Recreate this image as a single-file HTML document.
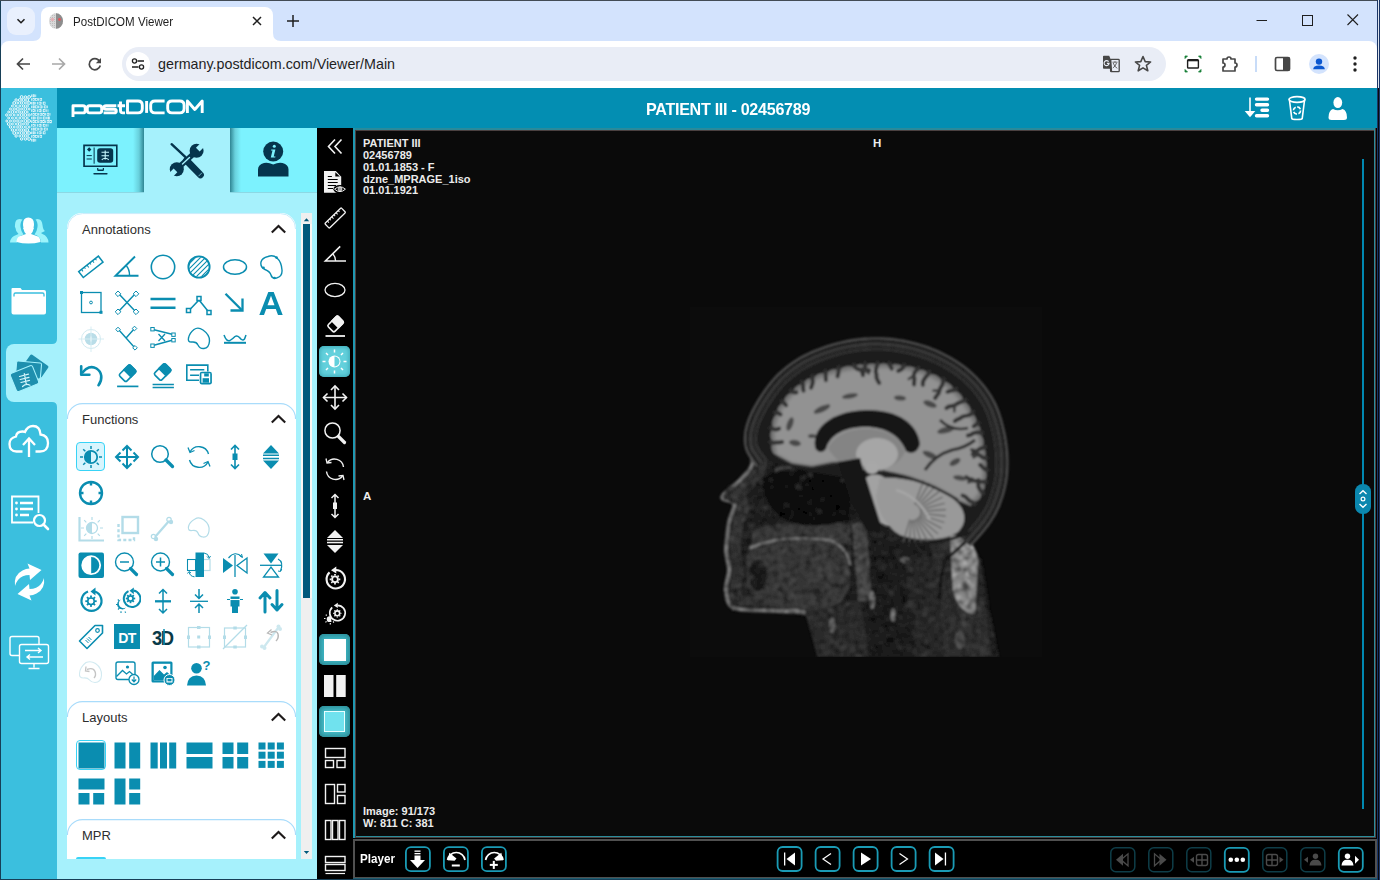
<!DOCTYPE html>
<html><head><meta charset="utf-8">
<style>
*{margin:0;padding:0;box-sizing:border-box}
html,body{width:1380px;height:880px;overflow:hidden;font-family:"Liberation Sans",sans-serif}
body{position:relative;background:#173f57}
.a{position:absolute}
svg{display:block}
</style></head><body>
<div class="a" style="left:0;top:0;width:1380px;height:1px;background:#424b55"></div>
<div class="a" style="left:1377px;top:0;width:1px;height:880px;background:#1a3566"></div>
<div class="a" style="left:1378px;top:0;width:1px;height:88px;background:#dfe6f0"></div><div class="a" style="left:1378px;top:88px;width:1px;height:792px;background:#0a0a0a"></div>
<div class="a" style="left:1379px;top:0;width:1px;height:880px;background:#1a3566"></div>

<!-- browser chrome -->
<div class="a" style="left:1px;top:1px;width:1376px;height:86px;background:#d3e3fd"></div>
<div class="a" style="left:7px;top:7px;width:28px;height:28px;border-radius:9px;background:#e9f0fd"></div>
<svg class="a" style="left:15px;top:15px" width="12" height="12" viewBox="0 0 12 12"><path d="M2.5 4.2 L6 7.7 L9.5 4.2" fill="none" stroke="#1f1f1f" stroke-width="1.6"/></svg>
<!-- tab -->
<div class="a" style="left:41px;top:7px;width:232px;height:40px;border-radius:8px 8px 0 0;background:#fff"></div>
<svg class="a" style="left:33px;top:33px" width="8" height="8"><path d="M0 8 Q8 8 8 0 L8 8 Z" fill="#fff"/></svg>
<svg class="a" style="left:273px;top:33px" width="8" height="8"><path d="M0 0 Q0 8 8 8 L0 8 Z" fill="#fff"/></svg>
<!-- favicon -->
<svg class="a" style="left:48px;top:13px" width="16" height="16" viewBox="0 0 16 16">
<defs><pattern id="fp" width="2" height="2" patternUnits="userSpaceOnUse"><rect width="2" height="2" fill="#d9d9d9"/><rect width="1" height="1" fill="#bdbdbd"/></pattern></defs>
<ellipse cx="8" cy="8" rx="7" ry="7.7" fill="url(#fp)"/>
<path d="M8 0.3 A7 7.7 0 0 1 8 15.7 Z" fill="#8d8d8d"/>
<circle cx="11.5" cy="6.5" r="1.4" fill="#e2555a"/>
<circle cx="4.5" cy="6.5" r="1.8" fill="#e7aab0" opacity=".8"/>
</svg>
<div class="a" style="left:73px;top:15px;font-size:12.5px;color:#1f1f1f;white-space:nowrap;transform:scaleX(.925);transform-origin:0 0">PostDICOM Viewer</div>
<svg class="a" style="left:251px;top:15px" width="12" height="12" viewBox="0 0 12 12"><path d="M2 2 L10 10 M10 2 L2 10" stroke="#1f1f1f" stroke-width="1.5"/></svg>
<svg class="a" style="left:286px;top:14px" width="14" height="14" viewBox="0 0 14 14"><path d="M7 1 V13 M1 7 H13" stroke="#1f1f1f" stroke-width="1.5"/></svg>
<!-- window controls -->
<svg class="a" style="left:1255px;top:14px" width="14" height="14"><path d="M1.5 6.5 H12" stroke="#1f1f1f" stroke-width="1"/></svg>
<svg class="a" style="left:1301px;top:14px" width="14" height="14"><rect x="1.5" y="1.5" width="10" height="10" fill="none" stroke="#1f1f1f" stroke-width="1"/></svg>
<svg class="a" style="left:1346px;top:13px" width="14" height="14"><path d="M1.5 1.5 L12 12 M12 1.5 L1.5 12" stroke="#1f1f1f" stroke-width="1.1"/></svg>
<!-- toolbar -->
<div class="a" style="left:1px;top:41px;width:1376px;height:47px;background:#fff;border-radius:8px 8px 0 0"></div>
<svg class="a" style="left:14px;top:55px" width="18" height="18" viewBox="0 0 18 18"><path d="M16 9 H3.5 M9 3.5 L3.5 9 L9 14.5" fill="none" stroke="#474747" stroke-width="1.7"/></svg>
<svg class="a" style="left:50px;top:55px" width="18" height="18" viewBox="0 0 18 18"><path d="M2 9 H14.5 M9 3.5 L14.5 9 L9 14.5" fill="none" stroke="#a8a8a8" stroke-width="1.7"/></svg>
<svg class="a" style="left:86px;top:55px" width="18" height="18" viewBox="0 0 18 18"><path d="M14.2 7.5 A5.6 5.6 0 1 0 14.3 10.5" fill="none" stroke="#474747" stroke-width="1.7"/><path d="M15 3 V8.2 H9.8 Z" fill="#474747"/></svg>
<div class="a" style="left:122px;top:47px;width:1044px;height:34px;border-radius:17px;background:#e9edf6"></div>
<div class="a" style="left:126px;top:52px;width:24px;height:24px;border-radius:12px;background:#fff"></div>
<svg class="a" style="left:131px;top:57px" width="14" height="14" viewBox="0 0 14 14"><path d="M6.5 4 H13 M1 10 H7.5" stroke="#1f1f1f" stroke-width="1.5"/><circle cx="3.5" cy="4" r="2.1" fill="none" stroke="#1f1f1f" stroke-width="1.3"/><circle cx="10.5" cy="10" r="2.1" fill="none" stroke="#1f1f1f" stroke-width="1.3"/></svg>
<div class="a" style="left:158px;top:56px;font-size:14.3px;color:#1f1f1f;white-space:nowrap">germany.postdicom.com/Viewer/Main</div>
<!-- translate icon -->
<svg class="a" style="left:1101px;top:55px" width="20" height="18" viewBox="0 0 20 18"><path d="M2.8 0.8 H8.2 L9.5 3.8 V13.8 L10.5 16.8 L8.8 13.8 H2.8 Q2 13.8 2 13 V1.6 Q2 0.8 2.8 0.8 Z" fill="#474747"/><rect x="9.6" y="4.4" width="8.6" height="12.3" rx="0.8" fill="#e9edf6" stroke="#474747" stroke-width="1.3"/><path d="M9.5 4 L10.6 16.8" stroke="#474747" stroke-width="1.2"/><path d="M7.6 6.6 A2.5 2.5 0 1 0 8.1 8.4 H5.9" fill="none" stroke="#e9edf6" stroke-width="1.1"/><path d="M11.5 7.2 H16.5 M14 6.2 V7.2 M12.2 8 Q13.5 12 16.3 13.3 M15.5 8 Q14.5 11.5 11.8 13" fill="none" stroke="#5a5a5a" stroke-width="0.9"/></svg>
<svg class="a" style="left:1133px;top:54px" width="20" height="20" viewBox="0 0 20 20"><path d="M10 2.5 L12.2 7.6 L17.6 8 L13.4 11.4 L14.8 16.8 L10 13.9 L5.2 16.8 L6.6 11.4 L2.4 8 L7.8 7.6 Z" fill="none" stroke="#474747" stroke-width="1.6" stroke-linejoin="round"/></svg>
<!-- capture icon -->
<svg class="a" style="left:1183px;top:55px" width="20" height="18" viewBox="0 0 20 18"><path d="M2 1 H4.5 L2 3.5 Z M18 1 H15.5 L18 3.5 Z M2 17 H4.5 L2 14.5 Z M18 17 H15.5 L18 14.5 Z" fill="#188038" stroke="#188038" stroke-width=".8"/><rect x="4.6" y="4.6" width="10.8" height="8.4" rx=".8" fill="none" stroke="#1f1f1f" stroke-width="1.4"/><path d="M4.6 5.6 H15.4" stroke="#1f1f1f" stroke-width="1.4"/></svg>
<svg class="a" style="left:1220px;top:54px" width="20" height="20" viewBox="0 0 20 20"><path d="M3 5 H7 A2 2 0 0 1 11 5 H15 V9 A2 2 0 0 1 15 13 V17 H3 V13 A2 2 0 0 0 3 9 Z" fill="none" stroke="#474747" stroke-width="1.7" stroke-linejoin="round"/></svg>
<div class="a" style="left:1255px;top:56px;width:2px;height:16px;background:#c8dcf8"></div>
<svg class="a" style="left:1273px;top:55px" width="20" height="18" viewBox="0 0 20 18"><rect x="2.5" y="2.5" width="14" height="13" rx="1.5" fill="none" stroke="#474747" stroke-width="1.7"/><rect x="10" y="2.5" width="6.5" height="13" fill="#474747"/></svg>
<div class="a" style="left:1309px;top:54px;width:20px;height:20px;border-radius:10px;background:#d3e3fd"></div>
<svg class="a" style="left:1309px;top:54px" width="20" height="20" viewBox="0 0 20 20"><circle cx="10" cy="7.6" r="3.2" fill="#0b57d0"/><path d="M4.2 15.2 Q4.2 11.4 10 11.4 Q15.8 11.4 15.8 15.2 Z" fill="#0b57d0"/></svg>
<svg class="a" style="left:1350px;top:54px" width="10" height="20" viewBox="0 0 10 20"><circle cx="5" cy="4" r="1.7" fill="#1f1f1f"/><circle cx="5" cy="10" r="1.7" fill="#1f1f1f"/><circle cx="5" cy="16" r="1.7" fill="#1f1f1f"/></svg>

<!-- app header -->
<div class="a" style="left:1px;top:88px;width:56px;height:791px;background:#3bbfde"></div>
<div class="a" style="left:57px;top:88px;width:1320px;height:40px;background:#038eb2"></div>
<!-- logo brain -->
<svg class="a" style="left:0px;top:88px" width="57" height="60" viewBox="0 88 57 60"><circle cx="21.6" cy="97.0" r="1.4" fill="none" stroke="#fff" stroke-width="0.9"/><circle cx="25.4" cy="97.0" r="1.2" fill="none" stroke="#fff" stroke-width="0.9"/><circle cx="29.1" cy="97.0" r="1.4" fill="none" stroke="#fff" stroke-width="0.9"/><circle cx="16.1" cy="100.0" r="1.2" fill="none" stroke="#fff" stroke-width="0.9"/><circle cx="19.8" cy="100.0" r="1.4" fill="none" stroke="#fff" stroke-width="0.9"/><circle cx="23.5" cy="100.0" r="1.4" fill="none" stroke="#fff" stroke-width="0.9"/><circle cx="27.2" cy="100.0" r="1.4" fill="none" stroke="#fff" stroke-width="0.9"/><circle cx="14.2" cy="103.0" r="1.4" fill="none" stroke="#fff" stroke-width="0.9"/><circle cx="17.9" cy="103.0" r="1.0" fill="none" stroke="#fff" stroke-width="0.9"/><circle cx="21.6" cy="103.0" r="1.2" fill="none" stroke="#fff" stroke-width="0.9"/><circle cx="25.4" cy="103.0" r="1.0" fill="none" stroke="#fff" stroke-width="0.9"/><circle cx="29.1" cy="103.0" r="1.4" fill="none" stroke="#fff" stroke-width="0.9"/><circle cx="12.4" cy="106.0" r="1.0" fill="none" stroke="#fff" stroke-width="0.9"/><circle cx="16.1" cy="106.0" r="1.0" fill="none" stroke="#fff" stroke-width="0.9"/><circle cx="19.8" cy="106.0" r="1.0" fill="none" stroke="#fff" stroke-width="0.9"/><circle cx="23.5" cy="106.0" r="1.2" fill="none" stroke="#fff" stroke-width="0.9"/><circle cx="27.2" cy="106.0" r="1.2" fill="none" stroke="#fff" stroke-width="0.9"/><circle cx="10.5" cy="109.0" r="1.0" fill="none" stroke="#fff" stroke-width="0.9"/><circle cx="14.2" cy="109.0" r="1.2" fill="none" stroke="#fff" stroke-width="0.9"/><circle cx="17.9" cy="109.0" r="1.4" fill="none" stroke="#fff" stroke-width="0.9"/><circle cx="21.6" cy="109.0" r="1.0" fill="none" stroke="#fff" stroke-width="0.9"/><circle cx="25.4" cy="109.0" r="1.4" fill="none" stroke="#fff" stroke-width="0.9"/><circle cx="29.1" cy="109.0" r="1.0" fill="none" stroke="#fff" stroke-width="0.9"/><circle cx="8.7" cy="112.0" r="1.0" fill="none" stroke="#fff" stroke-width="0.9"/><circle cx="12.4" cy="112.0" r="1.4" fill="none" stroke="#fff" stroke-width="0.9"/><circle cx="16.1" cy="112.0" r="1.0" fill="none" stroke="#fff" stroke-width="0.9"/><circle cx="19.8" cy="112.0" r="1.2" fill="none" stroke="#fff" stroke-width="0.9"/><circle cx="23.5" cy="112.0" r="1.2" fill="none" stroke="#fff" stroke-width="0.9"/><circle cx="27.2" cy="112.0" r="1.0" fill="none" stroke="#fff" stroke-width="0.9"/><circle cx="6.8" cy="115.0" r="1.2" fill="none" stroke="#fff" stroke-width="0.9"/><circle cx="10.5" cy="115.0" r="1.0" fill="none" stroke="#fff" stroke-width="0.9"/><circle cx="14.2" cy="115.0" r="1.0" fill="none" stroke="#fff" stroke-width="0.9"/><circle cx="17.9" cy="115.0" r="1.0" fill="none" stroke="#fff" stroke-width="0.9"/><circle cx="21.6" cy="115.0" r="1.4" fill="none" stroke="#fff" stroke-width="0.9"/><circle cx="25.4" cy="115.0" r="1.4" fill="none" stroke="#fff" stroke-width="0.9"/><circle cx="29.1" cy="115.0" r="1.2" fill="none" stroke="#fff" stroke-width="0.9"/><circle cx="8.7" cy="118.0" r="1.0" fill="none" stroke="#fff" stroke-width="0.9"/><circle cx="12.4" cy="118.0" r="1.0" fill="none" stroke="#fff" stroke-width="0.9"/><circle cx="16.1" cy="118.0" r="1.0" fill="none" stroke="#fff" stroke-width="0.9"/><circle cx="19.8" cy="118.0" r="1.0" fill="none" stroke="#fff" stroke-width="0.9"/><circle cx="23.5" cy="118.0" r="1.0" fill="none" stroke="#fff" stroke-width="0.9"/><circle cx="27.2" cy="118.0" r="1.0" fill="none" stroke="#fff" stroke-width="0.9"/><circle cx="6.8" cy="121.0" r="1.0" fill="none" stroke="#fff" stroke-width="0.9"/><circle cx="10.5" cy="121.0" r="1.0" fill="none" stroke="#fff" stroke-width="0.9"/><circle cx="14.2" cy="121.0" r="1.2" fill="none" stroke="#fff" stroke-width="0.9"/><circle cx="17.9" cy="121.0" r="1.2" fill="none" stroke="#fff" stroke-width="0.9"/><circle cx="21.6" cy="121.0" r="1.0" fill="none" stroke="#fff" stroke-width="0.9"/><circle cx="25.4" cy="121.0" r="1.4" fill="none" stroke="#fff" stroke-width="0.9"/><circle cx="29.1" cy="121.0" r="1.4" fill="none" stroke="#fff" stroke-width="0.9"/><circle cx="8.7" cy="124.0" r="1.4" fill="none" stroke="#fff" stroke-width="0.9"/><circle cx="12.4" cy="124.0" r="1.0" fill="none" stroke="#fff" stroke-width="0.9"/><circle cx="16.1" cy="124.0" r="1.0" fill="none" stroke="#fff" stroke-width="0.9"/><circle cx="19.8" cy="124.0" r="1.4" fill="none" stroke="#fff" stroke-width="0.9"/><circle cx="23.5" cy="124.0" r="1.0" fill="none" stroke="#fff" stroke-width="0.9"/><circle cx="27.2" cy="124.0" r="1.2" fill="none" stroke="#fff" stroke-width="0.9"/><circle cx="10.5" cy="127.0" r="1.2" fill="none" stroke="#fff" stroke-width="0.9"/><circle cx="14.2" cy="127.0" r="1.0" fill="none" stroke="#fff" stroke-width="0.9"/><circle cx="17.9" cy="127.0" r="1.2" fill="none" stroke="#fff" stroke-width="0.9"/><circle cx="21.6" cy="127.0" r="1.2" fill="none" stroke="#fff" stroke-width="0.9"/><circle cx="25.4" cy="127.0" r="1.0" fill="none" stroke="#fff" stroke-width="0.9"/><circle cx="29.1" cy="127.0" r="1.0" fill="none" stroke="#fff" stroke-width="0.9"/><circle cx="12.4" cy="130.0" r="1.2" fill="none" stroke="#fff" stroke-width="0.9"/><circle cx="16.1" cy="130.0" r="1.0" fill="none" stroke="#fff" stroke-width="0.9"/><circle cx="19.8" cy="130.0" r="1.2" fill="none" stroke="#fff" stroke-width="0.9"/><circle cx="23.5" cy="130.0" r="1.2" fill="none" stroke="#fff" stroke-width="0.9"/><circle cx="27.2" cy="130.0" r="1.4" fill="none" stroke="#fff" stroke-width="0.9"/><circle cx="14.2" cy="133.0" r="1.4" fill="none" stroke="#fff" stroke-width="0.9"/><circle cx="17.9" cy="133.0" r="1.0" fill="none" stroke="#fff" stroke-width="0.9"/><circle cx="21.6" cy="133.0" r="1.4" fill="none" stroke="#fff" stroke-width="0.9"/><circle cx="25.4" cy="133.0" r="1.4" fill="none" stroke="#fff" stroke-width="0.9"/><circle cx="29.1" cy="133.0" r="1.4" fill="none" stroke="#fff" stroke-width="0.9"/><circle cx="16.1" cy="136.0" r="1.2" fill="none" stroke="#fff" stroke-width="0.9"/><circle cx="19.8" cy="136.0" r="1.0" fill="none" stroke="#fff" stroke-width="0.9"/><circle cx="23.5" cy="136.0" r="1.2" fill="none" stroke="#fff" stroke-width="0.9"/><circle cx="27.2" cy="136.0" r="1.2" fill="none" stroke="#fff" stroke-width="0.9"/><circle cx="21.6" cy="139.0" r="1.2" fill="none" stroke="#fff" stroke-width="0.9"/><circle cx="25.4" cy="139.0" r="1.2" fill="none" stroke="#fff" stroke-width="0.9"/><circle cx="29.1" cy="139.0" r="1.4" fill="none" stroke="#fff" stroke-width="0.9"/><rect x="31.0" y="94.5" width="0.75" height="2.6" fill="#fff" opacity=".9"/><rect x="32.9" y="94.7" width="1.7" height="2.2" fill="none" stroke="#fff" stroke-width="0.7" opacity=".9"/><rect x="35.4" y="94.5" width="0.75" height="2.6" fill="#fff" opacity=".9"/><rect x="31.0" y="98.2" width="0.75" height="2.6" fill="#fff" opacity=".9"/><rect x="32.9" y="98.4" width="1.7" height="2.2" fill="none" stroke="#fff" stroke-width="0.7" opacity=".9"/><rect x="35.6" y="98.4" width="1.7" height="2.2" fill="none" stroke="#fff" stroke-width="0.7" opacity=".9"/><rect x="38.1" y="98.2" width="0.75" height="2.6" fill="#fff" opacity=".9"/><rect x="40.0" y="98.4" width="1.7" height="2.2" fill="none" stroke="#fff" stroke-width="0.7" opacity=".9"/><rect x="31.0" y="101.9" width="0.75" height="2.6" fill="#fff" opacity=".9"/><rect x="32.9" y="102.1" width="1.7" height="2.2" fill="none" stroke="#fff" stroke-width="0.7" opacity=".9"/><rect x="35.4" y="101.9" width="0.75" height="2.6" fill="#fff" opacity=".9"/><rect x="37.1" y="101.9" width="0.75" height="2.6" fill="#fff" opacity=".9"/><rect x="39.0" y="102.1" width="1.7" height="2.2" fill="none" stroke="#fff" stroke-width="0.7" opacity=".9"/><rect x="41.5" y="101.9" width="0.75" height="2.6" fill="#fff" opacity=".9"/><rect x="43.4" y="102.1" width="1.7" height="2.2" fill="none" stroke="#fff" stroke-width="0.7" opacity=".9"/><rect x="31.0" y="105.6" width="0.75" height="2.6" fill="#fff" opacity=".9"/><rect x="32.9" y="105.8" width="1.7" height="2.2" fill="none" stroke="#fff" stroke-width="0.7" opacity=".9"/><rect x="35.6" y="105.8" width="1.7" height="2.2" fill="none" stroke="#fff" stroke-width="0.7" opacity=".9"/><rect x="38.1" y="105.6" width="0.75" height="2.6" fill="#fff" opacity=".9"/><rect x="40.0" y="105.8" width="1.7" height="2.2" fill="none" stroke="#fff" stroke-width="0.7" opacity=".9"/><rect x="42.5" y="105.6" width="0.75" height="2.6" fill="#fff" opacity=".9"/><rect x="44.4" y="105.8" width="1.7" height="2.2" fill="none" stroke="#fff" stroke-width="0.7" opacity=".9"/><rect x="46.9" y="105.6" width="0.75" height="2.6" fill="#fff" opacity=".9"/><rect x="31.0" y="109.3" width="0.75" height="2.6" fill="#fff" opacity=".9"/><rect x="32.9" y="109.5" width="1.7" height="2.2" fill="none" stroke="#fff" stroke-width="0.7" opacity=".9"/><rect x="35.4" y="109.3" width="0.75" height="2.6" fill="#fff" opacity=".9"/><rect x="37.1" y="109.3" width="0.75" height="2.6" fill="#fff" opacity=".9"/><rect x="39.0" y="109.5" width="1.7" height="2.2" fill="none" stroke="#fff" stroke-width="0.7" opacity=".9"/><rect x="41.5" y="109.3" width="0.75" height="2.6" fill="#fff" opacity=".9"/><rect x="43.4" y="109.5" width="1.7" height="2.2" fill="none" stroke="#fff" stroke-width="0.7" opacity=".9"/><rect x="45.9" y="109.3" width="0.75" height="2.6" fill="#fff" opacity=".9"/><rect x="47.6" y="109.3" width="0.75" height="2.6" fill="#fff" opacity=".9"/><rect x="31.0" y="113.0" width="0.75" height="2.6" fill="#fff" opacity=".9"/><rect x="32.9" y="113.2" width="1.7" height="2.2" fill="none" stroke="#fff" stroke-width="0.7" opacity=".9"/><rect x="35.6" y="113.2" width="1.7" height="2.2" fill="none" stroke="#fff" stroke-width="0.7" opacity=".9"/><rect x="38.1" y="113.0" width="0.75" height="2.6" fill="#fff" opacity=".9"/><rect x="40.0" y="113.2" width="1.7" height="2.2" fill="none" stroke="#fff" stroke-width="0.7" opacity=".9"/><rect x="42.7" y="113.2" width="1.7" height="2.2" fill="none" stroke="#fff" stroke-width="0.7" opacity=".9"/><rect x="45.2" y="113.0" width="0.75" height="2.6" fill="#fff" opacity=".9"/><rect x="47.1" y="113.2" width="1.7" height="2.2" fill="none" stroke="#fff" stroke-width="0.7" opacity=".9"/><rect x="49.6" y="113.0" width="0.75" height="2.6" fill="#fff" opacity=".9"/><rect x="31.0" y="116.7" width="0.75" height="2.6" fill="#fff" opacity=".9"/><rect x="32.9" y="116.9" width="1.7" height="2.2" fill="none" stroke="#fff" stroke-width="0.7" opacity=".9"/><rect x="35.4" y="116.7" width="0.75" height="2.6" fill="#fff" opacity=".9"/><rect x="37.3" y="116.9" width="1.7" height="2.2" fill="none" stroke="#fff" stroke-width="0.7" opacity=".9"/><rect x="39.8" y="116.7" width="0.75" height="2.6" fill="#fff" opacity=".9"/><rect x="41.5" y="116.7" width="0.75" height="2.6" fill="#fff" opacity=".9"/><rect x="43.4" y="116.9" width="1.7" height="2.2" fill="none" stroke="#fff" stroke-width="0.7" opacity=".9"/><rect x="45.9" y="116.7" width="0.75" height="2.6" fill="#fff" opacity=".9"/><rect x="47.8" y="116.9" width="1.7" height="2.2" fill="none" stroke="#fff" stroke-width="0.7" opacity=".9"/><rect x="31.0" y="120.4" width="0.75" height="2.6" fill="#fff" opacity=".9"/><rect x="32.9" y="120.6" width="1.7" height="2.2" fill="none" stroke="#fff" stroke-width="0.7" opacity=".9"/><rect x="35.6" y="120.6" width="1.7" height="2.2" fill="none" stroke="#fff" stroke-width="0.7" opacity=".9"/><rect x="38.1" y="120.4" width="0.75" height="2.6" fill="#fff" opacity=".9"/><rect x="40.0" y="120.6" width="1.7" height="2.2" fill="none" stroke="#fff" stroke-width="0.7" opacity=".9"/><rect x="42.7" y="120.6" width="1.7" height="2.2" fill="none" stroke="#fff" stroke-width="0.7" opacity=".9"/><rect x="45.2" y="120.4" width="0.75" height="2.6" fill="#fff" opacity=".9"/><rect x="47.1" y="120.6" width="1.7" height="2.2" fill="none" stroke="#fff" stroke-width="0.7" opacity=".9"/><rect x="49.8" y="120.6" width="1.7" height="2.2" fill="none" stroke="#fff" stroke-width="0.7" opacity=".9"/><rect x="31.0" y="124.1" width="0.75" height="2.6" fill="#fff" opacity=".9"/><rect x="32.9" y="124.3" width="1.7" height="2.2" fill="none" stroke="#fff" stroke-width="0.7" opacity=".9"/><rect x="35.4" y="124.1" width="0.75" height="2.6" fill="#fff" opacity=".9"/><rect x="37.1" y="124.1" width="0.75" height="2.6" fill="#fff" opacity=".9"/><rect x="39.0" y="124.3" width="1.7" height="2.2" fill="none" stroke="#fff" stroke-width="0.7" opacity=".9"/><rect x="41.5" y="124.1" width="0.75" height="2.6" fill="#fff" opacity=".9"/><rect x="43.4" y="124.3" width="1.7" height="2.2" fill="none" stroke="#fff" stroke-width="0.7" opacity=".9"/><rect x="45.9" y="124.1" width="0.75" height="2.6" fill="#fff" opacity=".9"/><rect x="47.6" y="124.1" width="0.75" height="2.6" fill="#fff" opacity=".9"/><rect x="31.0" y="127.8" width="0.75" height="2.6" fill="#fff" opacity=".9"/><rect x="32.9" y="128.0" width="1.7" height="2.2" fill="none" stroke="#fff" stroke-width="0.7" opacity=".9"/><rect x="35.6" y="128.0" width="1.7" height="2.2" fill="none" stroke="#fff" stroke-width="0.7" opacity=".9"/><rect x="38.1" y="127.8" width="0.75" height="2.6" fill="#fff" opacity=".9"/><rect x="40.0" y="128.0" width="1.7" height="2.2" fill="none" stroke="#fff" stroke-width="0.7" opacity=".9"/><rect x="42.5" y="127.8" width="0.75" height="2.6" fill="#fff" opacity=".9"/><rect x="44.4" y="128.0" width="1.7" height="2.2" fill="none" stroke="#fff" stroke-width="0.7" opacity=".9"/><rect x="46.9" y="127.8" width="0.75" height="2.6" fill="#fff" opacity=".9"/><rect x="31.0" y="131.5" width="0.75" height="2.6" fill="#fff" opacity=".9"/><rect x="32.9" y="131.7" width="1.7" height="2.2" fill="none" stroke="#fff" stroke-width="0.7" opacity=".9"/><rect x="35.4" y="131.5" width="0.75" height="2.6" fill="#fff" opacity=".9"/><rect x="37.1" y="131.5" width="0.75" height="2.6" fill="#fff" opacity=".9"/><rect x="39.0" y="131.7" width="1.7" height="2.2" fill="none" stroke="#fff" stroke-width="0.7" opacity=".9"/><rect x="41.5" y="131.5" width="0.75" height="2.6" fill="#fff" opacity=".9"/><rect x="43.4" y="131.7" width="1.7" height="2.2" fill="none" stroke="#fff" stroke-width="0.7" opacity=".9"/><rect x="31.0" y="135.2" width="0.75" height="2.6" fill="#fff" opacity=".9"/><rect x="32.9" y="135.4" width="1.7" height="2.2" fill="none" stroke="#fff" stroke-width="0.7" opacity=".9"/><rect x="35.6" y="135.4" width="1.7" height="2.2" fill="none" stroke="#fff" stroke-width="0.7" opacity=".9"/><rect x="38.1" y="135.2" width="0.75" height="2.6" fill="#fff" opacity=".9"/><rect x="40.0" y="135.4" width="1.7" height="2.2" fill="none" stroke="#fff" stroke-width="0.7" opacity=".9"/><rect x="31.0" y="138.9" width="0.75" height="2.6" fill="#fff" opacity=".9"/><rect x="32.9" y="139.1" width="1.7" height="2.2" fill="none" stroke="#fff" stroke-width="0.7" opacity=".9"/><rect x="35.4" y="138.9" width="0.75" height="2.6" fill="#fff" opacity=".9"/></svg>
<!-- postDICOM wordmark -->
<svg class="a" style="left:70px;top:97px" width="136" height="22" viewBox="0 0 136 22">
<g fill="none" stroke="#fff" stroke-width="2.9" stroke-linejoin="round">
<path d="M3 20 V8.7 H13 Q15.2 8.7 15.2 11 V13.7 Q15.2 15.9 13 15.9 H3"/>
<path d="M19.5 8.7 H29.5 Q31.7 8.7 31.7 11 V13.6 Q31.7 15.9 29.5 15.9 H19.5 Q17.3 15.9 17.3 13.6 V11 Q17.3 8.7 19.5 8.7 Z"/>
<path d="M46.3 8.7 H36 Q34 8.7 34 10.4 Q34 12.2 36 12.2 H44 Q46.3 12.2 46.3 14 Q46.3 15.9 44 15.9 H33.6"/>
<path d="M50.5 4.5 V13.6 Q50.5 15.9 52.8 15.9 H55 M47.5 8.7 H55"/>
<path d="M57.5 4 H68 Q72.3 4 72.3 8.3 V11.6 Q72.3 15.9 68 15.9 H57.5 Z"/>
<path d="M76.6 4 V15.9"/>
<path d="M94.6 4 H85 Q80.7 4 80.7 8.3 V11.6 Q80.7 15.9 85 15.9 H94.6"/>
<path d="M102 4 H109.8 Q114.1 4 114.1 8.3 V11.6 Q114.1 15.9 109.8 15.9 H102 Q97.7 15.9 97.7 11.6 V8.3 Q97.7 4 102 4 Z"/>
<path d="M117.4 16 V4 L124.8 12.5 L132.2 4 V16"/>
</g></svg>
<div class="a" style="left:646px;top:100px;font-size:17px;font-weight:bold;color:#fff;white-space:nowrap;letter-spacing:-0.3px;transform:scaleX(.947);transform-origin:0 0">PATIENT III - 02456789</div>
<!-- header right icons -->
<svg class="a" style="left:1243px;top:96px" width="28" height="24" viewBox="0 0 28 24">
<path d="M7 1.5 V16" stroke="#fff" stroke-width="1.6"/><path d="M1.7 15 H12.3 L7 21.3 Z" fill="#fff"/>
<g stroke="#fff" stroke-width="3.4" stroke-linecap="round"><path d="M13.5 3.1 H24.5 M13.5 8.8 H24.5 M19 14.2 H24.5 M13.5 19.7 H24.5"/></g>
</svg>
<svg class="a" style="left:1286px;top:94px" width="22" height="28" viewBox="0 0 22 28">
<path d="M3.5 6.5 L5.8 24.5 Q6 25.5 11 25.5 Q16 25.5 16.2 24.5 L18.5 6.5" fill="none" stroke="#fff" stroke-width="1.6"/>
<ellipse cx="11" cy="5.5" rx="8" ry="2.8" fill="none" stroke="#fff" stroke-width="1.8"/>
<circle cx="11" cy="16.5" r="3.6" fill="none" stroke="#fff" stroke-width="1.6" stroke-dasharray="4 1.6"/>
</svg>
<svg class="a" style="left:1327px;top:95px" width="22" height="26" viewBox="0 0 22 26">
<ellipse cx="10.8" cy="7.6" rx="4.4" ry="5.5" fill="#fff"/>
<path d="M1.5 22.5 Q1.5 15.5 6 14 Q10.8 16.5 15.6 14 Q20 15.5 20 22.5 Q20 25 17 25 H4.5 Q1.5 25 1.5 22.5 Z" fill="#fff"/>
</svg>

<!-- nav icons -->
<div class="a" style="left:6px;top:344px;width:51px;height:58px;background:#a6f1fc;border-radius:8px 0 0 8px"></div>
<svg class="a" style="left:52px;top:338px" width="5" height="70" viewBox="0 0 5 70">
<path d="M5 0 V6 H0 Q5 6 5 1 Z" fill="#a6f1fc"/>
<path d="M5 70 V64 H0 Q5 64 5 69 Z" fill="#a6f1fc"/>
</svg>
<svg class="a" style="left:1px;top:88px" width="56" height="791" viewBox="1 88 56 791">
<!-- users -->
<g fill="#9cf4fb">
<path d="M19.5 219 Q15 219 15 225 Q14.5 227 15.5 228 Q15.5 231 18.5 234 L14 236 Q10 238.5 10 242.5 H17 Q17 238 21 235.5 L23.5 234.5 Q21 231.5 20.5 227 Q20 222 22.5 219.5 Z"/>
<path d="M37.5 219 Q42 219 42.5 225 Q43 230 45 231 L41 233 L42.5 234 Q48 236 48.5 242.5 H41 Q41 238 37 235.5 L34.5 234.5 Q37 231.5 37.5 227 Q38 222 35.5 219.5 Z"/>
</g>
<g fill="#fff">
<path d="M28.3 217.5 Q23 217.5 23 224 Q23 226.5 23.5 227.5 Q22.5 228 23.5 229 Q24 232 26 234 L19 236.5 Q16.5 238 16.5 242 Q22 243.5 28.5 243.5 Q35 243.5 40.5 242 Q40.5 238 38 236.5 L31 234 Q33 232 33.5 229 Q34.5 228 33.5 227.5 Q34 226.5 34 224 Q34 217.5 28.3 217.5 Z"/>
<!-- folder -->
<path d="M12.5 288 H20.5 L22 290 H44 Q46 290 46 292 V312.5 Q46 314.5 44 314.5 H13.5 Q11.5 314.5 11.5 312.5 V289 Q11.5 288 12.5 288 Z"/>
</g>
<path d="M14 296.5 V294.5 Q14 293 15.5 293 H42.5 Q44 293 44 294.5 V296.5" fill="none" stroke="#3bbfde" stroke-width="1.3"/>
<!-- film cards -->
<g transform="rotate(35 36 366)"><rect x="25" y="359" width="22" height="14" rx="1.5" fill="#1e8fae"/></g>
<g transform="rotate(5 28.5 370)"><rect x="16" y="362" width="25" height="16" rx="1.5" fill="#1e8fae" stroke="#a6f1fc" stroke-width="1.1"/></g>
<g transform="rotate(-22 24.5 378.6)"><rect x="12.5" y="368.8" width="24" height="19.6" rx="2" fill="#1e8fae" stroke="#a6f1fc" stroke-width="1.1"/></g>
<g stroke="#d6f6fb" stroke-width="1.2" fill="none" stroke-linecap="round"><path d="M24.3 373.5 L26.3 384.5 M19.5 376.5 L28.5 374.2 M20.2 379.5 L29 377.3 M21 382.5 L29.5 380.3 M22.5 386.5 Q26 383 30 385.2"/></g>
<!-- cloud -->
<g fill="none" stroke="#fff" stroke-width="2.3">
<path d="M22.5 451.5 H16.5 Q9.5 451.5 9.5 444 Q9.5 438 16 436.5 Q16.5 431.5 22.5 431.5 Q24 431.5 25 432 Q27.5 426 33 426 Q40 426 40.5 434.5 Q48 435.5 48 443 Q48 451.5 40 451.5 H35.5"/>
<path d="M29 457 V438.5 M23 445 L29 438.5 L35 445"/>
</g>
<!-- list search -->
<g fill="none" stroke="#fff">
<path d="M33 522.5 H12 V496.5 H38.5 V513" stroke-width="1.8"/>
<path d="M20 503 H33 M20 509 H33 M20 515 H29" stroke-width="2.3"/>
<circle cx="39.5" cy="520.5" r="5.5" stroke-width="2.2"/><path d="M43.5 524.5 L48 529" stroke-width="2.6" stroke-linecap="round"/>
</g>
<g fill="#fff"><circle cx="16.5" cy="503" r="1.4"/><circle cx="16.5" cy="509" r="1.4"/><circle cx="16.5" cy="515" r="1.4"/></g>
<!-- sync -->
<g fill="#fff">
<path d="M15 586 Q13.5 575 22.5 570.5 Q26 568.5 29.5 568.5 L27.5 563.5 L41.5 570 L30 580 L29.5 575 Q22 575 18 580 Q16 582.5 15 586 Z"/>
<path d="M44 578 Q45.5 589 36.5 593.5 Q33 595.5 29.5 595.5 L31.5 600.5 L17.5 594 L29 584 L29.5 589 Q37 589 41 584 Q43 581.5 44 578 Z"/>
</g>
<!-- monitors -->
<g fill="none" stroke="#fff" stroke-width="1.4">
<rect x="10" y="636.5" width="29" height="19" rx="2"/>
<rect x="19.5" y="644.5" width="29" height="19" rx="2" fill="#3bbfde"/>
<path d="M34 663.5 V667.5 M28.5 668.5 H39.5"/>
<path d="M25 650.5 H41 M38 648 L41 650.5 L38 653 M27 657 H43 M30 654.5 L27 657 L30 659.5"/>
</g>
</svg>

<!-- side panel -->
<div class="a" style="left:57px;top:128px;width:260px;height:751px;background:#a6f1fc"></div>
<div class="a" style="left:57px;top:128px;width:87px;height:65px;background:linear-gradient(to right,#7cf2fe 0,#7cf2fe 76px,#68d0dc 82px,#2f8593 87px)"></div>
<div class="a" style="left:230px;top:128px;width:87px;height:65px;background:linear-gradient(to left,#7cf2fe 0,#7cf2fe 76px,#68d0dc 82px,#2f8593 87px)"></div>
<div class="a" style="left:57px;top:192px;width:87px;height:1px;background:#8cd8e4"></div>
<div class="a" style="left:230px;top:192px;width:87px;height:1px;background:#8cd8e4"></div>
<!-- tab1 icon monitor -->
<svg class="a" style="left:81px;top:142px" width="40" height="34" viewBox="0 0 40 34">
<g fill="#06354d">
<path d="M2.2 2.6 H36.6 V25 H2.2 Z M3.9 4.2 V23.4 H35 V4.2 Z" fill-rule="evenodd"/>
<rect x="12.5" y="5.5" width="1.3" height="16.2" fill="#1e5d72"/>
<path d="M8.2 5.2 L10.4 7.5 L8.2 9.8 L6 7.5 Z"/>
<rect x="5.6" y="13.1" width="5.2" height="1"/><rect x="5.6" y="16.5" width="5.2" height="1"/>
<rect x="16.2" y="6.3" width="16" height="14.5" rx="2.8"/>
<path d="M16.1 26 V27.8 Q16.1 29 17.3 29 H21.8 Q23 29 23 27.8 V26 H21.8 V27.6 H17.3 V26 Z"/>
<rect x="12.3" y="31" width="14.3" height="1.4" rx=".7"/>
</g>
<g stroke="#c8f8fe" stroke-width="1.1" fill="none"><path d="M24.2 8.5 V17.5 M20.5 10.2 H28 M20.5 13.7 H28 M20.8 17.8 Q22.5 15.8 24.2 16.8 Q26 15.8 27.7 17.8"/></g>
</svg>
<!-- tab2 icon tools -->
<svg class="a" style="left:168px;top:141px" width="38" height="39" viewBox="0 0 38 39">
<defs><mask id="wm"><rect width="38" height="39" fill="#fff"/>
<path d="M29.8 8.6 L36 2.4" stroke="#000" stroke-width="5.2" stroke-linecap="butt"/>
<path d="M7.5 29.4 L1.3 35.6" stroke="#000" stroke-width="5.2" stroke-linecap="butt"/>
</mask></defs>
<g fill="#06354d">
<path d="M3.6 3.2 L17.5 16.2" stroke="#06354d" stroke-width="2.4" stroke-linecap="round"/>
<g mask="url(#wm)">
<circle cx="28.6" cy="9.8" r="7"/><circle cx="8.8" cy="28.2" r="7"/>
<path d="M10 27 L27.5 11" stroke="#06354d" stroke-width="5.5"/>
</g>
<path d="M18.5 19.5 L32.5 33.8" stroke="#06354d" stroke-width="6.8" stroke-linecap="round"/>
</g>
<path d="M14.5 23 L21.5 16.5" stroke="#a6f1fc" stroke-width="1.4" stroke-linecap="round"/>
<path d="M30.5 35.2 L34 31.7" stroke="#a6f1fc" stroke-width=".7"/>
</svg>
<!-- tab3 icon person info -->
<svg class="a" style="left:256px;top:140px" width="36" height="38" viewBox="0 0 36 38">
<circle cx="17.2" cy="11.5" r="10" fill="#06354d"/>
<path d="M2 36.6 V29.5 Q2 24.5 8 23 Q12 22 17.2 24.5 Q22.5 22 26.5 23 Q32.5 24.5 32.5 29.5 V36.6 Z" fill="#06354d"/>
<circle cx="18.3" cy="6.3" r="1.5" fill="#7cf2fe"/>
<path d="M15.3 9.5 H19.4 L17.7 16.6 H19.5 L19.2 17.6 H14.8 L16.5 10.5 H15 Z" fill="#7cf2fe"/>
</svg>

<!-- cards -->
<div class="a" style="left:67px;top:213px;width:229px;height:646px;background:#fff;border-radius:15px 15px 0 0"></div>
<svg class="a" style="left:67px;top:213px" width="229" height="20" viewBox="0 0 229 20"><path d="M0.5 16 A15 15 0 0 1 15.5 0.6 H213.5 A15 15 0 0 1 228.5 16" fill="none" stroke="#c8ecfb" stroke-width="1"/></svg>
<div class="a" style="left:82px;top:222px;font-size:13px;color:#2e2e2e;white-space:nowrap">Annotations</div>
<svg class="a" style="left:270px;top:223px" width="17" height="12" viewBox="0 0 17 12"><path d="M1.8 9.6 L8.5 2.9 L15.2 9.6" fill="none" stroke="#1e1a1a" stroke-width="2.1"/></svg>
<svg class="a" style="left:67px;top:403px" width="229" height="20" viewBox="0 0 229 20"><path d="M0.5 16 A15 15 0 0 1 15.5 0.6 H213.5 A15 15 0 0 1 228.5 16" fill="none" stroke="#a9dcfb" stroke-width="1.1"/></svg>
<div class="a" style="left:82px;top:412px;font-size:13px;color:#2e2e2e;white-space:nowrap">Functions</div>
<svg class="a" style="left:270px;top:413px" width="17" height="12" viewBox="0 0 17 12"><path d="M1.8 9.6 L8.5 2.9 L15.2 9.6" fill="none" stroke="#1e1a1a" stroke-width="2.1"/></svg>
<svg class="a" style="left:67px;top:701px" width="229" height="20" viewBox="0 0 229 20"><path d="M0.5 16 A15 15 0 0 1 15.5 0.6 H213.5 A15 15 0 0 1 228.5 16" fill="none" stroke="#a9dcfb" stroke-width="1.1"/></svg>
<div class="a" style="left:82px;top:710px;font-size:13px;color:#2e2e2e;white-space:nowrap">Layouts</div>
<svg class="a" style="left:270px;top:711px" width="17" height="12" viewBox="0 0 17 12"><path d="M1.8 9.6 L8.5 2.9 L15.2 9.6" fill="none" stroke="#1e1a1a" stroke-width="2.1"/></svg>
<svg class="a" style="left:67px;top:819px" width="229" height="20" viewBox="0 0 229 20"><path d="M0.5 16 A15 15 0 0 1 15.5 0.6 H213.5 A15 15 0 0 1 228.5 16" fill="none" stroke="#a9dcfb" stroke-width="1.1"/></svg>
<div class="a" style="left:82px;top:828px;font-size:13px;color:#2e2e2e;white-space:nowrap">MPR</div>
<svg class="a" style="left:270px;top:829px" width="17" height="12" viewBox="0 0 17 12"><path d="M1.8 9.6 L8.5 2.9 L15.2 9.6" fill="none" stroke="#1e1a1a" stroke-width="2.1"/></svg>
<div class="a" style="left:301px;top:213px;width:11px;height:646px;background:#efefef"></div>
<div class="a" style="left:301px;top:224px;width:11px;height:374px;background:#fbf5f2"></div>
<div class="a" style="left:303px;top:224px;width:7px;height:374px;background:#00597b"></div>
<svg class="a" style="left:301px;top:213px" width="11" height="12"><path d="M2.8 8.3 L5.5 5.2 L8.2 8.3 Z" fill="#00597b"/></svg>
<svg class="a" style="left:301px;top:847px" width="11" height="12"><path d="M2.8 4 L5.5 7.1 L8.2 4 Z" fill="#00597b"/></svg>
<div class="a" style="left:76px;top:442px;width:29px;height:29px;border-radius:4px;background:#d8f5fd;border:1.3px solid #38d3f6"></div>
<div class="a" style="left:76px;top:740px;width:30px;height:30px;border-radius:4px;border:1.3px solid #38d3f6;background:#fff"></div>
<div class="a" style="left:76px;top:857px;width:30px;height:2px;background:#38d3f6;border-radius:2px 2px 0 0"></div>
<svg class="a" style="left:76.5px;top:252.5px" width="28" height="28" viewBox="0 0 28 28"><g transform="rotate(-38 14 14)"><rect x="1.5" y="10" width="25" height="7.5" fill="none" stroke="#0a8db0" stroke-width="1.5"/><path d="M5 10 V12.5 M8.5 10 V12 M12 10 V13 M15.5 10 V12 M19 10 V12.5 M22.5 10 V12" fill="none" stroke="#0a8db0" stroke-width="1"/></g></svg>
<svg class="a" style="left:112.5px;top:252.5px" width="28" height="28" viewBox="0 0 28 28"><path d="M22 3.5 L2.5 22.8 H25.5" fill="none" stroke="#0a8db0" stroke-width="1.9"/><path d="M13.5 13 Q16.5 16.5 16.5 22" fill="none" stroke="#0a8db0" stroke-width="1.4"/></svg>
<svg class="a" style="left:148.5px;top:252.5px" width="28" height="28" viewBox="0 0 28 28"><circle cx="14" cy="14" r="11.7" fill="none" stroke="#0a8db0" stroke-width="1.6"/></svg>
<svg class="a" style="left:184.5px;top:252.5px" width="28" height="28" viewBox="0 0 28 28"><defs><clipPath id="hc"><circle cx="14" cy="14" r="10"/></clipPath></defs><circle cx="14" cy="14" r="10.6" fill="none" stroke="#0a8db0" stroke-width="1.9"/><g clip-path="url(#hc)" fill="none" stroke="#0a8db0" stroke-width="1.1"><path d="M0 10 L10 0 M0 15 L15 0 M0 20 L20 0 M0 25 L25 0 M2 28 L28 2 M7 28 L28 7 M12 28 L28 12 M17 28 L28 17 M22 28 L28 22"/></g></svg>
<svg class="a" style="left:220.5px;top:252.5px" width="28" height="28" viewBox="0 0 28 28"><ellipse cx="14" cy="14" rx="11.5" ry="7.3" fill="none" stroke="#0a8db0" stroke-width="1.5"/></svg>
<svg class="a" style="left:256.5px;top:252.5px" width="28" height="28" viewBox="0 0 28 28"><path d="M11 3.5 Q16 1.5 20 5 Q24.5 9 25 17 Q25.5 23.5 19.5 25 Q15 26 14 22 Q13 18.5 8 16.5 Q3 14 4 9 Q5 5 11 3.5 Z" fill="none" stroke="#0a8db0" stroke-width="1.4"/><circle cx="19.5" cy="4.6" r="1.3" fill="#0a8db0"/><circle cx="6.5" cy="14.8" r="1.3" fill="#0a8db0"/><circle cx="17.5" cy="25" r="1.3" fill="#0a8db0"/></svg>
<svg class="a" style="left:76.5px;top:288.5px" width="28" height="28" viewBox="0 0 28 28"><rect x="4.5" y="3.5" width="19.5" height="20" fill="none" stroke="#0a8db0" stroke-width="1.3"/><rect x="3" y="2" width="3" height="3" fill="#0a8db0"/><rect x="22.5" y="21.8" width="3" height="3" fill="#0a8db0"/><circle cx="14" cy="13.5" r="1.4" fill="none" stroke="#0a8db0" stroke-width="1"/></svg>
<svg class="a" style="left:112.5px;top:288.5px" width="28" height="28" viewBox="0 0 28 28"><path d="M6 5 L22 22 M22 5 L6 22" fill="none" stroke="#0a8db0" stroke-width="1.5"/><g fill="none" stroke="#0a8db0" stroke-width="1" fill="#fff"><path d="M5 2 L7.8 4.8 L5 7.6 L2.2 4.8 Z M23 2 L25.8 4.8 L23 7.6 L20.2 4.8 Z M5 20 L7.8 22.8 L5 25.6 L2.2 22.8 Z M23 20 L25.8 22.8 L23 25.6 L20.2 22.8 Z" fill="#fff"/></g></svg>
<svg class="a" style="left:148.5px;top:288.5px" width="28" height="28" viewBox="0 0 28 28"><path d="M1.5 10 H26.5 M1.5 18.8 H26.5" fill="none" stroke="#0a8db0" stroke-width="2.5"/></svg>
<svg class="a" style="left:184.5px;top:288.5px" width="28" height="28" viewBox="0 0 28 28"><path d="M3.5 22 L14 11 L24.5 24" fill="none" stroke="#0a8db0" stroke-width="1.5"/><g fill="#fff" fill="none" stroke="#0a8db0" stroke-width="1.5"><rect x="1.5" y="19.5" width="4" height="4"/><rect x="12" y="7.5" width="4" height="4"/><rect x="22" y="21.5" width="4" height="4"/></g></svg>
<svg class="a" style="left:220.5px;top:288.5px" width="28" height="28" viewBox="0 0 28 28"><path d="M4.5 4.8 L20.5 20.8" fill="none" stroke="#0a8db0" stroke-width="2.3"/><path d="M9.5 21.5 H21.5 V9.5" fill="none" stroke="#0a8db0" stroke-width="2.3"/></svg>
<svg class="a" style="left:256.5px;top:288.5px" width="28" height="28" viewBox="0 0 28 28"><path d="M2.3 26 L11.3 3 H16.7 L25.7 26 H21 L18.8 20 H9.2 L7 26 Z M10.5 16.3 H17.5 L14 6.8 Z" fill="#0a8db0" fill-rule="evenodd"/></svg>
<svg class="a" style="left:76.5px;top:324.5px" width="28" height="28" viewBox="0 0 28 28"><circle cx="14" cy="14" r="9.5" fill="none" stroke="#d2eaf1" stroke-width="1"/><circle cx="14" cy="14" r="6.2" fill="#b9dde8"/><path d="M14 1.5 V27 M1.5 14 H27" stroke="#d6edf3" stroke-width="1"/><path d="M14 11.5 V16.5" stroke="#e8f6f9" stroke-width="1"/></svg>
<svg class="a" style="left:112.5px;top:324.5px" width="28" height="28" viewBox="0 0 28 28"><path d="M5.5 4.5 L21.5 22.5 M21.5 3.5 L13.5 12.5" fill="none" stroke="#0a8db0" stroke-width="1.4"/><g stroke="#0a8db0" stroke-width="1" fill="#fff"><path d="M5 2.2 L7.3 4.5 L5 6.8 L2.7 4.5 Z M21.5 1.2 L23.8 3.5 L21.5 5.8 L19.2 3.5 Z M22 20.5 L24.3 22.8 L22 25.1 L19.7 22.8 Z"/></g></svg>
<svg class="a" style="left:148.5px;top:324.5px" width="28" height="28" viewBox="0 0 28 28"><path d="M4 4.5 L24 9.5 M4 20.5 L24 15 M9.5 9 L16 16 M16 9 L9.5 16" fill="none" stroke="#0a8db0" stroke-width="1.3"/><g stroke="#0a8db0" stroke-width="1" fill="#fff"><rect x="1.8" y="2.5" width="3.4" height="3.4"/><rect x="1.8" y="19" width="3.4" height="3.4"/><rect x="22.8" y="8" width="3.4" height="3.4"/><rect x="22.8" y="13.5" width="3.4" height="3.4"/></g></svg>
<svg class="a" style="left:184.5px;top:324.5px" width="28" height="28" viewBox="0 0 28 28"><path d="M9 4.5 Q13 1.5 18 5 Q25 10 24.5 16 Q24 23 19 23.5 Q15 24 13 20 Q11.5 16.5 7 17 Q2.5 17.5 3.5 13 Q4.5 8 9 4.5 Z" fill="none" stroke="#0a8db0" stroke-width="1.4"/></svg>
<svg class="a" style="left:220.5px;top:324.5px" width="28" height="28" viewBox="0 0 28 28"><path d="M3 10 Q5.5 17 9 15.5 Q12 13.5 14 11.5 Q16 10 18.5 12.5 Q21.5 16.5 23.5 14 L25 10" fill="none" stroke="#0a8db0" stroke-width="1.5"/><path d="M3 17.8 H25" fill="none" stroke="#0a8db0" stroke-width="2"/></svg>
<svg class="a" style="left:76.5px;top:360.5px" width="28" height="28" viewBox="0 0 28 28"><path d="M21.5 24.2 C26 18 25 11 19.5 7.5 C14.5 4.5 9 6.5 5.5 11.5" fill="none" stroke="#0a8db0" stroke-width="2.6" stroke-linecap="round"/><path d="M4.2 5.3 V13.8 H12.4" fill="none" stroke="#0a8db0" stroke-width="2.6" stroke-linecap="round" stroke-linejoin="round"/></svg>
<svg class="a" style="left:112.5px;top:360.5px" width="28" height="28" viewBox="0 0 28 28"><g transform="translate(14.6 12.2) rotate(-45)"><rect x="-7.6" y="-5" width="15.2" height="10" rx="1.8" fill="none" stroke="#0a8db0" stroke-width="1.6"/><path d="M-1 -5.8 H5.6 Q8.4 -5.8 8.4 -3 V3 Q8.4 5.8 5.6 5.8 H-1 Z" fill="#0a8db0"/></g><path d="M4.1 25.4 H25.4" fill="none" stroke="#0a8db0" stroke-width="1.7"/></svg>
<svg class="a" style="left:148.5px;top:360.5px" width="28" height="28" viewBox="0 0 28 28"><g transform="translate(13.6 11) rotate(-45)"><rect x="-7.6" y="-5" width="15.2" height="10" rx="1.8" fill="none" stroke="#0a8db0" stroke-width="1.6"/><path d="M-1 -5.8 H5.6 Q8.4 -5.8 8.4 -3 V3 Q8.4 5.8 5.6 5.8 H-1 Z" fill="#0a8db0"/></g><path d="M3.6 23.4 H24.9 M3.6 26.5 H24.9" fill="none" stroke="#0a8db0" stroke-width="1.5"/></svg>
<svg class="a" style="left:184.5px;top:360.5px" width="28" height="28" viewBox="0 0 28 28"><path d="M14 19.3 H1.8 V4.1 H22.8 V10.5" fill="none" stroke="#0a8db0" stroke-width="1.6"/><path d="M5.1 8.7 H19.3 M5.1 14.3 H14" fill="none" stroke="#0a8db0" stroke-width="1.4"/><rect x="14.7" y="10.7" width="12.2" height="12.7" rx="2.2" fill="#0a8db0"/><rect x="16.4" y="12.3" width="8.8" height="9.4" fill="#fff"/><rect x="19.2" y="12.3" width="4.6" height="3.2" fill="#0a8db0"/><rect x="17.6" y="17.2" width="6.4" height="4.5" fill="#0a8db0"/></svg>
<svg class="a" style="left:76.5px;top:442.5px" width="28" height="28" viewBox="0 0 28 28"><circle cx="14" cy="14" r="6.2" fill="none" stroke="#0a8db0" stroke-width="1.8"/><path d="M14 7.8 A6.2 6.2 0 0 0 14 20.2 Z" fill="#0a8db0"/><path d="M14 3 V6 M14 22 V25 M3 14 H6 M22 14 H25 M6.2 6.2 L8.3 8.3 M19.7 19.7 L21.8 21.8 M6.2 21.8 L8.3 19.7 M19.7 8.3 L21.8 6.2" stroke="#0a8db0" stroke-width="1.5"/></svg>
<svg class="a" style="left:112.5px;top:442.5px" width="28" height="28" viewBox="0 0 28 28"><path d="M14 3 V25 M3 14 H25" fill="none" stroke="#0a8db0" stroke-width="2"/><path d="M9.5 7.5 L14 3 L18.5 7.5 M9.5 20.5 L14 25 L18.5 20.5 M7.5 9.5 L3 14 L7.5 18.5 M20.5 9.5 L25 14 L20.5 18.5" fill="none" stroke="#0a8db0" stroke-width="2"/></svg>
<svg class="a" style="left:148.5px;top:442.5px" width="28" height="28" viewBox="0 0 28 28"><circle cx="11" cy="11" r="8.3" fill="none" stroke="#0a8db0" stroke-width="1.5"/><path d="M17 17 L23.5 23.5" stroke="#0a8db0" stroke-width="3.3" stroke-linecap="round"/></svg>
<svg class="a" style="left:184.5px;top:442.5px" width="28" height="28" viewBox="0 0 28 28"><path d="M23.5 11 A10 10 0 0 0 5 9" fill="none" stroke="#0a8db0" stroke-width="1.4"/><path d="M4.5 17 A10 10 0 0 0 23 19" fill="none" stroke="#0a8db0" stroke-width="1.4"/><path d="M3 4.5 L5 9.5 L9.5 7.5 M25 23.5 L23 18.5 L18.5 20.5" fill="none" stroke="#0a8db0" stroke-width="1.3"/></svg>
<svg class="a" style="left:220.5px;top:442.5px" width="28" height="28" viewBox="0 0 28 28"><path d="M14 2.5 V25.5 M10 6.5 L14 2.5 L18 6.5 M10 21.5 L14 25.5 L18 21.5" fill="none" stroke="#0a8db0" stroke-width="1.6"/><rect x="11.5" y="10.5" width="5" height="6.5" fill="#0a8db0"/></svg>
<svg class="a" style="left:256.5px;top:442.5px" width="28" height="28" viewBox="0 0 28 28"><path d="M14 2 L22 10.5 H6 Z M14 26 L22 17.5 H6 Z" fill="#0a8db0"/><path d="M6 12.3 H22 M6 15.5 H22" stroke="#0a8db0" stroke-width="1.6"/></svg>
<svg class="a" style="left:76.5px;top:478.5px" width="28" height="28" viewBox="0 0 28 28"><circle cx="14" cy="14" r="11" fill="none" stroke="#0a8db0" stroke-width="2.4"/><path d="M14 2 V6.5 M14 21.5 V26 M2 14 H6.5 M21.5 14 H26" fill="none" stroke="#0a8db0" stroke-width="2.4"/></svg>
<svg class="a" style="left:76.5px;top:514.5px" width="28" height="28" viewBox="0 0 28 28"><path d="M2.5 2 V25.5 H27" fill="none" stroke="#b3dce8" stroke-width="2.2"/><circle cx="15" cy="13" r="5.5" fill="none" stroke="#b3dce8" stroke-width="1.3"/><path d="M15 7.5 A5.5 5.5 0 0 0 15 18.5 Z" fill="#b3dce8"/><g transform="translate(1 -1)"><path d="M14 3 V6 M14 22 V25 M3 14 H6 M22 14 H25 M6.2 6.2 L8.3 8.3 M19.7 19.7 L21.8 21.8 M6.2 21.8 L8.3 19.7 M19.7 8.3 L21.8 6.2" stroke="#b3dce8" stroke-width="1.2"/></g></svg>
<svg class="a" style="left:112.5px;top:514.5px" width="28" height="28" viewBox="0 0 28 28"><rect x="9.5" y="2" width="15.5" height="16" fill="none" stroke="#b3dce8" stroke-width="2.4"/><path d="M5.5 9 V25 H21 V21.5" fill="none" stroke="#b3dce8" stroke-width="2.4" stroke-dasharray="3 2.2"/></svg>
<svg class="a" style="left:148.5px;top:514.5px" width="28" height="28" viewBox="0 0 28 28"><path d="M6 22 L20 6" stroke="#b3dce8" stroke-width="2.2"/><circle cx="20" cy="4.5" r="2.2" fill="none" stroke="#b3dce8" stroke-width="1.2"/><circle cx="22" cy="7" r="2.2" fill="#b3dce8"/><circle cx="4.5" cy="21.5" r="2.2" fill="none" stroke="#b3dce8" stroke-width="1.2"/><circle cx="7" cy="24" r="2.2" fill="#b3dce8"/></svg>
<svg class="a" style="left:184.5px;top:514.5px" width="28" height="28" viewBox="0 0 28 28"><path d="M10 4 Q14 1.5 19 5 Q25 9.5 24 16 Q23 22.5 18 22 Q14 21.5 13 18 Q11.5 14.5 7 15.5 Q2.5 16 3.5 11.5 Q4.5 7 10 4 Z" fill="none" stroke="#b3dce8" stroke-width="1.2"/></svg>
<svg class="a" style="left:76.5px;top:550.5px" width="28" height="28" viewBox="0 0 28 28"><rect x="1.5" y="1.5" width="25.5" height="25.5" rx="2" fill="#0a8db0"/><circle cx="14.2" cy="14.2" r="9" fill="none" stroke="#fff" stroke-width="1.8"/><path d="M14.2 5.2 A9 9 0 0 0 14.2 23.2 Z" fill="#fff"/></svg>
<svg class="a" style="left:112.5px;top:550.5px" width="28" height="28" viewBox="0 0 28 28"><circle cx="11.5" cy="11" r="9" fill="none" stroke="#0a8db0" stroke-width="1.4"/><path d="M17.5 17.5 L23.5 23.5" stroke="#0a8db0" stroke-width="3.2" stroke-linecap="round"/><path d="M7 11 H16" fill="none" stroke="#0a8db0" stroke-width="1.5"/></svg>
<svg class="a" style="left:148.5px;top:550.5px" width="28" height="28" viewBox="0 0 28 28"><circle cx="11.5" cy="11" r="9" fill="none" stroke="#0a8db0" stroke-width="1.4"/><path d="M17.5 17.5 L23.5 23.5" stroke="#0a8db0" stroke-width="3.2" stroke-linecap="round"/><path d="M7 11 H16 M11.5 6.5 V15.5" fill="none" stroke="#0a8db0" stroke-width="1.5"/></svg>
<svg class="a" style="left:184.5px;top:550.5px" width="28" height="28" viewBox="0 0 28 28"><rect x="2.5" y="8.5" width="22.5" height="11" fill="none" stroke="#b3dce8" stroke-width="1.2"/><rect x="10.5" y="1.5" width="8.5" height="24.5" fill="#0a8db0"/><rect x="2.5" y="8.5" width="8" height="11" fill="none" stroke="#0a8db0" stroke-width="1"/><path d="M19 2 Q23.5 2.5 24 6.5 M9.5 25.8 Q5 25.5 4 21" fill="none" stroke="#0a8db0" stroke-width="1"/><path d="M22 5.5 L24 7.5 L25.5 5 M2.5 22.5 L4 20.5 L6 22" fill="none" stroke="#0a8db0" stroke-width="1"/></svg>
<svg class="a" style="left:220.5px;top:550.5px" width="28" height="28" viewBox="0 0 28 28"><path d="M2 7 V22 L12 14.5 Z" fill="#0a8db0"/><path d="M26 7 V22 L16 14.5 Z" fill="none" stroke="#0a8db0" stroke-width="1.3"/><path d="M14 4 V26" fill="none" stroke="#0a8db0" stroke-width="1.3"/><path d="M7.5 7 Q14 -1 21 6" fill="none" stroke="#0a8db0" stroke-width="1.2"/><path d="M18.5 4.5 L21.5 6.5 L20.5 3" fill="none" stroke="#0a8db0" stroke-width="1"/></svg>
<svg class="a" style="left:256.5px;top:550.5px" width="28" height="28" viewBox="0 0 28 28"><path d="M6.5 2.5 H21.5 L14 12.5 Z" fill="#0a8db0"/><path d="M6.5 26 H21.5 L14 16 Z" fill="none" stroke="#0a8db0" stroke-width="1.3"/><path d="M3 14.3 H25" fill="none" stroke="#0a8db0" stroke-width="1.3"/><path d="M21 8 Q27 11 23.5 20" fill="none" stroke="#0a8db0" stroke-width="1.2"/><path d="M21 20 L23.5 20.5 L24.8 18" fill="none" stroke="#0a8db0" stroke-width="1"/></svg>
<svg class="a" style="left:76.5px;top:586.5px" width="28" height="28" viewBox="0 0 28 28"><path d="M11 4.5 A10 10 0 1 0 18 4.5" fill="none" stroke="#0a8db0" stroke-width="2.3"/><path d="M18.5 0.5 L13.5 4.5 L18.5 8.5 Z" fill="#0a8db0"/><circle cx="14" cy="14.2" r="3.24" fill="none" stroke="#0a8db0" stroke-width="1.6"/><rect x="13.10" y="8.50" width="1.8" height="2.2" fill="#0a8db0" transform="rotate(0 14 14.2)"/><rect x="13.10" y="8.50" width="1.8" height="2.2" fill="#0a8db0" transform="rotate(45 14 14.2)"/><rect x="13.10" y="8.50" width="1.8" height="2.2" fill="#0a8db0" transform="rotate(90 14 14.2)"/><rect x="13.10" y="8.50" width="1.8" height="2.2" fill="#0a8db0" transform="rotate(135 14 14.2)"/><rect x="13.10" y="8.50" width="1.8" height="2.2" fill="#0a8db0" transform="rotate(180 14 14.2)"/><rect x="13.10" y="8.50" width="1.8" height="2.2" fill="#0a8db0" transform="rotate(225 14 14.2)"/><rect x="13.10" y="8.50" width="1.8" height="2.2" fill="#0a8db0" transform="rotate(270 14 14.2)"/><rect x="13.10" y="8.50" width="1.8" height="2.2" fill="#0a8db0" transform="rotate(315 14 14.2)"/></svg>
<svg class="a" style="left:112.5px;top:586.5px" width="28" height="28" viewBox="0 0 28 28"><path d="M15.5 4.2 A8.3 8.3 0 1 0 20.5 3.5" fill="none" stroke="#0a8db0" stroke-width="2"/><path d="M20.8 0.5 L16.5 3.8 L20.8 7.2 Z" fill="#0a8db0"/><circle cx="17.5" cy="11.5" r="2.52" fill="none" stroke="#0a8db0" stroke-width="1.6"/><rect x="16.60" y="6.80" width="1.8" height="2.2" fill="#0a8db0" transform="rotate(0 17.5 11.5)"/><rect x="16.60" y="6.80" width="1.8" height="2.2" fill="#0a8db0" transform="rotate(45 17.5 11.5)"/><rect x="16.60" y="6.80" width="1.8" height="2.2" fill="#0a8db0" transform="rotate(90 17.5 11.5)"/><rect x="16.60" y="6.80" width="1.8" height="2.2" fill="#0a8db0" transform="rotate(135 17.5 11.5)"/><rect x="16.60" y="6.80" width="1.8" height="2.2" fill="#0a8db0" transform="rotate(180 17.5 11.5)"/><rect x="16.60" y="6.80" width="1.8" height="2.2" fill="#0a8db0" transform="rotate(225 17.5 11.5)"/><rect x="16.60" y="6.80" width="1.8" height="2.2" fill="#0a8db0" transform="rotate(270 17.5 11.5)"/><rect x="16.60" y="6.80" width="1.8" height="2.2" fill="#0a8db0" transform="rotate(315 17.5 11.5)"/><path d="M8 12.5 A5 5 0 1 0 13 20.5 A3.7 3.7 0 0 1 8 12.5 Z" fill="#0a8db0"/><path d="M3 17.5 H5 M5 22.5 L6.3 21.2 M8 26 V24.2 M11.8 24.6 L12.8 25.6 M4.8 12.5 L6 13.7" stroke="#0a8db0" stroke-width="1.1"/></svg>
<svg class="a" style="left:148.5px;top:586.5px" width="28" height="28" viewBox="0 0 28 28"><path d="M14 2.5 V26 M10 6.5 L14 2.5 L18 6.5 M10 22 L14 26 L18 22" fill="none" stroke="#0a8db0" stroke-width="1.5"/><path d="M6 14.3 H22" fill="none" stroke="#0a8db0" stroke-width="2.3"/></svg>
<svg class="a" style="left:184.5px;top:586.5px" width="28" height="28" viewBox="0 0 28 28"><path d="M14 2 V11.5 M10 7.5 L14 11.5 L18 7.5 M14 26 V17 M10 21 L14 17 L18 21" fill="none" stroke="#0a8db0" stroke-width="1.5"/><path d="M5 14.3 H23" fill="none" stroke="#0a8db0" stroke-width="1.3"/></svg>
<svg class="a" style="left:220.5px;top:586.5px" width="28" height="28" viewBox="0 0 28 28"><circle cx="14" cy="4.8" r="2.8" fill="#0a8db0"/><path d="M9.5 9.5 H18.5 V19.5 H17 V26 H11 V19.5 H9.5 Z" fill="#0a8db0"/><path d="M6 12.5 H22" stroke="#fff" stroke-width="1.1"/><path d="M6 12.5 H9 M19 12.5 H22" stroke="#0a8db0" stroke-width="1"/></svg>
<svg class="a" style="left:256.5px;top:586.5px" width="28" height="28" viewBox="0 0 28 28"><path d="M8 25 V6 M3 11 L8 5.5 L13 11 M20 3.5 V23 M15 17.5 L20 23 L25 17.5" fill="none" stroke="#0a8db0" stroke-width="3" stroke-linecap="round" stroke-linejoin="round"/></svg>
<svg class="a" style="left:76.5px;top:622.5px" width="28" height="28" viewBox="0 0 28 28"><path d="M25.5 2.5 V10 L10 25.5 L2.5 18 L18 2.5 Z" fill="none" stroke="#0a8db0" stroke-width="1.6" stroke-linejoin="round"/><circle cx="20.5" cy="7.5" r="1.8" fill="none" stroke="#0a8db0" stroke-width="1.2"/><path d="M8.5 17 L11.5 20 M10 15.5 L13 18.5 M11.5 14 L14.5 17" fill="none" stroke="#0a8db0" stroke-width="1"/></svg>
<svg class="a" style="left:112.5px;top:622.5px" width="28" height="28" viewBox="0 0 28 28"><rect x="1" y="1" width="26" height="25" fill="#0a8db0"/><text x="14" y="19.6" text-anchor="middle" font-family="Liberation Sans" font-weight="bold" font-size="14" fill="#fff" letter-spacing="-.5">DT</text></svg>
<svg class="a" style="left:148.5px;top:622.5px" width="28" height="28" viewBox="0 0 28 28"><text x="14.5" y="22.5" text-anchor="middle" font-family="Liberation Sans" font-weight="bold" font-size="20" fill="#0a3a48" letter-spacing="-1.5" transform="scale(.92 1)">3D</text><path d="M15 6 V22" stroke="#0a8db0" stroke-width="1.5"/></svg>
<svg class="a" style="left:184.5px;top:622.5px" width="28" height="28" viewBox="0 0 28 28"><rect x="3.5" y="4.5" width="21" height="19.5" fill="none" stroke="#b3dce8" stroke-width="1.2"/><g fill="#b3dce8"><rect x="12" y="3" width="3.5" height="3"/><rect x="12" y="22.5" width="3.5" height="3"/><rect x="2" y="12.5" width="3" height="3.5"/><rect x="23" y="12.5" width="3" height="3.5"/><rect x="12.2" y="12.5" width="3" height="3"/></g></svg>
<svg class="a" style="left:220.5px;top:622.5px" width="28" height="28" viewBox="0 0 28 28"><rect x="3.5" y="5" width="21" height="19" fill="none" stroke="#b3dce8" stroke-width="1.2"/><path d="M2 26 L26 2" stroke="#b3dce8" stroke-width="1.2"/><g fill="#b3dce8"><rect x="12.3" y="3.5" width="3.5" height="3"/><rect x="12.3" y="22.5" width="3.5" height="3"/><rect x="2" y="12.5" width="3" height="3.5"/><rect x="23" y="12.5" width="3" height="3.5"/></g></svg>
<svg class="a" style="left:256.5px;top:622.5px" width="28" height="28" viewBox="0 0 28 28"><path d="M7 24 L21 5" stroke="#cde8ef" stroke-width="2.2"/><circle cx="21.5" cy="3.5" r="2" fill="#cde8ef"/><circle cx="23" cy="6" r="2" fill="#cde8ef"/><circle cx="5" cy="23.5" r="2" fill="#cde8ef"/><circle cx="7.5" cy="25" r="2" fill="#cde8ef"/><path d="M21 11 Q20 7 13.5 9.5" fill="none" stroke="#b9b9b9" stroke-width="1.5"/><path d="M14.5 6.5 L10.5 10 L15 12" fill="none" stroke="#b9b9b9" stroke-width="1.3"/><path d="M21 11 Q22 15 19 18" fill="none" stroke="#b9b9b9" stroke-width="1.5"/></svg>
<svg class="a" style="left:76.5px;top:658.5px" width="28" height="28" viewBox="0 0 28 28"><path d="M9 3.5 Q14 1.5 18.5 4.5 Q25 9 24.5 16.5 Q24 23.5 18 23.5 Q14.5 23.5 12.5 21 Q10.5 18.5 6.5 19 Q2 19 2.5 14.5 Q3 8 9 3.5 Z" fill="none" stroke="#d2eaf1" stroke-width="1.1"/><path d="M10 10.5 Q16 8 18 12.5 Q19.5 16.5 17 19" fill="none" stroke="#c4c4c4" stroke-width="1.4"/><path d="M9 7.5 L8.5 12 L12.5 12.5" fill="none" stroke="#c4c4c4" stroke-width="1.3"/></svg>
<svg class="a" style="left:112.5px;top:658.5px" width="28" height="28" viewBox="0 0 28 28"><rect x="3" y="3" width="19" height="17.5" rx="2" fill="none" stroke="#0a8db0" stroke-width="1.4"/><path d="M3.5 17.5 L9.5 11.5 L13.5 15 L16.5 12.5 L21.5 17" fill="none" stroke="#0a8db0" stroke-width="1.3"/><circle cx="14.5" cy="8" r="1.6" fill="#0a8db0"/><circle cx="21" cy="20.5" r="5" fill="#fff" stroke="#0a8db0" stroke-width="1.3"/><path d="M21 17.5 V22.5 M18.8 20.5 L21 22.8 L23.2 20.5" fill="none" stroke="#0a8db0" stroke-width="1.2"/></svg>
<svg class="a" style="left:148.5px;top:658.5px" width="28" height="28" viewBox="0 0 28 28"><rect x="2.5" y="2.5" width="21" height="21" rx="1.5" fill="#0a8db0"/><rect x="4.8" y="4.8" width="16.5" height="16.5" fill="#fff"/><path d="M4.8 21.3 V17 L10.5 11 L15 15.5 L18 13 L21.3 16 V21.3 Z" fill="#0a8db0"/><circle cx="16" cy="8.5" r="1.8" fill="#0a8db0"/><circle cx="20.5" cy="21" r="5.5" fill="#0a8db0" stroke="#fff" stroke-width="1"/><rect x="17.5" y="19" width="6" height="4.5" fill="#fff"/><rect x="18.5" y="19.8" width="4" height="2.5" fill="#0a8db0"/></svg>
<svg class="a" style="left:184.5px;top:658.5px" width="28" height="28" viewBox="0 0 28 28"><circle cx="11.5" cy="9.3" r="5.3" fill="#0a8db0"/><path d="M2 26.5 Q2.5 17 11.5 16.5 Q20.5 17 21 26.5 Z" fill="#0a8db0"/><text x="17.5" y="11" font-family="Liberation Sans" font-weight="bold" font-size="13" fill="#0a8db0">?</text></svg>
<svg class="a" style="left:76.5px;top:741.0px" width="28" height="28" viewBox="0 0 28 28"><rect x="1.5" y="1.5" width="26" height="26" fill="#0a8db0"/></svg>
<svg class="a" style="left:112.5px;top:741.0px" width="28" height="28" viewBox="0 0 28 28"><rect x="1.5" y="1.5" width="11" height="26" fill="#0a8db0"/><rect x="16.2" y="1.5" width="11" height="26" fill="#0a8db0"/></svg>
<svg class="a" style="left:148.5px;top:741.0px" width="28" height="28" viewBox="0 0 28 28"><rect x="1.5" y="1.5" width="7.2" height="26" fill="#0a8db0"/><rect x="11" y="1.5" width="7" height="26" fill="#0a8db0"/><rect x="20.2" y="1.5" width="7" height="26" fill="#0a8db0"/></svg>
<svg class="a" style="left:184.5px;top:741.0px" width="28" height="28" viewBox="0 0 28 28"><rect x="1.5" y="1.5" width="26" height="11.5" fill="#0a8db0"/><rect x="1.5" y="16" width="26" height="11.5" fill="#0a8db0"/></svg>
<svg class="a" style="left:220.5px;top:741.0px" width="28" height="28" viewBox="0 0 28 28"><rect x="1.5" y="1.5" width="11" height="11.5" fill="#0a8db0"/><rect x="16.2" y="1.5" width="11" height="11.5" fill="#0a8db0"/><rect x="1.5" y="16" width="11" height="11.5" fill="#0a8db0"/><rect x="16.2" y="16" width="11" height="11.5" fill="#0a8db0"/></svg>
<svg class="a" style="left:256.5px;top:741.0px" width="28" height="28" viewBox="0 0 28 28"><rect x="1.5" y="1.5" width="7" height="7" fill="#0a8db0"/><rect x="1.5" y="10.7" width="7" height="7" fill="#0a8db0"/><rect x="1.5" y="19.9" width="7" height="7" fill="#0a8db0"/><rect x="10.7" y="1.5" width="7" height="7" fill="#0a8db0"/><rect x="10.7" y="10.7" width="7" height="7" fill="#0a8db0"/><rect x="10.7" y="19.9" width="7" height="7" fill="#0a8db0"/><rect x="19.9" y="1.5" width="7" height="7" fill="#0a8db0"/><rect x="19.9" y="10.7" width="7" height="7" fill="#0a8db0"/><rect x="19.9" y="19.9" width="7" height="7" fill="#0a8db0"/></svg>
<svg class="a" style="left:76.5px;top:777.0px" width="28" height="28" viewBox="0 0 28 28"><rect x="1.5" y="1.5" width="26" height="11" fill="#0a8db0"/><rect x="1.5" y="16" width="11" height="11.5" fill="#0a8db0"/><rect x="16.2" y="16" width="11" height="11.5" fill="#0a8db0"/></svg>
<svg class="a" style="left:112.5px;top:777.0px" width="28" height="28" viewBox="0 0 28 28"><rect x="1.5" y="1.5" width="11" height="26" fill="#0a8db0"/><rect x="16.2" y="1.5" width="11" height="11" fill="#0a8db0"/><rect x="16.2" y="16" width="11" height="11.5" fill="#0a8db0"/></svg>
<div class="a" style="left:57px;top:859px;width:260px;height:20px;background:#a6f1fc"></div>
<!-- vertical toolbar -->
<div class="a" style="left:317px;top:128px;width:36px;height:751px;background:#000"></div>
<!-- viewer frame -->
<div class="a" style="left:353px;top:128px;width:1024px;height:751px;background:#000"></div>
<div class="a" style="left:353px;top:128px;width:1023px;height:710px;background:#0a0a0a"></div>
<div class="a" style="left:353px;top:128px;width:1023px;height:2px;background:#2a8a9a"></div>
<div class="a" style="left:353px;top:128px;width:2px;height:710px;background:#1f98b2"></div>
<div class="a" style="left:355px;top:130px;width:1020px;height:1px;background:#4a4040"></div>
<div class="a" style="left:355px;top:130px;width:1px;height:707px;background:#4a4040"></div>
<div class="a" style="left:1374px;top:130px;width:1px;height:707px;background:#2a8c9a"></div>
<div class="a" style="left:1375px;top:128px;width:1px;height:710px;background:#4a4040"></div>
<div class="a" style="left:356px;top:836px;width:1018px;height:1px;background:#2a8c9a"></div>
<div class="a" style="left:355px;top:837px;width:1020px;height:1px;background:#4a4040"></div>
<!-- player bar -->
<div class="a" style="left:353px;top:839px;width:1024px;height:40px;border:2px solid #505050;background:#000"></div>
<div class="a" style="left:353px;top:878px;width:1024px;height:1px;background:#1f5d70"></div>
<!-- overlay texts -->
<div class="a" style="left:363px;top:138px;font-size:11px;line-height:11.85px;font-weight:bold;color:#ececec;white-space:pre">PATIENT III
02456789
01.01.1853 - F
dzne_MPRAGE_1iso
01.01.1921</div>
<div class="a" style="left:873px;top:137px;font-size:11.5px;font-weight:bold;color:#ececec">H</div>
<div class="a" style="left:363px;top:490px;font-size:11.5px;font-weight:bold;color:#ececec">A</div>
<div class="a" style="left:363px;top:806px;font-size:11px;line-height:11.6px;font-weight:bold;color:#ececec;white-space:pre">Image: 91/173
W: 811 C: 381</div>
<!-- right slider -->
<div class="a" style="left:1362px;top:159px;width:2px;height:650px;background:#0088b0"></div>
<svg class="a" style="left:1355px;top:484px" width="16" height="30" viewBox="0 0 16 30">
<rect x="0" y="0" width="16" height="30" rx="7.5" fill="#0b87ae"/>
<path d="M4.5 10 L8 6.8 L11.5 10 M4.5 20 L8 23.2 L11.5 20" fill="none" stroke="#fff" stroke-width="1.4"/>
<circle cx="8" cy="15" r="1.9" fill="none" stroke="#fff" stroke-width="1.2"/>
</svg>
<div class="a" style="left:360px;top:852px;font-size:12px;font-weight:bold;color:#fff;transform:scaleX(.97);transform-origin:0 0">Player</div>

<!-- MRI -->
<svg class="a" style="left:680px;top:300px" width="380" height="370" viewBox="680 300 380 370">
<defs><filter id="bl" x="-5%" y="-5%" width="110%" height="110%"><feGaussianBlur stdDeviation="0.8"/></filter><filter id="bl3" x="-5%" y="-5%" width="110%" height="110%"><feGaussianBlur stdDeviation="1.6"/></filter><filter id="mot" x="691" y="307" width="351" height="350" filterUnits="userSpaceOnUse"><feTurbulence type="fractalNoise" baseFrequency="0.18" numOctaves="3" seed="4" result="n"/><feColorMatrix in="n" type="matrix" values="0.33 0.33 0.33 0 0 0.33 0.33 0.33 0 0 0.33 0.33 0.33 0 0 0 0 0 0 1" result="g"/><feComposite in="SourceGraphic" in2="g" operator="arithmetic" k1="3.0" k2="-0.5" k3="0" k4="0" result="c"/><feComposite in="c" in2="SourceGraphic" operator="in"/></filter><filter id="grain" x="691" y="307" width="351" height="350" filterUnits="userSpaceOnUse"><feTurbulence type="fractalNoise" baseFrequency="0.7" numOctaves="1" seed="9" result="n"/><feColorMatrix in="n" type="matrix" values="0.33 0.33 0.33 0 0 0.33 0.33 0.33 0 0 0.33 0.33 0.33 0 0 0 0 0 0 1" result="g"/><feComposite in="SourceGraphic" in2="g" operator="arithmetic" k1="0.9" k2="0.55" k3="0" k4="0" result="c"/><feComposite in="c" in2="SourceGraphic" operator="in"/></filter><clipPath id="imgclip"><rect x="690" y="307" width="352" height="350"/></clipPath></defs>
<rect x="690" y="307" width="352" height="350" fill="#0c0c0c"/>
<g clip-path="url(#imgclip)"><g filter="url(#bl)">
<g filter="url(#mot)">
<clipPath id="fclip"><path d="M746.0 440.0 L757.0 465.0 L740.0 482.0 L720.0 498.0 L735.0 505.0 L727.0 522.0 L724.0 550.0 L727.0 570.0 L723.0 590.0 L732.0 611.0 L775.0 613.0 L805.0 616.0 L815.0 630.0 L824.0 660.0 L1000.0 660.0 L990.0 610.0 L982.0 560.0 L972.0 546.0 L955.0 540.0 L925.0 540.0 L880.0 525.0 L860.0 480.0 L840.0 462.0 L800.0 462.0 L770.0 458.0 Z"/></clipPath>
<path d="M746.0 440.0 L757.0 465.0 L740.0 482.0 L720.0 498.0 L735.0 505.0 L727.0 522.0 L724.0 550.0 L727.0 570.0 L723.0 590.0 L732.0 611.0 L775.0 613.0 L805.0 616.0 L815.0 630.0 L824.0 660.0 L1000.0 660.0 L990.0 610.0 L982.0 560.0 L972.0 546.0 L955.0 540.0 L925.0 540.0 L880.0 525.0 L860.0 480.0 L840.0 462.0 L800.0 462.0 L770.0 458.0 Z" fill="#1f1f1f"/>
<path d="M748.0 446.0 L748.6 448.0 L749.6 450.7 L750.8 454.0 L751.7 457.5 L752.2 460.9 L752.0 464.0 L751.0 466.8 L749.4 469.4 L747.4 472.1 L745.0 474.7 L742.5 477.3 L740.0 480.0 L737.0 482.9 L733.3 486.0 L729.5 489.1 L726.0 492.0 L723.3 494.7 L722.0 497.0 L722.5 498.6 L724.4 499.7 L727.2 500.4 L730.1 501.2 L732.6 502.3 L734.0 504.0 L734.1 506.2 L733.5 508.8 L732.4 511.7 L731.1 514.9 L729.9 518.3 L729.0 522.0 L728.3 526.2 L727.6 530.9 L727.0 535.9 L726.5 540.9 L726.1 545.7 L726.0 550.0 L726.2 553.8 L726.8 557.3 L727.5 560.5 L728.2 563.6 L728.8 566.8 L729.0 570.0 L728.7 573.4 L728.0 576.7 L727.2 580.1 L726.4 583.5 L725.9 586.8 L726.0 590.0 L726.3 593.3 L726.6 596.7 L727.2 600.1 L728.5 603.2 L730.6 605.9 L734.0 608.0 L739.0 609.4 L745.6 610.1 L753.1 610.5 L760.9 610.6 L768.4 610.7 L775.0 611.0 L781.0 611.2 L786.9 611.2 L792.4 611.1 L797.6 611.3 L802.2 611.8 L806.0 613.0 L808.9 614.8 L810.9 617.1 L812.3 619.8 L813.4 622.8 L814.6 626.2 L816.0 630.0 L817.8 634.6 L819.7 640.1 L821.6 646.1 L823.4 651.7 L824.9 656.6 L826.0 660.0" fill="none" stroke="#6c6c6c" stroke-width="4"/>
<path d="M756.6 443.3 L757.1 445.1 L758.1 447.7 L759.4 451.4 L760.5 455.6 L761.2 460.5 L760.8 465.8 L759.1 470.6 L756.8 474.5 L754.3 477.8 L751.6 480.8 L749.1 483.5 L746.4 486.3 L743.0 489.6 L739.1 492.9 L735.2 496.0 L732.1 498.7 L730.3 500.4 L730.8 499.0 L729.1 492.6 L727.6 491.3 L729.5 491.8 L733.1 492.7 L737.9 495.0 L742.4 500.8 L743.1 507.1 L742.1 511.5 L740.8 515.0 L739.6 518.1 L738.5 520.9 L737.8 523.8 L737.2 527.6 L736.5 532.1 L735.9 536.9 L735.4 541.7 L735.1 546.2 L735.0 549.9 L735.2 552.8 L735.6 555.6 L736.3 558.5 L737.0 561.8 L737.7 565.7 L738.0 570.1 L737.6 574.6 L736.8 578.7 L735.9 582.2 L735.3 585.1 L734.9 587.3 L735.0 589.5 L735.3 592.4 L735.5 595.5 L735.9 597.6 L736.3 598.7 L736.5 599.1 L737.4 599.7 L740.7 600.5 L746.3 601.2 L753.3 601.5 L761.0 601.6 L768.6 601.7 L775.3 602.0 L781.1 602.2 L786.8 602.2 L792.5 602.1 L798.2 602.3 L804.0 603.0 L809.7 604.8 L814.6 607.9 L818.3 611.9 L820.5 616.1 L821.9 619.9 L823.1 623.2 L824.4 626.8 L826.2 631.5 L828.2 637.3 L830.2 643.3 L832.0 649.1 L833.5 653.9 L834.6 657.3" fill="none" stroke="#333333" stroke-width="12"/>
<path d="M751.3 445.0 L751.9 446.8 L752.9 449.6 L754.1 453.0 L755.1 456.8 L755.7 460.7 L755.4 464.7 L754.2 468.3 L752.3 471.4 L750.1 474.3 L747.6 477.0 L745.1 479.7 L742.5 482.5 L739.3 485.5 L735.6 488.7 L731.7 491.8 L728.4 494.6 L726.1 496.9 L725.4 497.8 L725.1 496.3 L725.7 496.4 L728.1 497.1 L731.3 497.9 L734.7 499.5 L737.3 502.8 L737.6 506.6 L736.9 509.9 L735.7 513.0 L734.4 516.1 L733.3 519.3 L732.4 522.7 L731.8 526.7 L731.1 531.4 L730.5 536.3 L730.0 541.2 L729.6 545.9 L729.5 550.0 L729.7 553.4 L730.2 556.6 L730.9 559.7 L731.7 562.9 L732.3 566.3 L732.5 570.0 L732.2 573.9 L731.5 577.5 L730.6 580.9 L729.8 584.1 L729.4 587.0 L729.5 589.8 L729.8 593.0 L730.1 596.2 L730.6 599.1 L731.5 601.4 L732.9 603.3 L735.3 604.8 L739.7 605.9 L745.9 606.7 L753.2 607.0 L760.9 607.1 L768.5 607.2 L775.1 607.5 L781.0 607.7 L786.8 607.7 L792.5 607.6 L797.8 607.8 L802.9 608.4 L807.4 609.8 L811.1 612.1 L813.8 615.1 L815.5 618.3 L816.7 621.7 L817.9 625.1 L819.3 628.7 L821.1 633.4 L823.0 639.0 L825.0 645.0 L826.7 650.7 L828.3 655.5 L829.3 658.9" fill="none" stroke="#2a2a2a" stroke-width="2.5"/>
<path d="M752 530 Q800 515 850 525 L852 545 Q800 535 752 548 Z" fill="#383838"/>
<path d="M762 478 Q790 466 842 470 Q856 490 848 520 Q815 530 790 522 Q765 512 762 478 Z" fill="#0b0b0b"/>
<path d="M748 548 Q770 532 812 534 Q845 540 850 572 Q852 600 830 608 Q790 612 755 602 Q742 578 748 548 Z" fill="#373737"/>
<path d="M750 548 Q780 534 830 540 Q848 548 850 565" fill="none" stroke="#6a6a6a" stroke-width="2.5"/>
<ellipse cx="758" cy="575" rx="9" ry="16" fill="#1a1a1a"/>
<path d="M805 612 L860 600 L870 660 L818 660 Z" fill="#2c2c2c"/>
<path d="M858 540 L915 545 L935 660 L868 660 Z" fill="#1c1c1c"/>
<path d="M930 536 Q972 528 980 560 L992 660 L940 660 L935 600 Z" fill="#2e2e2e"/>
<path d="M950 535 Q972 530 978 560 L975 615 Q958 612 953 590 Z" fill="#8a8a8a"/>
<path d="M1000 505 Q970 540 945 560 Q935 600 940 660" fill="none" stroke="#161616" stroke-width="3"/>
<path d="M852 525 Q860 520 866 524 L872 598 Q864 604 858 600 Z" fill="#474747"/>
<ellipse cx="872" cy="600" rx="3" ry="9" fill="#7a7a7a"/>
<ellipse cx="893" cy="615" rx="2.5" ry="7" fill="#6a6a6a"/>
<ellipse cx="918" cy="585" rx="6" ry="4" fill="#5a5a5a"/>
<ellipse cx="905" cy="560" rx="5" ry="3" fill="#606060"/>
<ellipse cx="832" cy="625" rx="3" ry="8" fill="#5c5c5c"/>
<ellipse cx="960" cy="640" rx="5" ry="9" fill="#4c4c4c"/>
<ellipse cx="890" cy="640" rx="4" ry="3" fill="#101010"/>
<ellipse cx="880" cy="575" rx="4" ry="4" fill="#0e0e0e"/>
<ellipse cx="905" cy="600" rx="3" ry="5" fill="#121212"/>
<ellipse cx="930" cy="620" rx="4" ry="6" fill="#151515"/>
<path d="M905 560 L935 556 L945 660 L915 660 Z" fill="#282828"/>
<g clip-path="url(#fclip)" filter="url(#bl3)">
<ellipse cx="810.4" cy="497.0" rx="1.1" ry="1.0" fill="#0c0c0c" opacity="0.45"/>
<ellipse cx="737.8" cy="565.4" rx="1.2" ry="0.9" fill="#0c0c0c" opacity="0.40"/>
<ellipse cx="876.4" cy="649.9" rx="2.2" ry="1.7" fill="#0c0c0c" opacity="0.69"/>
<ellipse cx="801.1" cy="495.7" rx="2.1" ry="1.9" fill="#121212" opacity="0.57"/>
<ellipse cx="750.1" cy="577.7" rx="1.7" ry="1.5" fill="#1e1e1e" opacity="0.33"/>
<ellipse cx="738.3" cy="507.5" rx="2.6" ry="2.1" fill="#505050" opacity="0.67"/>
<ellipse cx="820.7" cy="515.7" rx="2.4" ry="1.6" fill="#181818" opacity="0.53"/>
<ellipse cx="865.4" cy="636.0" rx="1.6" ry="1.9" fill="#5f5f5f" opacity="0.35"/>
<ellipse cx="836.1" cy="613.4" rx="2.9" ry="2.3" fill="#181818" opacity="0.68"/>
<ellipse cx="743.2" cy="575.2" rx="1.7" ry="1.3" fill="#464646" opacity="0.50"/>
<ellipse cx="747.6" cy="519.8" rx="1.1" ry="1.1" fill="#121212" opacity="0.56"/>
<ellipse cx="993.1" cy="625.8" rx="2.4" ry="2.7" fill="#3c3c3c" opacity="0.44"/>
<ellipse cx="978.8" cy="536.2" rx="2.0" ry="1.3" fill="#121212" opacity="0.41"/>
<ellipse cx="923.6" cy="544.4" rx="1.2" ry="0.9" fill="#5f5f5f" opacity="0.52"/>
<ellipse cx="963.2" cy="625.3" rx="2.4" ry="2.9" fill="#3c3c3c" opacity="0.57"/>
<ellipse cx="825.9" cy="512.3" rx="1.4" ry="0.9" fill="#121212" opacity="0.39"/>
<ellipse cx="854.4" cy="581.1" rx="1.6" ry="0.9" fill="#3c3c3c" opacity="0.51"/>
<ellipse cx="981.4" cy="593.8" rx="1.9" ry="2.1" fill="#0c0c0c" opacity="0.68"/>
<ellipse cx="907.8" cy="575.4" rx="1.8" ry="1.0" fill="#505050" opacity="0.55"/>
<ellipse cx="739.0" cy="480.9" rx="1.9" ry="1.1" fill="#1e1e1e" opacity="0.54"/>
<ellipse cx="749.9" cy="576.8" rx="2.9" ry="2.7" fill="#121212" opacity="0.33"/>
<ellipse cx="778.8" cy="540.2" rx="2.9" ry="2.7" fill="#3c3c3c" opacity="0.49"/>
<ellipse cx="753.5" cy="561.7" rx="2.0" ry="1.4" fill="#5f5f5f" opacity="0.36"/>
<ellipse cx="926.7" cy="610.1" rx="2.7" ry="1.6" fill="#5f5f5f" opacity="0.31"/>
<ellipse cx="981.6" cy="569.4" rx="2.4" ry="2.7" fill="#181818" opacity="0.60"/>
<ellipse cx="803.4" cy="591.4" rx="2.4" ry="1.6" fill="#121212" opacity="0.45"/>
<ellipse cx="867.4" cy="617.6" rx="2.3" ry="2.1" fill="#464646" opacity="0.62"/>
<ellipse cx="787.4" cy="544.9" rx="1.4" ry="1.2" fill="#1e1e1e" opacity="0.59"/>
<ellipse cx="992.2" cy="619.7" rx="1.5" ry="1.5" fill="#5f5f5f" opacity="0.68"/>
<ellipse cx="844.1" cy="647.9" rx="2.9" ry="2.2" fill="#464646" opacity="0.39"/>
<ellipse cx="783.9" cy="505.8" rx="2.0" ry="2.3" fill="#1e1e1e" opacity="0.54"/>
<ellipse cx="815.9" cy="591.5" rx="2.8" ry="3.0" fill="#121212" opacity="0.60"/>
<ellipse cx="852.5" cy="502.3" rx="1.2" ry="1.4" fill="#464646" opacity="0.59"/>
<ellipse cx="848.4" cy="610.7" rx="2.4" ry="1.5" fill="#121212" opacity="0.35"/>
<ellipse cx="947.6" cy="656.2" rx="1.3" ry="1.2" fill="#464646" opacity="0.31"/>
<ellipse cx="940.2" cy="607.5" rx="2.1" ry="2.4" fill="#121212" opacity="0.47"/>
<ellipse cx="960.0" cy="626.6" rx="1.1" ry="0.7" fill="#1e1e1e" opacity="0.50"/>
<ellipse cx="930.5" cy="530.6" rx="2.7" ry="1.4" fill="#505050" opacity="0.60"/>
<ellipse cx="967.1" cy="595.2" rx="2.7" ry="3.0" fill="#505050" opacity="0.35"/>
<ellipse cx="763.5" cy="566.0" rx="2.6" ry="2.4" fill="#5f5f5f" opacity="0.61"/>
<ellipse cx="762.9" cy="495.2" rx="2.1" ry="1.5" fill="#121212" opacity="0.51"/>
<ellipse cx="873.6" cy="618.6" rx="2.8" ry="1.5" fill="#121212" opacity="0.38"/>
<ellipse cx="733.5" cy="486.8" rx="2.1" ry="2.2" fill="#5f5f5f" opacity="0.66"/>
<ellipse cx="843.0" cy="585.6" rx="2.4" ry="1.9" fill="#1e1e1e" opacity="0.51"/>
<ellipse cx="852.5" cy="648.8" rx="2.8" ry="3.2" fill="#3c3c3c" opacity="0.38"/>
<ellipse cx="844.2" cy="548.0" rx="1.9" ry="1.0" fill="#505050" opacity="0.40"/>
<ellipse cx="742.0" cy="596.5" rx="2.8" ry="1.7" fill="#121212" opacity="0.59"/>
<ellipse cx="963.0" cy="653.8" rx="2.5" ry="1.4" fill="#1e1e1e" opacity="0.65"/>
<ellipse cx="766.4" cy="596.2" rx="1.3" ry="1.1" fill="#1e1e1e" opacity="0.51"/>
<ellipse cx="814.6" cy="505.6" rx="1.2" ry="0.9" fill="#464646" opacity="0.44"/>
<ellipse cx="847.2" cy="603.0" rx="1.7" ry="1.6" fill="#505050" opacity="0.50"/>
<ellipse cx="937.2" cy="654.6" rx="1.2" ry="0.8" fill="#121212" opacity="0.66"/>
<ellipse cx="945.8" cy="631.1" rx="1.8" ry="1.6" fill="#3c3c3c" opacity="0.51"/>
<ellipse cx="857.0" cy="530.8" rx="1.1" ry="1.1" fill="#3c3c3c" opacity="0.47"/>
<ellipse cx="895.2" cy="621.9" rx="2.2" ry="1.5" fill="#121212" opacity="0.41"/>
<ellipse cx="755.2" cy="470.2" rx="2.9" ry="2.0" fill="#505050" opacity="0.35"/>
<ellipse cx="865.8" cy="513.8" rx="2.9" ry="2.0" fill="#121212" opacity="0.37"/>
<ellipse cx="976.5" cy="588.7" rx="1.6" ry="1.3" fill="#1e1e1e" opacity="0.37"/>
<ellipse cx="816.7" cy="471.5" rx="1.1" ry="0.6" fill="#3c3c3c" opacity="0.50"/>
<ellipse cx="989.0" cy="566.7" rx="2.9" ry="1.6" fill="#1e1e1e" opacity="0.63"/>
<ellipse cx="840.0" cy="563.0" rx="2.9" ry="2.1" fill="#505050" opacity="0.39"/>
<ellipse cx="784.7" cy="506.1" rx="1.8" ry="1.3" fill="#181818" opacity="0.32"/>
<ellipse cx="757.4" cy="481.6" rx="1.9" ry="1.0" fill="#3c3c3c" opacity="0.57"/>
<ellipse cx="826.0" cy="565.1" rx="2.2" ry="2.2" fill="#3c3c3c" opacity="0.32"/>
<ellipse cx="772.6" cy="519.7" rx="1.5" ry="1.8" fill="#0c0c0c" opacity="0.69"/>
<ellipse cx="819.3" cy="468.2" rx="1.2" ry="0.8" fill="#505050" opacity="0.56"/>
<ellipse cx="761.3" cy="580.7" rx="1.0" ry="0.7" fill="#505050" opacity="0.39"/>
<ellipse cx="881.9" cy="569.6" rx="2.3" ry="2.3" fill="#181818" opacity="0.65"/>
<ellipse cx="828.3" cy="530.6" rx="1.3" ry="1.3" fill="#5f5f5f" opacity="0.56"/>
<ellipse cx="965.5" cy="588.4" rx="2.8" ry="2.9" fill="#181818" opacity="0.53"/>
<ellipse cx="909.4" cy="621.2" rx="1.2" ry="0.6" fill="#1e1e1e" opacity="0.55"/>
<ellipse cx="983.9" cy="540.3" rx="2.1" ry="2.0" fill="#5f5f5f" opacity="0.55"/>
<ellipse cx="907.8" cy="561.9" rx="1.9" ry="1.1" fill="#0c0c0c" opacity="0.67"/>
<ellipse cx="865.6" cy="611.2" rx="1.5" ry="0.8" fill="#5f5f5f" opacity="0.41"/>
<ellipse cx="924.0" cy="655.3" rx="2.7" ry="1.5" fill="#5f5f5f" opacity="0.66"/>
<ellipse cx="800.4" cy="477.0" rx="1.2" ry="0.7" fill="#1e1e1e" opacity="0.40"/>
<ellipse cx="738.6" cy="519.6" rx="2.4" ry="2.3" fill="#121212" opacity="0.42"/>
<ellipse cx="863.0" cy="557.2" rx="2.5" ry="3.0" fill="#5f5f5f" opacity="0.52"/>
<ellipse cx="807.1" cy="484.5" rx="1.0" ry="0.9" fill="#5f5f5f" opacity="0.63"/>
<ellipse cx="986.3" cy="554.3" rx="1.8" ry="2.0" fill="#3c3c3c" opacity="0.67"/>
<ellipse cx="742.4" cy="485.3" rx="2.9" ry="1.7" fill="#3c3c3c" opacity="0.63"/>
<ellipse cx="860.9" cy="638.3" rx="1.5" ry="1.7" fill="#464646" opacity="0.49"/>
<ellipse cx="856.2" cy="554.5" rx="2.5" ry="1.9" fill="#3c3c3c" opacity="0.45"/>
<ellipse cx="755.0" cy="531.6" rx="2.5" ry="2.7" fill="#464646" opacity="0.35"/>
<ellipse cx="974.9" cy="604.9" rx="1.5" ry="0.8" fill="#3c3c3c" opacity="0.46"/>
<ellipse cx="974.6" cy="613.1" rx="1.6" ry="0.8" fill="#0c0c0c" opacity="0.56"/>
<ellipse cx="987.1" cy="551.8" rx="1.4" ry="1.1" fill="#464646" opacity="0.68"/>
<ellipse cx="963.4" cy="623.9" rx="2.8" ry="3.3" fill="#505050" opacity="0.52"/>
<ellipse cx="921.9" cy="554.6" rx="2.3" ry="1.6" fill="#181818" opacity="0.32"/>
<ellipse cx="850.9" cy="534.0" rx="1.5" ry="1.5" fill="#3c3c3c" opacity="0.56"/>
<ellipse cx="832.9" cy="513.8" rx="2.1" ry="1.6" fill="#5f5f5f" opacity="0.37"/>
<ellipse cx="766.1" cy="507.9" rx="2.1" ry="1.7" fill="#5f5f5f" opacity="0.43"/>
<ellipse cx="929.3" cy="550.1" rx="1.5" ry="0.9" fill="#1e1e1e" opacity="0.52"/>
<ellipse cx="809.2" cy="538.7" rx="2.8" ry="2.8" fill="#1e1e1e" opacity="0.47"/>
<ellipse cx="835.0" cy="568.6" rx="1.5" ry="1.6" fill="#505050" opacity="0.50"/>
<ellipse cx="878.8" cy="537.1" rx="1.2" ry="1.3" fill="#1e1e1e" opacity="0.45"/>
<ellipse cx="898.3" cy="550.9" rx="2.7" ry="3.0" fill="#3c3c3c" opacity="0.31"/>
<ellipse cx="730.8" cy="604.2" rx="2.9" ry="2.5" fill="#5f5f5f" opacity="0.33"/>
<ellipse cx="976.0" cy="646.2" rx="2.9" ry="2.0" fill="#5f5f5f" opacity="0.34"/>
<ellipse cx="764.1" cy="568.3" rx="2.9" ry="2.9" fill="#121212" opacity="0.56"/>
<ellipse cx="930.8" cy="555.8" rx="1.0" ry="0.6" fill="#0c0c0c" opacity="0.53"/>
<ellipse cx="732.3" cy="605.3" rx="2.3" ry="2.0" fill="#181818" opacity="0.47"/>
<ellipse cx="774.3" cy="518.1" rx="1.0" ry="0.7" fill="#0c0c0c" opacity="0.48"/>
<ellipse cx="983.8" cy="591.8" rx="2.0" ry="1.3" fill="#1e1e1e" opacity="0.40"/>
<ellipse cx="984.2" cy="603.3" rx="1.1" ry="0.7" fill="#3c3c3c" opacity="0.65"/>
<ellipse cx="784.2" cy="549.5" rx="1.5" ry="0.8" fill="#464646" opacity="0.44"/>
<ellipse cx="836.8" cy="599.1" rx="1.0" ry="0.7" fill="#1e1e1e" opacity="0.64"/>
<ellipse cx="740.4" cy="563.2" rx="1.6" ry="1.7" fill="#1e1e1e" opacity="0.39"/>
<ellipse cx="857.3" cy="504.0" rx="2.0" ry="2.2" fill="#1e1e1e" opacity="0.32"/>
<ellipse cx="884.4" cy="645.0" rx="1.4" ry="1.7" fill="#0c0c0c" opacity="0.36"/>
<ellipse cx="829.4" cy="640.4" rx="2.5" ry="3.0" fill="#464646" opacity="0.67"/>
<ellipse cx="811.9" cy="503.6" rx="1.1" ry="1.0" fill="#5f5f5f" opacity="0.45"/>
<ellipse cx="824.1" cy="531.7" rx="1.2" ry="0.7" fill="#181818" opacity="0.33"/>
<ellipse cx="836.7" cy="638.0" rx="1.8" ry="1.8" fill="#1e1e1e" opacity="0.42"/>
<ellipse cx="869.8" cy="553.7" rx="1.7" ry="1.9" fill="#464646" opacity="0.31"/>
<ellipse cx="834.1" cy="623.9" rx="1.1" ry="0.6" fill="#505050" opacity="0.33"/>
<ellipse cx="926.0" cy="640.5" rx="1.7" ry="1.3" fill="#464646" opacity="0.68"/>
<ellipse cx="733.9" cy="611.3" rx="2.8" ry="2.0" fill="#464646" opacity="0.59"/>
<ellipse cx="884.6" cy="622.7" rx="1.0" ry="0.7" fill="#121212" opacity="0.49"/>
<ellipse cx="983.2" cy="651.2" rx="2.6" ry="2.9" fill="#505050" opacity="0.63"/>
<ellipse cx="758.2" cy="563.3" rx="2.6" ry="2.6" fill="#0c0c0c" opacity="0.63"/>
<ellipse cx="933.0" cy="584.6" rx="2.7" ry="2.2" fill="#464646" opacity="0.61"/>
<ellipse cx="884.6" cy="566.3" rx="2.5" ry="1.7" fill="#505050" opacity="0.33"/>
<ellipse cx="731.2" cy="574.1" rx="1.3" ry="1.1" fill="#464646" opacity="0.34"/>
<ellipse cx="741.7" cy="587.9" rx="1.2" ry="1.0" fill="#1e1e1e" opacity="0.58"/>
<ellipse cx="844.0" cy="513.0" rx="1.9" ry="2.2" fill="#505050" opacity="0.39"/>
<ellipse cx="869.0" cy="616.6" rx="2.6" ry="1.8" fill="#121212" opacity="0.41"/>
<ellipse cx="795.1" cy="516.8" rx="1.4" ry="0.9" fill="#3c3c3c" opacity="0.40"/>
<ellipse cx="879.9" cy="530.7" rx="1.5" ry="1.0" fill="#505050" opacity="0.51"/>
<ellipse cx="848.6" cy="475.1" rx="1.9" ry="2.1" fill="#0c0c0c" opacity="0.64"/>
<ellipse cx="802.2" cy="490.9" rx="2.2" ry="2.4" fill="#1e1e1e" opacity="0.38"/>
<ellipse cx="742.5" cy="566.4" rx="1.9" ry="1.3" fill="#181818" opacity="0.61"/>
<ellipse cx="884.7" cy="587.0" rx="1.1" ry="0.8" fill="#1e1e1e" opacity="0.32"/>
<ellipse cx="921.9" cy="643.5" rx="2.6" ry="2.1" fill="#0c0c0c" opacity="0.45"/>
<ellipse cx="730.6" cy="563.2" rx="1.1" ry="0.6" fill="#5f5f5f" opacity="0.46"/>
<ellipse cx="872.2" cy="590.7" rx="2.3" ry="1.8" fill="#121212" opacity="0.41"/>
<ellipse cx="991.8" cy="596.2" rx="2.9" ry="2.1" fill="#505050" opacity="0.53"/>
<ellipse cx="819.5" cy="548.0" rx="2.3" ry="1.8" fill="#464646" opacity="0.46"/>
<ellipse cx="979.2" cy="551.4" rx="1.8" ry="2.0" fill="#181818" opacity="0.46"/>
<ellipse cx="963.0" cy="556.5" rx="1.3" ry="0.7" fill="#181818" opacity="0.36"/>
<ellipse cx="942.2" cy="544.2" rx="2.5" ry="1.5" fill="#464646" opacity="0.44"/>
<ellipse cx="766.2" cy="501.0" rx="1.2" ry="1.0" fill="#121212" opacity="0.62"/>
<ellipse cx="988.3" cy="560.7" rx="2.2" ry="2.1" fill="#0c0c0c" opacity="0.33"/>
<ellipse cx="916.5" cy="600.1" rx="2.3" ry="2.5" fill="#181818" opacity="0.55"/>
<ellipse cx="851.1" cy="576.6" rx="1.8" ry="1.6" fill="#0c0c0c" opacity="0.45"/>
<ellipse cx="755.6" cy="515.4" rx="1.1" ry="1.0" fill="#1e1e1e" opacity="0.60"/>
<ellipse cx="754.1" cy="583.1" rx="2.3" ry="1.6" fill="#3c3c3c" opacity="0.40"/>
<ellipse cx="828.3" cy="538.6" rx="1.4" ry="0.7" fill="#5f5f5f" opacity="0.69"/>
<ellipse cx="849.0" cy="553.8" rx="2.7" ry="2.9" fill="#5f5f5f" opacity="0.46"/>
<ellipse cx="740.3" cy="536.8" rx="1.2" ry="1.0" fill="#464646" opacity="0.50"/>
<ellipse cx="733.1" cy="590.2" rx="2.8" ry="2.0" fill="#121212" opacity="0.59"/>
<ellipse cx="966.3" cy="593.3" rx="1.1" ry="0.6" fill="#181818" opacity="0.55"/>
<ellipse cx="939.0" cy="599.7" rx="1.1" ry="0.8" fill="#1e1e1e" opacity="0.60"/>
<ellipse cx="761.2" cy="564.4" rx="1.4" ry="1.0" fill="#5f5f5f" opacity="0.50"/>
<ellipse cx="809.1" cy="475.1" rx="1.8" ry="1.7" fill="#181818" opacity="0.41"/>
<ellipse cx="811.5" cy="540.4" rx="1.2" ry="1.1" fill="#3c3c3c" opacity="0.55"/>
<ellipse cx="820.2" cy="635.6" rx="1.5" ry="1.3" fill="#121212" opacity="0.64"/>
<ellipse cx="923.5" cy="539.3" rx="3.0" ry="2.7" fill="#505050" opacity="0.44"/>
<ellipse cx="930.7" cy="552.9" rx="2.2" ry="2.6" fill="#181818" opacity="0.42"/>
<ellipse cx="862.9" cy="527.5" rx="2.5" ry="2.5" fill="#464646" opacity="0.39"/>
<ellipse cx="801.4" cy="588.1" rx="2.0" ry="2.3" fill="#505050" opacity="0.35"/>
<ellipse cx="784.0" cy="593.4" rx="1.1" ry="1.0" fill="#0c0c0c" opacity="0.42"/>
<ellipse cx="864.8" cy="570.5" rx="2.2" ry="2.0" fill="#505050" opacity="0.38"/>
<ellipse cx="892.3" cy="559.2" rx="1.0" ry="1.1" fill="#181818" opacity="0.58"/>
<ellipse cx="845.1" cy="480.2" rx="2.7" ry="2.9" fill="#181818" opacity="0.46"/>
<ellipse cx="794.1" cy="470.2" rx="2.2" ry="2.0" fill="#464646" opacity="0.54"/>
<ellipse cx="863.3" cy="562.6" rx="2.8" ry="1.5" fill="#181818" opacity="0.51"/>
<ellipse cx="832.8" cy="513.6" rx="2.8" ry="1.6" fill="#0c0c0c" opacity="0.55"/>
<ellipse cx="834.8" cy="567.5" rx="2.6" ry="1.6" fill="#505050" opacity="0.42"/>
<ellipse cx="804.0" cy="477.3" rx="2.4" ry="1.2" fill="#5f5f5f" opacity="0.64"/>
<ellipse cx="925.4" cy="557.3" rx="1.4" ry="1.6" fill="#5f5f5f" opacity="0.40"/>
<ellipse cx="965.3" cy="645.6" rx="2.4" ry="1.7" fill="#3c3c3c" opacity="0.52"/>
<ellipse cx="841.0" cy="619.4" rx="1.6" ry="1.8" fill="#3c3c3c" opacity="0.66"/>
<ellipse cx="745.3" cy="565.4" rx="1.5" ry="1.0" fill="#181818" opacity="0.60"/>
<ellipse cx="979.9" cy="611.3" rx="1.4" ry="1.1" fill="#464646" opacity="0.54"/>
<ellipse cx="825.6" cy="631.6" rx="1.9" ry="1.7" fill="#5f5f5f" opacity="0.30"/>
<ellipse cx="937.5" cy="543.2" rx="2.1" ry="1.3" fill="#121212" opacity="0.31"/>
<ellipse cx="752.5" cy="587.4" rx="1.7" ry="1.0" fill="#181818" opacity="0.31"/>
<ellipse cx="733.4" cy="601.0" rx="2.4" ry="2.4" fill="#0c0c0c" opacity="0.33"/>
<ellipse cx="883.2" cy="537.8" rx="2.8" ry="2.8" fill="#121212" opacity="0.58"/>
<ellipse cx="826.8" cy="515.3" rx="1.2" ry="0.6" fill="#1e1e1e" opacity="0.64"/>
<ellipse cx="943.7" cy="589.8" rx="2.0" ry="1.2" fill="#3c3c3c" opacity="0.62"/>
<ellipse cx="813.9" cy="518.1" rx="1.5" ry="1.1" fill="#464646" opacity="0.59"/>
<ellipse cx="822.5" cy="529.6" rx="2.7" ry="2.5" fill="#5f5f5f" opacity="0.31"/>
<ellipse cx="834.7" cy="551.8" rx="1.7" ry="1.7" fill="#121212" opacity="0.52"/>
<ellipse cx="768.5" cy="468.2" rx="1.6" ry="1.6" fill="#1e1e1e" opacity="0.32"/>
<ellipse cx="817.0" cy="486.4" rx="2.9" ry="2.7" fill="#181818" opacity="0.68"/>
<ellipse cx="862.6" cy="579.0" rx="1.6" ry="1.0" fill="#181818" opacity="0.58"/>
<ellipse cx="858.0" cy="489.1" rx="2.0" ry="2.4" fill="#121212" opacity="0.52"/>
<ellipse cx="750.5" cy="530.7" rx="1.8" ry="1.4" fill="#121212" opacity="0.66"/>
<ellipse cx="728.9" cy="507.6" rx="1.9" ry="1.6" fill="#3c3c3c" opacity="0.37"/>
<ellipse cx="990.2" cy="589.1" rx="1.3" ry="1.1" fill="#5f5f5f" opacity="0.58"/>
<ellipse cx="880.8" cy="568.2" rx="2.3" ry="2.4" fill="#5f5f5f" opacity="0.37"/>
<ellipse cx="841.8" cy="616.5" rx="1.3" ry="1.0" fill="#1e1e1e" opacity="0.65"/>
<ellipse cx="787.0" cy="504.8" rx="2.5" ry="2.7" fill="#3c3c3c" opacity="0.55"/>
<ellipse cx="919.5" cy="655.2" rx="2.2" ry="1.6" fill="#464646" opacity="0.39"/>
<ellipse cx="982.7" cy="659.0" rx="2.9" ry="1.7" fill="#181818" opacity="0.45"/>
<ellipse cx="990.6" cy="620.6" rx="1.9" ry="1.2" fill="#3c3c3c" opacity="0.56"/>
<ellipse cx="751.2" cy="507.6" rx="1.9" ry="1.0" fill="#505050" opacity="0.64"/>
<ellipse cx="841.2" cy="510.7" rx="1.9" ry="1.2" fill="#3c3c3c" opacity="0.54"/>
<ellipse cx="832.5" cy="610.3" rx="2.4" ry="2.2" fill="#505050" opacity="0.56"/>
<ellipse cx="953.0" cy="596.2" rx="2.4" ry="2.2" fill="#1e1e1e" opacity="0.48"/>
<ellipse cx="807.5" cy="588.6" rx="2.8" ry="1.9" fill="#121212" opacity="0.46"/>
<ellipse cx="953.9" cy="560.7" rx="2.2" ry="1.8" fill="#0c0c0c" opacity="0.57"/>
<ellipse cx="900.7" cy="617.4" rx="2.7" ry="3.0" fill="#505050" opacity="0.34"/>
<ellipse cx="790.6" cy="509.8" rx="2.0" ry="1.2" fill="#1e1e1e" opacity="0.53"/>
<ellipse cx="869.7" cy="605.7" rx="2.3" ry="2.5" fill="#0c0c0c" opacity="0.51"/>
<ellipse cx="834.0" cy="650.0" rx="3.0" ry="1.9" fill="#1e1e1e" opacity="0.51"/>
<ellipse cx="976.6" cy="608.0" rx="2.3" ry="1.5" fill="#464646" opacity="0.45"/>
<ellipse cx="738.8" cy="482.4" rx="2.3" ry="2.2" fill="#505050" opacity="0.53"/>
<ellipse cx="751.8" cy="526.3" rx="2.9" ry="2.5" fill="#505050" opacity="0.39"/>
<ellipse cx="940.8" cy="543.3" rx="1.3" ry="1.5" fill="#1e1e1e" opacity="0.33"/>
<ellipse cx="897.3" cy="606.4" rx="1.7" ry="1.6" fill="#181818" opacity="0.63"/>
<ellipse cx="944.8" cy="557.9" rx="2.5" ry="2.4" fill="#3c3c3c" opacity="0.61"/>
<ellipse cx="850.1" cy="618.4" rx="1.5" ry="1.2" fill="#1e1e1e" opacity="0.40"/>
<ellipse cx="838.3" cy="503.7" rx="2.6" ry="2.8" fill="#0c0c0c" opacity="0.44"/>
<ellipse cx="854.4" cy="587.7" rx="2.3" ry="1.7" fill="#121212" opacity="0.67"/>
<ellipse cx="948.0" cy="641.9" rx="2.1" ry="1.5" fill="#181818" opacity="0.53"/>
<ellipse cx="741.7" cy="524.3" rx="2.2" ry="2.4" fill="#121212" opacity="0.37"/>
<ellipse cx="845.4" cy="618.7" rx="2.8" ry="3.0" fill="#1e1e1e" opacity="0.37"/>
<ellipse cx="965.3" cy="584.8" rx="2.3" ry="2.6" fill="#121212" opacity="0.62"/>
<ellipse cx="911.1" cy="569.9" rx="2.3" ry="1.4" fill="#5f5f5f" opacity="0.35"/>
<ellipse cx="836.4" cy="626.8" rx="2.0" ry="1.1" fill="#5f5f5f" opacity="0.49"/>
<ellipse cx="761.4" cy="562.3" rx="1.3" ry="1.2" fill="#5f5f5f" opacity="0.59"/>
<ellipse cx="765.8" cy="529.6" rx="2.3" ry="2.5" fill="#5f5f5f" opacity="0.45"/>
<ellipse cx="836.3" cy="652.4" rx="1.4" ry="1.0" fill="#121212" opacity="0.56"/>
<ellipse cx="923.1" cy="659.8" rx="2.0" ry="1.7" fill="#121212" opacity="0.66"/>
<ellipse cx="731.3" cy="605.9" rx="1.7" ry="1.9" fill="#181818" opacity="0.45"/>
<ellipse cx="851.5" cy="568.9" rx="1.6" ry="1.2" fill="#1e1e1e" opacity="0.40"/>
<ellipse cx="736.4" cy="523.5" rx="2.7" ry="2.1" fill="#464646" opacity="0.50"/>
<ellipse cx="796.2" cy="565.2" rx="2.3" ry="2.4" fill="#1e1e1e" opacity="0.43"/>
<ellipse cx="808.6" cy="525.5" rx="2.6" ry="1.4" fill="#121212" opacity="0.59"/>
<ellipse cx="963.8" cy="572.7" rx="1.8" ry="1.0" fill="#0c0c0c" opacity="0.32"/>
<ellipse cx="946.4" cy="559.2" rx="2.6" ry="2.9" fill="#0c0c0c" opacity="0.54"/>
<ellipse cx="890.4" cy="588.3" rx="1.4" ry="1.4" fill="#121212" opacity="0.48"/>
<ellipse cx="771.5" cy="475.1" rx="2.8" ry="2.7" fill="#121212" opacity="0.45"/>
<ellipse cx="946.6" cy="619.0" rx="2.7" ry="1.7" fill="#3c3c3c" opacity="0.31"/>
<ellipse cx="879.9" cy="643.5" rx="2.1" ry="1.1" fill="#5f5f5f" opacity="0.35"/>
<ellipse cx="943.2" cy="578.5" rx="1.9" ry="1.0" fill="#505050" opacity="0.45"/>
<ellipse cx="883.6" cy="648.0" rx="2.0" ry="1.5" fill="#181818" opacity="0.34"/>
<ellipse cx="763.4" cy="471.0" rx="1.0" ry="1.0" fill="#0c0c0c" opacity="0.69"/>
<ellipse cx="755.1" cy="558.7" rx="2.4" ry="1.6" fill="#3c3c3c" opacity="0.59"/>
<ellipse cx="773.2" cy="477.6" rx="2.5" ry="1.4" fill="#181818" opacity="0.55"/>
<ellipse cx="915.6" cy="556.4" rx="2.8" ry="1.5" fill="#3c3c3c" opacity="0.31"/>
<ellipse cx="909.5" cy="586.7" rx="1.6" ry="1.6" fill="#505050" opacity="0.37"/>
<ellipse cx="957.0" cy="561.4" rx="1.6" ry="1.9" fill="#0c0c0c" opacity="0.59"/>
<ellipse cx="850.3" cy="500.0" rx="1.7" ry="1.6" fill="#121212" opacity="0.55"/>
<ellipse cx="836.1" cy="542.1" rx="2.9" ry="3.0" fill="#5f5f5f" opacity="0.53"/>
<ellipse cx="801.8" cy="479.6" rx="2.7" ry="2.8" fill="#464646" opacity="0.31"/>
<ellipse cx="881.6" cy="655.5" rx="1.8" ry="1.7" fill="#1e1e1e" opacity="0.54"/>
<ellipse cx="966.6" cy="623.0" rx="2.4" ry="1.7" fill="#3c3c3c" opacity="0.41"/>
<ellipse cx="930.4" cy="618.4" rx="2.7" ry="2.8" fill="#3c3c3c" opacity="0.65"/>
<ellipse cx="954.4" cy="623.0" rx="1.7" ry="0.9" fill="#5f5f5f" opacity="0.52"/>
<ellipse cx="926.8" cy="646.9" rx="1.6" ry="0.9" fill="#1e1e1e" opacity="0.46"/>
<ellipse cx="915.4" cy="645.8" rx="2.6" ry="2.1" fill="#0c0c0c" opacity="0.34"/>
<ellipse cx="942.2" cy="616.3" rx="1.8" ry="1.6" fill="#1e1e1e" opacity="0.40"/>
<ellipse cx="860.2" cy="506.8" rx="1.4" ry="0.9" fill="#1e1e1e" opacity="0.58"/>
<ellipse cx="821.1" cy="576.4" rx="2.6" ry="2.8" fill="#505050" opacity="0.40"/>
<ellipse cx="973.9" cy="562.7" rx="1.7" ry="1.4" fill="#121212" opacity="0.33"/>
<ellipse cx="808.2" cy="473.8" rx="2.0" ry="1.0" fill="#3c3c3c" opacity="0.31"/>
<ellipse cx="992.4" cy="634.3" rx="2.2" ry="1.4" fill="#5f5f5f" opacity="0.67"/>
<ellipse cx="798.4" cy="486.6" rx="2.5" ry="2.7" fill="#5f5f5f" opacity="0.69"/>
<ellipse cx="791.3" cy="475.3" rx="3.0" ry="2.3" fill="#1e1e1e" opacity="0.31"/>
<ellipse cx="731.5" cy="539.0" rx="2.0" ry="2.2" fill="#5f5f5f" opacity="0.66"/>
<ellipse cx="957.6" cy="590.8" rx="2.4" ry="1.4" fill="#121212" opacity="0.43"/>
<ellipse cx="785.7" cy="485.2" rx="1.4" ry="1.5" fill="#505050" opacity="0.45"/>
<ellipse cx="786.2" cy="606.4" rx="1.1" ry="0.7" fill="#181818" opacity="0.44"/>
<ellipse cx="968.5" cy="641.7" rx="1.5" ry="1.3" fill="#0c0c0c" opacity="0.60"/>
<ellipse cx="929.9" cy="560.8" rx="1.3" ry="1.3" fill="#121212" opacity="0.68"/>
<ellipse cx="883.5" cy="613.5" rx="1.9" ry="1.5" fill="#121212" opacity="0.46"/>
<ellipse cx="824.4" cy="540.9" rx="1.5" ry="0.9" fill="#5f5f5f" opacity="0.57"/>
<ellipse cx="775.3" cy="474.9" rx="1.2" ry="1.1" fill="#1e1e1e" opacity="0.45"/>
<ellipse cx="926.5" cy="617.4" rx="2.9" ry="2.2" fill="#121212" opacity="0.31"/>
<ellipse cx="810.1" cy="512.9" rx="2.3" ry="1.4" fill="#121212" opacity="0.39"/>
<ellipse cx="737.5" cy="605.0" rx="1.9" ry="1.1" fill="#181818" opacity="0.47"/>
<ellipse cx="789.4" cy="472.9" rx="1.7" ry="1.0" fill="#3c3c3c" opacity="0.50"/>
<ellipse cx="852.3" cy="523.0" rx="2.5" ry="3.0" fill="#3c3c3c" opacity="0.47"/>
<ellipse cx="793.4" cy="513.8" rx="1.2" ry="0.8" fill="#1e1e1e" opacity="0.66"/>
<ellipse cx="737.7" cy="607.5" rx="1.3" ry="1.2" fill="#3c3c3c" opacity="0.48"/>
<ellipse cx="860.6" cy="566.1" rx="1.0" ry="1.1" fill="#5f5f5f" opacity="0.51"/>
<ellipse cx="772.7" cy="551.6" rx="1.4" ry="1.3" fill="#505050" opacity="0.36"/>
<ellipse cx="743.6" cy="484.8" rx="2.5" ry="1.6" fill="#5f5f5f" opacity="0.35"/>
<ellipse cx="904.9" cy="588.7" rx="2.2" ry="1.4" fill="#1e1e1e" opacity="0.33"/>
<ellipse cx="922.0" cy="546.4" rx="2.0" ry="1.5" fill="#0c0c0c" opacity="0.41"/>
<ellipse cx="896.5" cy="649.6" rx="1.0" ry="1.2" fill="#121212" opacity="0.49"/>
<ellipse cx="822.2" cy="499.4" rx="2.1" ry="2.4" fill="#464646" opacity="0.44"/>
<ellipse cx="976.5" cy="654.0" rx="1.2" ry="1.2" fill="#121212" opacity="0.63"/>
<ellipse cx="916.2" cy="541.2" rx="1.6" ry="0.9" fill="#0c0c0c" opacity="0.59"/>
<ellipse cx="843.9" cy="472.9" rx="1.0" ry="1.2" fill="#181818" opacity="0.39"/>
<ellipse cx="771.8" cy="487.7" rx="2.1" ry="2.5" fill="#3c3c3c" opacity="0.31"/>
<ellipse cx="974.9" cy="609.8" rx="1.0" ry="1.0" fill="#3c3c3c" opacity="0.53"/>
<ellipse cx="864.8" cy="602.9" rx="1.7" ry="1.0" fill="#121212" opacity="0.37"/>
<ellipse cx="796.5" cy="557.3" rx="1.2" ry="0.7" fill="#3c3c3c" opacity="0.65"/>
<ellipse cx="869.9" cy="511.7" rx="1.3" ry="1.2" fill="#1e1e1e" opacity="0.60"/>
<ellipse cx="978.0" cy="542.6" rx="2.2" ry="2.0" fill="#505050" opacity="0.31"/>
<ellipse cx="821.2" cy="544.9" rx="2.4" ry="2.7" fill="#464646" opacity="0.53"/>
<ellipse cx="831.4" cy="575.7" rx="2.0" ry="2.4" fill="#464646" opacity="0.67"/>
<ellipse cx="790.1" cy="549.1" rx="1.7" ry="1.5" fill="#0c0c0c" opacity="0.33"/>
<ellipse cx="840.2" cy="564.9" rx="1.5" ry="1.2" fill="#0c0c0c" opacity="0.46"/>
<ellipse cx="994.3" cy="555.1" rx="2.6" ry="2.9" fill="#0c0c0c" opacity="0.65"/>
<ellipse cx="731.4" cy="591.2" rx="2.8" ry="2.7" fill="#3c3c3c" opacity="0.55"/>
<ellipse cx="749.4" cy="491.4" rx="1.9" ry="2.2" fill="#0c0c0c" opacity="0.42"/>
<ellipse cx="805.4" cy="592.3" rx="1.1" ry="1.3" fill="#121212" opacity="0.67"/>
<ellipse cx="883.1" cy="646.9" rx="1.2" ry="0.7" fill="#5f5f5f" opacity="0.42"/>
<ellipse cx="833.0" cy="523.4" rx="2.5" ry="2.5" fill="#1e1e1e" opacity="0.41"/>
<ellipse cx="846.0" cy="601.4" rx="2.3" ry="1.5" fill="#1e1e1e" opacity="0.58"/>
<ellipse cx="847.8" cy="573.2" rx="1.9" ry="1.4" fill="#5f5f5f" opacity="0.40"/>
<ellipse cx="782.5" cy="566.4" rx="2.9" ry="2.3" fill="#505050" opacity="0.67"/>
<ellipse cx="810.4" cy="530.5" rx="1.6" ry="1.9" fill="#3c3c3c" opacity="0.42"/>
<ellipse cx="842.1" cy="479.9" rx="2.7" ry="2.0" fill="#505050" opacity="0.61"/>
<ellipse cx="864.2" cy="657.9" rx="1.8" ry="1.8" fill="#181818" opacity="0.36"/>
<ellipse cx="777.3" cy="585.3" rx="2.6" ry="2.3" fill="#3c3c3c" opacity="0.60"/>
<ellipse cx="924.9" cy="613.9" rx="1.5" ry="1.4" fill="#5f5f5f" opacity="0.55"/>
<ellipse cx="914.1" cy="547.3" rx="1.0" ry="1.0" fill="#121212" opacity="0.53"/>
<ellipse cx="857.9" cy="652.8" rx="1.8" ry="1.9" fill="#181818" opacity="0.65"/>
<ellipse cx="887.8" cy="540.9" rx="2.4" ry="1.7" fill="#5f5f5f" opacity="0.44"/>
<ellipse cx="818.4" cy="569.0" rx="2.3" ry="1.2" fill="#505050" opacity="0.60"/>
<ellipse cx="992.2" cy="541.1" rx="1.4" ry="1.0" fill="#3c3c3c" opacity="0.36"/>
<ellipse cx="879.1" cy="579.7" rx="2.6" ry="1.9" fill="#121212" opacity="0.69"/>
<ellipse cx="965.3" cy="651.5" rx="1.1" ry="1.0" fill="#0c0c0c" opacity="0.50"/>
<ellipse cx="973.2" cy="616.5" rx="2.0" ry="1.8" fill="#505050" opacity="0.57"/>
<ellipse cx="828.3" cy="536.7" rx="1.9" ry="1.0" fill="#464646" opacity="0.33"/>
<ellipse cx="784.6" cy="546.6" rx="2.3" ry="2.6" fill="#505050" opacity="0.36"/>
<ellipse cx="773.4" cy="548.9" rx="1.9" ry="1.8" fill="#505050" opacity="0.70"/>
<ellipse cx="815.7" cy="569.8" rx="1.3" ry="1.0" fill="#121212" opacity="0.69"/>
<ellipse cx="947.5" cy="566.4" rx="2.3" ry="1.6" fill="#121212" opacity="0.44"/>
<ellipse cx="977.4" cy="565.7" rx="2.3" ry="2.0" fill="#505050" opacity="0.63"/>
<ellipse cx="834.5" cy="479.6" rx="1.7" ry="2.0" fill="#121212" opacity="0.55"/>
<ellipse cx="733.6" cy="547.0" rx="1.6" ry="1.6" fill="#0c0c0c" opacity="0.30"/>
<ellipse cx="882.0" cy="596.3" rx="1.4" ry="1.4" fill="#1e1e1e" opacity="0.53"/>
<ellipse cx="959.8" cy="639.9" rx="2.1" ry="1.7" fill="#181818" opacity="0.35"/>
<ellipse cx="751.1" cy="487.2" rx="2.9" ry="2.4" fill="#181818" opacity="0.49"/>
<ellipse cx="839.6" cy="621.7" rx="2.4" ry="2.1" fill="#0c0c0c" opacity="0.36"/>
<ellipse cx="787.0" cy="520.9" rx="1.5" ry="0.9" fill="#0c0c0c" opacity="0.66"/>
<ellipse cx="881.0" cy="535.0" rx="2.2" ry="1.2" fill="#5f5f5f" opacity="0.39"/>
<ellipse cx="830.1" cy="614.7" rx="1.9" ry="1.8" fill="#0c0c0c" opacity="0.40"/>
<ellipse cx="967.4" cy="624.7" rx="1.8" ry="1.2" fill="#3c3c3c" opacity="0.65"/>
<ellipse cx="906.9" cy="597.6" rx="1.8" ry="1.4" fill="#1e1e1e" opacity="0.58"/>
<ellipse cx="745.9" cy="500.6" rx="1.4" ry="1.6" fill="#505050" opacity="0.42"/>
<ellipse cx="867.7" cy="542.0" rx="2.3" ry="2.7" fill="#505050" opacity="0.47"/>
<ellipse cx="971.2" cy="574.3" rx="1.4" ry="1.0" fill="#505050" opacity="0.39"/>
<ellipse cx="731.5" cy="595.5" rx="2.6" ry="1.7" fill="#464646" opacity="0.35"/>
<ellipse cx="775.6" cy="572.6" rx="2.1" ry="1.7" fill="#181818" opacity="0.62"/>
<ellipse cx="787.6" cy="538.6" rx="2.4" ry="1.9" fill="#1e1e1e" opacity="0.68"/>
<ellipse cx="859.8" cy="511.6" rx="2.4" ry="2.7" fill="#5f5f5f" opacity="0.70"/>
<ellipse cx="884.7" cy="552.5" rx="2.1" ry="1.6" fill="#464646" opacity="0.50"/>
<ellipse cx="954.6" cy="609.3" rx="1.1" ry="1.1" fill="#505050" opacity="0.36"/>
<ellipse cx="911.6" cy="617.0" rx="1.6" ry="1.6" fill="#1e1e1e" opacity="0.34"/>
<ellipse cx="875.4" cy="537.4" rx="1.4" ry="1.4" fill="#3c3c3c" opacity="0.34"/>
<ellipse cx="830.9" cy="536.3" rx="2.5" ry="2.9" fill="#5f5f5f" opacity="0.64"/>
<ellipse cx="758.1" cy="521.1" rx="1.7" ry="1.8" fill="#0c0c0c" opacity="0.58"/>
<ellipse cx="914.1" cy="556.8" rx="1.7" ry="1.6" fill="#505050" opacity="0.37"/>
<ellipse cx="922.4" cy="604.8" rx="1.8" ry="1.7" fill="#0c0c0c" opacity="0.47"/>
<ellipse cx="923.6" cy="574.1" rx="2.1" ry="1.4" fill="#181818" opacity="0.50"/>
<ellipse cx="864.2" cy="645.7" rx="2.9" ry="1.7" fill="#464646" opacity="0.61"/>
<ellipse cx="900.9" cy="641.0" rx="2.9" ry="2.9" fill="#0c0c0c" opacity="0.31"/>
<ellipse cx="809.0" cy="617.2" rx="2.5" ry="1.4" fill="#464646" opacity="0.58"/>
<ellipse cx="829.5" cy="611.5" rx="1.6" ry="0.9" fill="#1e1e1e" opacity="0.68"/>
<ellipse cx="837.7" cy="646.6" rx="2.0" ry="2.0" fill="#5f5f5f" opacity="0.38"/>
<ellipse cx="905.8" cy="630.5" rx="2.0" ry="1.3" fill="#181818" opacity="0.68"/>
<ellipse cx="947.3" cy="575.4" rx="2.1" ry="2.5" fill="#181818" opacity="0.56"/>
<ellipse cx="738.2" cy="536.7" rx="1.2" ry="1.1" fill="#505050" opacity="0.35"/>
<ellipse cx="909.3" cy="561.4" rx="1.5" ry="1.0" fill="#5f5f5f" opacity="0.51"/>
<ellipse cx="843.5" cy="647.7" rx="2.4" ry="1.4" fill="#464646" opacity="0.58"/>
<ellipse cx="837.9" cy="648.7" rx="2.2" ry="1.8" fill="#181818" opacity="0.61"/>
<ellipse cx="801.0" cy="537.2" rx="1.1" ry="1.2" fill="#1e1e1e" opacity="0.42"/>
<ellipse cx="752.2" cy="527.3" rx="1.3" ry="1.1" fill="#121212" opacity="0.53"/>
<ellipse cx="801.0" cy="575.0" rx="1.0" ry="1.2" fill="#0c0c0c" opacity="0.60"/>
<ellipse cx="744.9" cy="605.7" rx="1.2" ry="1.0" fill="#3c3c3c" opacity="0.47"/>
<ellipse cx="773.8" cy="572.3" rx="1.7" ry="1.0" fill="#0c0c0c" opacity="0.41"/>
<ellipse cx="889.4" cy="608.3" rx="2.3" ry="1.3" fill="#3c3c3c" opacity="0.60"/>
<ellipse cx="728.9" cy="543.9" rx="1.6" ry="1.0" fill="#181818" opacity="0.56"/>
<ellipse cx="952.9" cy="645.9" rx="1.2" ry="1.2" fill="#181818" opacity="0.42"/>
<ellipse cx="890.4" cy="540.8" rx="1.6" ry="1.2" fill="#464646" opacity="0.52"/>
<ellipse cx="822.8" cy="627.6" rx="1.1" ry="0.6" fill="#1e1e1e" opacity="0.62"/>
<ellipse cx="973.5" cy="660.0" rx="2.8" ry="3.3" fill="#505050" opacity="0.50"/>
<ellipse cx="858.4" cy="498.2" rx="2.2" ry="2.1" fill="#3c3c3c" opacity="0.36"/>
<ellipse cx="784.1" cy="494.6" rx="1.2" ry="0.6" fill="#505050" opacity="0.48"/>
<ellipse cx="774.1" cy="606.8" rx="1.1" ry="1.0" fill="#0c0c0c" opacity="0.63"/>
<ellipse cx="861.6" cy="495.5" rx="2.3" ry="2.0" fill="#121212" opacity="0.47"/>
<ellipse cx="814.5" cy="552.2" rx="2.8" ry="1.7" fill="#181818" opacity="0.42"/>
<ellipse cx="843.0" cy="576.2" rx="2.1" ry="1.8" fill="#464646" opacity="0.52"/>
<ellipse cx="863.1" cy="550.2" rx="2.9" ry="3.5" fill="#181818" opacity="0.55"/>
<ellipse cx="906.7" cy="585.0" rx="2.1" ry="1.7" fill="#3c3c3c" opacity="0.45"/>
<ellipse cx="958.2" cy="569.8" rx="2.7" ry="1.8" fill="#0c0c0c" opacity="0.60"/>
<ellipse cx="880.1" cy="574.5" rx="1.7" ry="1.1" fill="#505050" opacity="0.48"/>
<ellipse cx="793.3" cy="511.6" rx="2.1" ry="1.2" fill="#1e1e1e" opacity="0.64"/>
<ellipse cx="791.2" cy="486.2" rx="2.4" ry="1.6" fill="#3c3c3c" opacity="0.48"/>
<ellipse cx="869.8" cy="601.8" rx="2.7" ry="2.6" fill="#121212" opacity="0.62"/>
<ellipse cx="758.7" cy="564.6" rx="2.3" ry="2.6" fill="#121212" opacity="0.51"/>
<ellipse cx="847.6" cy="599.7" rx="2.9" ry="1.9" fill="#181818" opacity="0.49"/>
<ellipse cx="747.4" cy="539.7" rx="1.8" ry="1.0" fill="#0c0c0c" opacity="0.32"/>
<ellipse cx="913.6" cy="651.5" rx="1.6" ry="1.6" fill="#5f5f5f" opacity="0.47"/>
<ellipse cx="964.6" cy="587.3" rx="2.1" ry="2.4" fill="#1e1e1e" opacity="0.65"/>
<ellipse cx="767.9" cy="611.1" rx="2.6" ry="2.6" fill="#464646" opacity="0.30"/>
<ellipse cx="791.8" cy="513.9" rx="2.4" ry="1.3" fill="#464646" opacity="0.54"/>
<ellipse cx="749.2" cy="573.4" rx="1.1" ry="1.2" fill="#121212" opacity="0.40"/>
<ellipse cx="818.7" cy="601.2" rx="2.7" ry="2.4" fill="#0c0c0c" opacity="0.35"/>
<ellipse cx="909.6" cy="541.1" rx="2.2" ry="1.5" fill="#181818" opacity="0.70"/>
<ellipse cx="843.2" cy="472.8" rx="2.0" ry="1.7" fill="#181818" opacity="0.31"/>
<ellipse cx="891.4" cy="591.8" rx="2.7" ry="3.2" fill="#505050" opacity="0.58"/>
<ellipse cx="844.5" cy="512.0" rx="1.7" ry="1.5" fill="#121212" opacity="0.42"/>
<ellipse cx="757.7" cy="587.9" rx="1.3" ry="1.0" fill="#1e1e1e" opacity="0.49"/>
<ellipse cx="879.5" cy="542.5" rx="1.6" ry="1.2" fill="#464646" opacity="0.49"/>
<ellipse cx="783.9" cy="515.8" rx="2.3" ry="2.3" fill="#0c0c0c" opacity="0.36"/>
<ellipse cx="826.9" cy="480.2" rx="1.7" ry="1.5" fill="#3c3c3c" opacity="0.53"/>
<ellipse cx="760.0" cy="602.1" rx="2.7" ry="2.9" fill="#121212" opacity="0.55"/>
<ellipse cx="895.3" cy="537.7" rx="2.6" ry="1.7" fill="#3c3c3c" opacity="0.62"/>
<ellipse cx="760.5" cy="481.8" rx="2.5" ry="2.1" fill="#464646" opacity="0.55"/>
<ellipse cx="817.7" cy="573.7" rx="1.7" ry="1.7" fill="#505050" opacity="0.57"/>
<ellipse cx="963.2" cy="618.3" rx="2.8" ry="3.0" fill="#464646" opacity="0.70"/>
<ellipse cx="763.2" cy="507.4" rx="1.8" ry="1.4" fill="#5f5f5f" opacity="0.61"/>
<ellipse cx="975.7" cy="580.7" rx="1.6" ry="1.1" fill="#181818" opacity="0.59"/>
<ellipse cx="872.5" cy="648.0" rx="1.1" ry="0.7" fill="#464646" opacity="0.67"/>
<ellipse cx="818.5" cy="557.8" rx="2.4" ry="2.8" fill="#505050" opacity="0.64"/>
<ellipse cx="809.2" cy="501.6" rx="2.1" ry="2.2" fill="#3c3c3c" opacity="0.55"/>
<ellipse cx="786.7" cy="471.9" rx="1.8" ry="1.2" fill="#0c0c0c" opacity="0.54"/>
<ellipse cx="957.9" cy="592.4" rx="1.5" ry="0.8" fill="#1e1e1e" opacity="0.35"/>
<ellipse cx="735.3" cy="482.1" rx="2.4" ry="1.2" fill="#464646" opacity="0.41"/>
<ellipse cx="810.2" cy="473.3" rx="1.7" ry="1.7" fill="#464646" opacity="0.56"/>
<ellipse cx="832.7" cy="598.4" rx="1.3" ry="1.5" fill="#464646" opacity="0.62"/>
<ellipse cx="745.8" cy="585.7" rx="3.0" ry="2.3" fill="#5f5f5f" opacity="0.68"/>
<ellipse cx="808.5" cy="593.6" rx="1.1" ry="1.0" fill="#464646" opacity="0.59"/>
<ellipse cx="811.9" cy="485.9" rx="1.4" ry="1.2" fill="#181818" opacity="0.64"/>
<ellipse cx="819.7" cy="537.5" rx="2.1" ry="1.9" fill="#464646" opacity="0.52"/>
<ellipse cx="901.5" cy="583.5" rx="1.5" ry="1.4" fill="#464646" opacity="0.63"/>
<ellipse cx="852.4" cy="474.1" rx="2.3" ry="2.0" fill="#3c3c3c" opacity="0.58"/>
<ellipse cx="874.7" cy="537.4" rx="1.3" ry="0.6" fill="#3c3c3c" opacity="0.49"/>
<ellipse cx="900.9" cy="616.6" rx="1.3" ry="1.2" fill="#464646" opacity="0.46"/>
<ellipse cx="989.3" cy="647.9" rx="1.2" ry="1.1" fill="#181818" opacity="0.38"/>
<ellipse cx="887.5" cy="609.6" rx="2.7" ry="3.0" fill="#181818" opacity="0.61"/>
<ellipse cx="866.3" cy="535.4" rx="1.9" ry="2.1" fill="#1e1e1e" opacity="0.39"/>
<ellipse cx="971.1" cy="641.0" rx="1.9" ry="1.4" fill="#505050" opacity="0.66"/>
<ellipse cx="751.4" cy="608.8" rx="2.6" ry="3.0" fill="#121212" opacity="0.57"/>
<ellipse cx="817.7" cy="511.8" rx="1.8" ry="2.1" fill="#505050" opacity="0.68"/>
<ellipse cx="790.8" cy="518.4" rx="1.5" ry="1.1" fill="#505050" opacity="0.43"/>
<ellipse cx="838.2" cy="521.5" rx="1.4" ry="1.3" fill="#5f5f5f" opacity="0.36"/>
<ellipse cx="957.6" cy="634.9" rx="2.9" ry="1.7" fill="#3c3c3c" opacity="0.42"/>
<ellipse cx="809.3" cy="585.2" rx="1.4" ry="0.8" fill="#5f5f5f" opacity="0.61"/>
<ellipse cx="954.4" cy="609.2" rx="2.6" ry="2.8" fill="#0c0c0c" opacity="0.37"/>
<ellipse cx="957.9" cy="659.0" rx="2.4" ry="2.5" fill="#3c3c3c" opacity="0.36"/>
<ellipse cx="804.6" cy="564.5" rx="1.2" ry="0.7" fill="#464646" opacity="0.57"/>
<ellipse cx="746.6" cy="533.2" rx="2.8" ry="3.3" fill="#505050" opacity="0.31"/>
<ellipse cx="859.8" cy="512.5" rx="2.4" ry="2.4" fill="#505050" opacity="0.32"/>
<ellipse cx="987.0" cy="568.9" rx="1.4" ry="1.3" fill="#0c0c0c" opacity="0.36"/>
<ellipse cx="923.5" cy="564.1" rx="2.1" ry="2.2" fill="#121212" opacity="0.68"/>
<ellipse cx="954.9" cy="654.6" rx="2.5" ry="1.7" fill="#1e1e1e" opacity="0.37"/>
<ellipse cx="794.2" cy="481.2" rx="1.4" ry="0.7" fill="#0c0c0c" opacity="0.62"/>
<ellipse cx="810.9" cy="476.0" rx="2.1" ry="1.8" fill="#5f5f5f" opacity="0.58"/>
<ellipse cx="990.2" cy="635.8" rx="1.8" ry="1.3" fill="#3c3c3c" opacity="0.47"/>
<ellipse cx="987.6" cy="542.3" rx="2.8" ry="2.9" fill="#505050" opacity="0.66"/>
<ellipse cx="858.8" cy="657.8" rx="3.0" ry="3.2" fill="#505050" opacity="0.57"/>
<ellipse cx="745.7" cy="587.2" rx="2.8" ry="1.5" fill="#0c0c0c" opacity="0.58"/>
<ellipse cx="810.6" cy="592.1" rx="1.9" ry="1.7" fill="#464646" opacity="0.49"/>
<ellipse cx="898.7" cy="558.4" rx="2.2" ry="2.6" fill="#464646" opacity="0.39"/>
<ellipse cx="893.9" cy="610.7" rx="1.7" ry="0.9" fill="#505050" opacity="0.69"/>
<ellipse cx="794.7" cy="594.6" rx="1.1" ry="1.2" fill="#464646" opacity="0.57"/>
<ellipse cx="974.2" cy="615.0" rx="2.8" ry="2.3" fill="#3c3c3c" opacity="0.59"/>
<ellipse cx="864.5" cy="559.5" rx="3.0" ry="1.6" fill="#1e1e1e" opacity="0.60"/>
<ellipse cx="821.4" cy="507.3" rx="2.6" ry="1.8" fill="#181818" opacity="0.37"/>
<ellipse cx="946.4" cy="556.4" rx="1.6" ry="1.2" fill="#0c0c0c" opacity="0.65"/>
<ellipse cx="838.9" cy="546.7" rx="1.8" ry="1.3" fill="#3c3c3c" opacity="0.57"/>
<ellipse cx="864.7" cy="526.1" rx="1.6" ry="1.1" fill="#121212" opacity="0.48"/>
<ellipse cx="752.5" cy="589.9" rx="2.5" ry="1.5" fill="#181818" opacity="0.57"/>
<ellipse cx="822.2" cy="568.0" rx="2.2" ry="1.9" fill="#1e1e1e" opacity="0.62"/>
<ellipse cx="791.0" cy="574.8" rx="2.1" ry="1.2" fill="#0c0c0c" opacity="0.37"/>
<ellipse cx="810.5" cy="514.4" rx="1.2" ry="1.1" fill="#5f5f5f" opacity="0.64"/>
<ellipse cx="777.1" cy="549.2" rx="2.2" ry="1.7" fill="#3c3c3c" opacity="0.32"/>
<ellipse cx="842.8" cy="538.5" rx="2.9" ry="2.4" fill="#3c3c3c" opacity="0.54"/>
<ellipse cx="792.1" cy="513.8" rx="2.8" ry="1.8" fill="#181818" opacity="0.69"/>
<ellipse cx="916.3" cy="539.5" rx="1.7" ry="0.9" fill="#1e1e1e" opacity="0.60"/>
<ellipse cx="825.6" cy="569.0" rx="2.9" ry="2.7" fill="#5f5f5f" opacity="0.62"/>
<ellipse cx="751.4" cy="576.2" rx="2.4" ry="1.9" fill="#5f5f5f" opacity="0.70"/>
<ellipse cx="770.1" cy="480.5" rx="2.0" ry="1.7" fill="#505050" opacity="0.63"/>
<ellipse cx="905.0" cy="610.2" rx="2.1" ry="2.4" fill="#505050" opacity="0.42"/>
<ellipse cx="812.1" cy="542.4" rx="1.2" ry="0.8" fill="#5f5f5f" opacity="0.33"/>
<ellipse cx="907.9" cy="604.5" rx="2.7" ry="2.4" fill="#5f5f5f" opacity="0.60"/>
<ellipse cx="833.1" cy="477.6" rx="1.6" ry="1.0" fill="#181818" opacity="0.69"/>
<ellipse cx="772.8" cy="571.5" rx="1.2" ry="0.9" fill="#3c3c3c" opacity="0.57"/>
<ellipse cx="803.6" cy="543.8" rx="2.4" ry="1.7" fill="#505050" opacity="0.40"/>
<ellipse cx="825.8" cy="551.7" rx="1.6" ry="1.0" fill="#3c3c3c" opacity="0.38"/>
<ellipse cx="900.1" cy="647.0" rx="2.4" ry="1.4" fill="#5f5f5f" opacity="0.67"/>
<ellipse cx="815.3" cy="555.6" rx="2.5" ry="1.2" fill="#0c0c0c" opacity="0.33"/>
<ellipse cx="981.7" cy="626.1" rx="1.5" ry="1.6" fill="#0c0c0c" opacity="0.42"/>
<ellipse cx="916.0" cy="622.1" rx="1.8" ry="1.8" fill="#5f5f5f" opacity="0.38"/>
<ellipse cx="777.5" cy="502.6" rx="1.1" ry="1.2" fill="#121212" opacity="0.33"/>
<ellipse cx="973.8" cy="575.7" rx="2.0" ry="1.9" fill="#181818" opacity="0.57"/>
<ellipse cx="802.5" cy="508.5" rx="1.3" ry="1.5" fill="#181818" opacity="0.38"/>
<ellipse cx="749.5" cy="486.3" rx="2.9" ry="2.3" fill="#121212" opacity="0.56"/>
<ellipse cx="737.5" cy="601.6" rx="1.3" ry="1.1" fill="#0c0c0c" opacity="0.60"/>
<ellipse cx="960.8" cy="621.1" rx="1.6" ry="1.1" fill="#181818" opacity="0.52"/>
<ellipse cx="987.9" cy="530.9" rx="2.3" ry="1.5" fill="#181818" opacity="0.52"/>
<ellipse cx="747.6" cy="557.2" rx="1.9" ry="1.8" fill="#181818" opacity="0.35"/>
<ellipse cx="974.1" cy="659.3" rx="1.6" ry="1.2" fill="#121212" opacity="0.60"/>
<ellipse cx="857.6" cy="646.5" rx="1.4" ry="1.0" fill="#121212" opacity="0.42"/>
<ellipse cx="881.4" cy="613.2" rx="1.3" ry="0.9" fill="#1e1e1e" opacity="0.66"/>
<ellipse cx="885.5" cy="653.7" rx="1.4" ry="0.8" fill="#464646" opacity="0.42"/>
<ellipse cx="769.0" cy="535.2" rx="1.5" ry="1.5" fill="#5f5f5f" opacity="0.37"/>
<ellipse cx="741.0" cy="575.4" rx="2.5" ry="1.4" fill="#121212" opacity="0.36"/>
<ellipse cx="829.4" cy="474.9" rx="2.0" ry="1.2" fill="#0c0c0c" opacity="0.56"/>
<ellipse cx="758.0" cy="579.0" rx="1.2" ry="1.2" fill="#464646" opacity="0.59"/>
<ellipse cx="820.1" cy="595.2" rx="1.7" ry="1.8" fill="#121212" opacity="0.65"/>
<ellipse cx="853.1" cy="496.6" rx="1.2" ry="0.8" fill="#121212" opacity="0.36"/>
<ellipse cx="795.8" cy="571.9" rx="1.9" ry="1.2" fill="#464646" opacity="0.51"/>
<ellipse cx="860.4" cy="538.4" rx="1.6" ry="1.4" fill="#1e1e1e" opacity="0.70"/>
<ellipse cx="970.0" cy="607.5" rx="2.8" ry="1.4" fill="#1e1e1e" opacity="0.68"/>
<ellipse cx="855.3" cy="619.9" rx="2.4" ry="1.6" fill="#1e1e1e" opacity="0.60"/>
<ellipse cx="763.9" cy="518.7" rx="1.8" ry="1.7" fill="#0c0c0c" opacity="0.34"/>
<ellipse cx="862.0" cy="625.3" rx="1.1" ry="0.8" fill="#1e1e1e" opacity="0.34"/>
<ellipse cx="769.7" cy="526.3" rx="2.6" ry="2.2" fill="#121212" opacity="0.67"/>
<ellipse cx="834.5" cy="546.2" rx="2.6" ry="1.6" fill="#121212" opacity="0.50"/>
<ellipse cx="974.5" cy="599.7" rx="3.0" ry="3.2" fill="#121212" opacity="0.49"/>
<ellipse cx="857.8" cy="617.6" rx="2.5" ry="2.4" fill="#121212" opacity="0.38"/>
<ellipse cx="892.7" cy="630.4" rx="1.2" ry="1.2" fill="#505050" opacity="0.44"/>
<ellipse cx="905.7" cy="611.1" rx="1.5" ry="1.5" fill="#181818" opacity="0.42"/>
<ellipse cx="736.4" cy="557.5" rx="1.9" ry="2.0" fill="#181818" opacity="0.61"/>
<ellipse cx="984.3" cy="570.1" rx="1.1" ry="1.2" fill="#121212" opacity="0.62"/>
<ellipse cx="926.9" cy="630.7" rx="1.4" ry="1.1" fill="#1e1e1e" opacity="0.39"/>
<ellipse cx="856.5" cy="642.4" rx="1.8" ry="1.9" fill="#0c0c0c" opacity="0.62"/>
<ellipse cx="908.4" cy="648.8" rx="1.8" ry="1.0" fill="#505050" opacity="0.56"/>
<ellipse cx="950.3" cy="533.2" rx="2.6" ry="1.3" fill="#505050" opacity="0.50"/>
<ellipse cx="943.8" cy="548.4" rx="1.9" ry="1.4" fill="#3c3c3c" opacity="0.39"/>
<ellipse cx="818.6" cy="630.2" rx="1.6" ry="0.9" fill="#0c0c0c" opacity="0.41"/>
<ellipse cx="913.4" cy="552.9" rx="1.2" ry="1.2" fill="#1e1e1e" opacity="0.32"/>
<ellipse cx="820.9" cy="511.0" rx="1.6" ry="1.2" fill="#505050" opacity="0.65"/>
<ellipse cx="937.9" cy="584.5" rx="1.8" ry="0.9" fill="#181818" opacity="0.64"/>
<ellipse cx="750.3" cy="515.2" rx="2.5" ry="2.4" fill="#3c3c3c" opacity="0.69"/>
</g>
<path d="M775 470 Q800 462 845 466" fill="none" stroke="#444" stroke-width="3"/>
</g>
<path d="M757.0 466.0 L756.3 465.0 L755.3 463.6 L754.1 462.1 L752.8 460.3 L751.4 458.4 L750.1 456.4 L748.8 454.3 L747.6 452.2 L746.7 450.1 L746.0 448.0 L745.6 445.9 L745.2 443.8 L745.0 441.6 L745.0 439.4 L745.0 437.1 L745.2 434.7 L745.4 432.4 L745.8 429.9 L746.4 427.5 L747.0 425.0 L747.8 422.5 L748.7 419.8 L749.8 417.1 L751.0 414.4 L752.3 411.6 L753.7 408.8 L755.2 406.1 L756.8 403.3 L758.4 400.6 L760.0 398.0 L761.7 395.4 L763.4 392.8 L765.2 390.2 L767.1 387.6 L769.1 385.0 L771.1 382.5 L773.2 380.0 L775.4 377.6 L777.6 375.2 L780.0 373.0 L782.4 370.8 L784.9 368.7 L787.4 366.7 L790.0 364.7 L792.8 362.8 L795.6 360.9 L798.5 359.1 L801.5 357.3 L804.7 355.6 L808.0 354.0 L811.5 352.4 L815.2 350.8 L819.1 349.3 L823.0 347.8 L827.1 346.4 L831.3 345.1 L835.5 343.9 L839.7 342.8 L843.9 341.8 L848.0 341.0 L852.1 340.3 L856.3 339.7 L860.5 339.2 L864.7 338.8 L868.9 338.6 L873.1 338.4 L877.3 338.4 L881.6 338.5 L885.8 338.7 L890.0 339.0 L894.2 339.5 L898.5 340.1 L902.8 340.8 L907.1 341.6 L911.4 342.6 L915.6 343.6 L919.8 344.8 L924.0 346.1 L928.0 347.5 L932.0 349.0 L935.9 350.6 L939.8 352.4 L943.6 354.2 L947.4 356.2 L951.1 358.2 L954.7 360.4 L958.2 362.7 L961.6 365.0 L964.9 367.5 L968.0 370.0 L971.0 372.6 L973.9 375.3 L976.7 378.1 L979.4 381.0 L982.0 384.0 L984.5 387.1 L986.8 390.2 L989.0 393.4 L991.1 396.7 L993.0 400.0 L994.8 403.4 L996.4 407.0 L997.9 410.6 L999.2 414.3 L1000.4 418.1 L1001.5 421.9 L1002.5 425.8 L1003.4 429.6 L1004.3 433.3 L1005.0 437.0 L1005.6 440.7 L1006.2 444.4 L1006.6 448.1 L1007.0 451.8 L1007.2 455.4 L1007.3 459.1 L1007.4 462.7 L1007.3 466.2 L1007.2 469.6 L1007.0 473.0 L1006.7 476.3 L1006.3 479.5 L1005.7 482.7 L1005.1 485.8 L1004.4 488.9 L1003.6 491.9 L1002.8 494.8 L1001.9 497.6 L1000.9 500.4 L1000.0 503.0 L999.0 505.5 L998.0 507.9 L997.0 510.2 L995.8 512.4 L994.7 514.6 L993.5 516.7 L992.2 518.7 L990.9 520.8 L989.5 522.9 L988.0 525.0 L986.4 527.2 L984.5 529.6 L982.5 532.0 L980.4 534.5 L978.2 536.9 L976.2 539.2 L974.3 541.3 L972.5 543.2 L971.1 544.8 L970.0 546.0" fill="none" stroke="#505050" stroke-width="2.4"/>
<path d="M759.2 464.5 L758.4 463.4 L757.4 462.1 L756.2 460.5 L754.9 458.8 L753.6 456.9 L752.2 455.0 L751.0 453.0 L749.9 451.1 L749.1 449.2 L748.5 447.3 L748.1 445.5 L747.8 443.5 L747.6 441.4 L747.6 439.3 L747.6 437.2 L747.7 435.0 L748.0 432.7 L748.4 430.4 L748.9 428.1 L749.5 425.7 L750.2 423.3 L751.2 420.7 L752.2 418.1 L753.4 415.5 L754.6 412.8 L756.0 410.1 L757.5 407.3 L759.0 404.6 L760.6 402.0 L762.2 399.4 L763.9 396.8 L765.6 394.2 L767.4 391.7 L769.2 389.1 L771.1 386.6 L773.1 384.1 L775.1 381.7 L777.3 379.4 L779.5 377.1 L781.8 374.9 L784.1 372.8 L786.6 370.7 L789.0 368.7 L791.6 366.8 L794.2 364.9 L797.0 363.1 L799.8 361.3 L802.8 359.6 L805.9 357.9 L809.1 356.4 L812.5 354.8 L816.2 353.2 L820.0 351.7 L823.9 350.3 L827.9 348.9 L832.0 347.6 L836.2 346.4 L840.3 345.3 L844.4 344.4 L848.5 343.6 L852.5 342.9 L856.6 342.3 L860.7 341.8 L864.9 341.4 L869.0 341.2 L873.2 341.0 L877.3 341.0 L881.5 341.1 L885.6 341.3 L889.8 341.6 L893.9 342.0 L898.1 342.6 L902.3 343.3 L906.6 344.2 L910.8 345.1 L915.0 346.1 L919.1 347.3 L923.2 348.6 L927.2 349.9 L931.0 351.4 L934.9 353.0 L938.7 354.7 L942.4 356.5 L946.1 358.5 L949.8 360.5 L953.3 362.6 L956.8 364.9 L960.1 367.2 L963.3 369.5 L966.3 372.0 L969.3 374.5 L972.1 377.2 L974.8 379.9 L977.5 382.8 L980.0 385.7 L982.4 388.7 L984.7 391.7 L986.8 394.8 L988.9 398.0 L990.7 401.2 L992.4 404.6 L994.0 408.0 L995.4 411.5 L996.8 415.2 L998.0 418.9 L999.0 422.6 L1000.0 426.4 L1000.9 430.1 L1001.7 433.8 L1002.4 437.5 L1003.1 441.1 L1003.6 444.7 L1004.0 448.3 L1004.4 452.0 L1004.6 455.6 L1004.7 459.1 L1004.8 462.7 L1004.7 466.1 L1004.6 469.5 L1004.4 472.8 L1004.1 476.0 L1003.7 479.1 L1003.2 482.2 L1002.5 485.3 L1001.9 488.3 L1001.1 491.2 L1000.3 494.0 L999.4 496.8 L998.5 499.5 L997.6 502.1 L996.6 504.6 L995.6 506.9 L994.6 509.1 L993.5 511.2 L992.4 513.3 L991.2 515.3 L990.0 517.3 L988.7 519.4 L987.3 521.4 L985.9 523.5 L984.3 525.7 L982.5 528.0 L980.5 530.4 L978.4 532.8 L976.3 535.1 L974.3 537.4 L972.3 539.5 L970.6 541.4 L969.2 543.0 L968.1 544.3" fill="none" stroke="#1e1e1e" stroke-width="3"/>
<path d="M761.6 462.9 L760.9 461.7 L759.8 460.3 L758.6 458.7 L757.3 457.0 L756.0 455.2 L754.8 453.4 L753.6 451.5 L752.6 449.7 L751.9 448.1 L751.4 446.6 L751.1 444.9 L750.8 443.1 L750.6 441.2 L750.6 439.3 L750.6 437.3 L750.7 435.2 L751.0 433.1 L751.3 431.0 L751.8 428.8 L752.4 426.5 L753.1 424.2 L754.0 421.8 L755.0 419.3 L756.1 416.7 L757.3 414.1 L758.7 411.4 L760.1 408.8 L761.6 406.1 L763.1 403.5 L764.7 401.0 L766.4 398.5 L768.1 395.9 L769.8 393.4 L771.6 390.9 L773.5 388.4 L775.4 386.0 L777.4 383.7 L779.5 381.4 L781.6 379.2 L783.8 377.1 L786.1 375.0 L788.5 373.0 L790.9 371.1 L793.4 369.2 L795.9 367.4 L798.6 365.6 L801.3 363.9 L804.2 362.2 L807.2 360.6 L810.4 359.1 L813.8 357.5 L817.3 356.0 L821.1 354.5 L824.9 353.1 L828.9 351.8 L832.9 350.5 L837.0 349.3 L841.0 348.2 L845.0 347.3 L849.0 346.5 L853.0 345.8 L857.0 345.3 L861.0 344.8 L865.1 344.4 L869.2 344.2 L873.2 344.0 L877.3 344.0 L881.4 344.1 L885.4 344.3 L889.5 344.6 L893.5 345.0 L897.7 345.6 L901.8 346.3 L905.9 347.1 L910.1 348.0 L914.2 349.0 L918.3 350.2 L922.2 351.4 L926.1 352.8 L929.9 354.2 L933.7 355.8 L937.4 357.4 L941.1 359.2 L944.7 361.1 L948.3 363.1 L951.7 365.2 L955.1 367.3 L958.3 369.6 L961.4 371.9 L964.4 374.3 L967.3 376.8 L970.0 379.3 L972.7 382.0 L975.2 384.8 L977.7 387.6 L980.0 390.5 L982.2 393.5 L984.3 396.5 L986.3 399.6 L988.1 402.7 L989.7 405.9 L991.2 409.2 L992.6 412.6 L993.9 416.2 L995.1 419.8 L996.1 423.4 L997.1 427.1 L998.0 430.8 L998.8 434.5 L999.5 438.0 L1000.1 441.6 L1000.6 445.1 L1001.0 448.6 L1001.4 452.2 L1001.6 455.7 L1001.7 459.2 L1001.8 462.7 L1001.7 466.1 L1001.6 469.4 L1001.4 472.6 L1001.1 475.6 L1000.7 478.7 L1000.2 481.7 L999.6 484.6 L998.9 487.5 L998.2 490.4 L997.4 493.2 L996.5 495.9 L995.7 498.5 L994.7 501.1 L993.8 503.4 L992.9 505.7 L991.9 507.8 L990.9 509.8 L989.8 511.8 L988.7 513.8 L987.5 515.7 L986.2 517.7 L984.8 519.7 L983.4 521.8 L981.9 523.8 L980.1 526.1 L978.2 528.4 L976.1 530.8 L974.1 533.1 L972.0 535.4 L970.1 537.5 L968.4 539.4 L966.9 541.0 L965.8 542.3" fill="none" stroke="#3a3a3a" stroke-width="3.2"/>
<path d="M764.1 461.2 L763.3 460.0 L762.2 458.5 L761.0 456.9 L759.7 455.2 L758.5 453.5 L757.3 451.7 L756.2 450.0 L755.3 448.4 L754.7 447.0 L754.3 445.8 L754.0 444.4 L753.8 442.8 L753.6 441.1 L753.6 439.3 L753.6 437.4 L753.7 435.5 L754.0 433.6 L754.3 431.5 L754.7 429.5 L755.3 427.3 L755.9 425.2 L756.8 422.9 L757.7 420.5 L758.8 418.0 L760.0 415.4 L761.3 412.8 L762.7 410.2 L764.2 407.6 L765.7 405.1 L767.3 402.6 L768.9 400.1 L770.5 397.6 L772.3 395.1 L774.0 392.7 L775.8 390.3 L777.7 387.9 L779.7 385.7 L781.6 383.5 L783.7 381.4 L785.8 379.3 L788.1 377.3 L790.4 375.3 L792.7 373.4 L795.2 371.6 L797.6 369.8 L800.2 368.1 L802.9 366.5 L805.7 364.8 L808.6 363.3 L811.7 361.8 L815.0 360.3 L818.5 358.8 L822.1 357.3 L825.9 355.9 L829.8 354.6 L833.8 353.3 L837.8 352.2 L841.7 351.1 L845.7 350.2 L849.6 349.5 L853.5 348.8 L857.4 348.2 L861.3 347.8 L865.3 347.4 L869.3 347.2 L873.3 347.0 L877.3 347.0 L881.3 347.1 L885.2 347.2 L889.2 347.6 L893.2 348.0 L897.2 348.6 L901.3 349.2 L905.3 350.0 L909.4 350.9 L913.4 351.9 L917.4 353.1 L921.3 354.3 L925.1 355.6 L928.8 357.0 L932.5 358.5 L936.1 360.1 L939.7 361.9 L943.3 363.7 L946.7 365.7 L950.1 367.7 L953.4 369.8 L956.6 372.0 L959.6 374.3 L962.5 376.6 L965.3 379.0 L967.9 381.5 L970.5 384.1 L973.0 386.8 L975.4 389.5 L977.7 392.3 L979.8 395.2 L981.8 398.1 L983.7 401.1 L985.5 404.1 L987.0 407.2 L988.5 410.4 L989.8 413.7 L991.1 417.1 L992.2 420.6 L993.3 424.2 L994.2 427.8 L995.1 431.5 L995.8 435.1 L996.5 438.6 L997.2 442.0 L997.7 445.5 L998.1 449.0 L998.4 452.4 L998.6 455.9 L998.7 459.3 L998.8 462.7 L998.7 466.0 L998.6 469.2 L998.4 472.3 L998.1 475.3 L997.8 478.2 L997.3 481.1 L996.7 484.0 L996.0 486.8 L995.3 489.6 L994.5 492.3 L993.7 495.0 L992.8 497.5 L991.9 500.0 L991.1 502.3 L990.1 504.5 L989.2 506.5 L988.2 508.4 L987.2 510.4 L986.1 512.2 L984.9 514.1 L983.7 516.1 L982.4 518.0 L981.0 520.0 L979.5 522.0 L977.8 524.2 L975.9 526.5 L973.9 528.8 L971.8 531.1 L969.8 533.4 L967.9 535.5 L966.2 537.4 L964.7 539.0 L963.6 540.3" fill="none" stroke="#262626" stroke-width="3"/>
<path d="M766.3 459.7 L765.4 458.5 L764.3 456.9 L763.1 455.3 L761.8 453.7 L760.6 452.0 L759.4 450.3 L758.4 448.7 L757.6 447.2 L757.1 446.1 L756.8 445.1 L756.6 443.9 L756.4 442.4 L756.2 440.9 L756.2 439.3 L756.2 437.5 L756.3 435.8 L756.5 433.9 L756.8 432.0 L757.3 430.0 L757.8 428.0 L758.4 426.0 L759.2 423.8 L760.1 421.5 L761.2 419.0 L762.4 416.6 L763.6 414.0 L765.0 411.5 L766.4 409.0 L767.9 406.4 L769.5 404.0 L771.0 401.5 L772.7 399.1 L774.4 396.6 L776.1 394.2 L777.9 391.9 L779.7 389.6 L781.6 387.4 L783.5 385.2 L785.5 383.2 L787.6 381.2 L789.8 379.3 L792.0 377.3 L794.3 375.5 L796.7 373.7 L799.1 372.0 L801.6 370.3 L804.2 368.7 L806.9 367.1 L809.8 365.6 L812.8 364.1 L816.0 362.7 L819.4 361.2 L823.1 359.8 L826.8 358.4 L830.6 357.1 L834.5 355.8 L838.5 354.7 L842.4 353.7 L846.2 352.8 L850.0 352.0 L853.9 351.4 L857.7 350.8 L861.6 350.4 L865.5 350.0 L869.4 349.7 L873.4 349.6 L877.3 349.6 L881.2 349.6 L885.1 349.8 L888.9 350.1 L892.8 350.6 L896.8 351.1 L900.8 351.8 L904.8 352.6 L908.8 353.5 L912.8 354.5 L916.7 355.6 L920.5 356.7 L924.2 358.0 L927.9 359.4 L931.5 360.9 L935.0 362.5 L938.6 364.2 L942.0 366.0 L945.4 367.9 L948.8 369.9 L952.0 372.0 L955.1 374.1 L958.0 376.3 L960.8 378.6 L963.5 380.9 L966.1 383.4 L968.7 385.9 L971.1 388.5 L973.4 391.2 L975.6 393.9 L977.7 396.7 L979.7 399.6 L981.5 402.5 L983.2 405.4 L984.7 408.3 L986.1 411.4 L987.4 414.6 L988.6 418.0 L989.7 421.4 L990.7 424.9 L991.7 428.5 L992.5 432.0 L993.3 435.6 L994.0 439.1 L994.6 442.4 L995.1 445.8 L995.5 449.2 L995.8 452.6 L996.0 456.0 L996.1 459.4 L996.2 462.7 L996.1 465.9 L996.0 469.1 L995.8 472.1 L995.6 475.0 L995.2 477.8 L994.7 480.7 L994.1 483.4 L993.5 486.2 L992.8 488.9 L992.0 491.6 L991.2 494.2 L990.4 496.7 L989.5 499.1 L988.6 501.3 L987.8 503.4 L986.9 505.4 L985.9 507.2 L984.9 509.1 L983.9 510.9 L982.7 512.8 L981.5 514.6 L980.2 516.6 L978.9 518.5 L977.5 520.4 L975.8 522.6 L973.9 524.8 L971.9 527.1 L969.9 529.4 L967.9 531.6 L966.0 533.7 L964.3 535.6 L962.8 537.3 L961.6 538.6" fill="none" stroke="#343434" stroke-width="2.4"/>
<path d="M767.1 459.2 L766.2 457.9 L765.1 456.3 L763.9 454.7 L762.6 453.1 L761.4 451.4 L760.3 449.8 L759.3 448.2 L758.5 446.8 L758.1 445.7 L757.8 444.9 L757.6 443.8 L757.4 442.3 L757.2 440.8 L757.2 439.2 L757.2 437.6 L757.3 435.9 L757.5 434.1 L757.8 432.2 L758.2 430.3 L758.7 428.3 L759.4 426.3 L760.1 424.1 L761.0 421.9 L762.1 419.5 L763.3 417.0 L764.5 414.5 L765.9 412.0 L767.3 409.5 L768.8 407.0 L770.3 404.5 L771.9 402.1 L773.5 399.6 L775.2 397.2 L776.9 394.8 L778.7 392.5 L780.5 390.2 L782.4 388.0 L784.3 385.9 L786.2 383.9 L788.3 382.0 L790.5 380.0 L792.7 378.1 L795.0 376.3 L797.3 374.5 L799.7 372.8 L802.2 371.1 L804.7 369.5 L807.4 368.0 L810.2 366.5 L813.2 365.0 L816.4 363.6 L819.8 362.1 L823.4 360.7 L827.1 359.3 L830.9 358.0 L834.8 356.8 L838.7 355.7 L842.6 354.6 L846.4 353.8 L850.2 353.0 L854.0 352.4 L857.8 351.8 L861.7 351.3 L865.6 351.0 L869.5 350.7 L873.4 350.6 L877.3 350.6 L881.1 350.6 L885.0 350.8 L888.8 351.1 L892.7 351.6 L896.7 352.1 L900.6 352.8 L904.6 353.6 L908.6 354.4 L912.5 355.4 L916.4 356.5 L920.2 357.7 L923.9 359.0 L927.5 360.3 L931.1 361.8 L934.6 363.4 L938.1 365.1 L941.6 366.9 L944.9 368.8 L948.2 370.8 L951.4 372.8 L954.5 375.0 L957.4 377.1 L960.2 379.4 L962.9 381.7 L965.4 384.1 L967.9 386.6 L970.3 389.2 L972.6 391.8 L974.8 394.5 L976.9 397.3 L978.8 400.1 L980.6 403.0 L982.3 405.9 L983.8 408.8 L985.2 411.8 L986.5 415.0 L987.7 418.3 L988.8 421.7 L989.8 425.2 L990.7 428.7 L991.6 432.3 L992.3 435.8 L993.0 439.3 L993.6 442.6 L994.1 446.0 L994.5 449.3 L994.8 452.7 L995.0 456.1 L995.1 459.4 L995.2 462.7 L995.1 465.9 L995.0 469.0 L994.8 472.0 L994.6 474.9 L994.2 477.7 L993.7 480.5 L993.2 483.2 L992.5 485.9 L991.8 488.6 L991.1 491.3 L990.3 493.8 L989.4 496.4 L988.6 498.8 L987.7 501.0 L986.9 503.0 L986.0 504.9 L985.0 506.8 L984.0 508.6 L983.0 510.4 L981.9 512.2 L980.7 514.1 L979.4 516.0 L978.1 517.9 L976.7 519.8 L975.0 521.9 L973.2 524.2 L971.2 526.5 L969.1 528.8 L967.1 531.0 L965.3 533.1 L963.5 534.9 L962.0 536.6 L960.9 537.9 L860.0 480.0 L800.0 470.0 Z" fill="#1d1d1d"/>
<path d="M776.0 454.6 L774.5 454.2 L773.9 453.7 L773.4 453.1 L773.1 452.6 L772.7 452.0 L772.5 451.4 L772.2 450.9 L772.0 450.3 L771.9 449.7 L771.7 449.1 L771.6 448.5 L771.6 447.9 L771.5 447.3 L771.5 446.7 L771.5 446.1 L771.6 445.5 L771.7 444.9 L771.9 444.3 L772.1 443.6 L772.4 443.0 L772.8 442.4 L773.8 441.7 L772.9 441.2 L772.3 440.6 L771.8 440.1 L771.5 439.5 L771.2 438.9 L771.0 438.3 L770.8 437.7 L770.6 437.1 L770.5 436.5 L770.4 435.9 L770.4 435.3 L770.4 434.7 L770.4 434.1 L770.5 433.5 L770.6 432.9 L770.8 432.3 L771.0 431.7 L771.2 431.1 L771.5 430.6 L771.9 430.0 L772.3 429.5 L772.9 429.0 L773.9 428.5 L773.3 427.9 L772.9 427.2 L772.6 426.5 L772.4 425.9 L772.3 425.3 L772.3 424.6 L772.2 424.0 L772.2 423.4 L772.3 422.8 L772.3 422.2 L772.4 421.6 L772.6 421.0 L772.7 420.4 L772.9 419.8 L773.1 419.3 L773.4 418.7 L773.6 418.2 L773.9 417.6 L774.3 417.1 L774.6 416.6 L775.0 416.1 L775.4 415.6 L775.9 415.2 L776.5 414.8 L777.1 414.4 L778.2 414.3 L777.7 413.4 L777.4 412.6 L777.3 411.9 L777.3 411.3 L777.4 410.6 L777.5 410.0 L777.6 409.4 L777.8 408.8 L778.0 408.2 L778.2 407.7 L778.5 407.1 L778.8 406.6 L779.2 406.1 L779.6 405.7 L780.0 405.2 L780.4 404.8 L780.9 404.4 L781.4 404.0 L782.0 403.6 L782.6 403.3 L783.3 403.1 L784.3 403.1 L784.4 402.4 L784.2 401.6 L784.2 400.9 L784.4 400.2 L784.5 399.6 L784.7 399.0 L785.0 398.4 L785.2 397.9 L785.5 397.3 L785.9 396.8 L786.2 396.3 L786.6 395.9 L787.1 395.5 L787.5 395.0 L788.0 394.7 L788.5 394.3 L789.0 394.0 L789.6 393.7 L790.1 393.4 L790.8 393.2 L791.5 393.1 L792.3 393.0 L793.3 393.3 L793.1 392.2 L793.2 391.4 L793.3 390.7 L793.6 390.1 L793.9 389.5 L794.2 389.0 L794.6 388.5 L795.0 388.0 L795.4 387.6 L795.8 387.1 L796.3 386.7 L796.7 386.4 L797.2 386.0 L797.7 385.7 L798.3 385.4 L798.8 385.1 L799.4 384.9 L800.0 384.7 L800.6 384.6 L801.3 384.5 L802.0 384.4 L802.7 384.5 L803.7 384.9 L803.8 383.9 L803.9 383.1 L804.2 382.5 L804.6 381.9 L805.0 381.4 L805.4 380.9 L805.8 380.5 L806.3 380.1 L806.8 379.7 L807.3 379.4 L807.8 379.1 L808.4 378.9 L809.0 378.7 L809.6 378.5 L810.2 378.4 L810.8 378.4 L811.5 378.4 L812.2 378.4 L813.0 378.7 L814.0 379.6 L814.1 378.3 L814.4 377.6 L814.8 377.0 L815.2 376.5 L815.7 376.0 L816.2 375.6 L816.6 375.2 L817.2 374.9 L817.7 374.6 L818.2 374.3 L818.8 374.1 L819.3 373.9 L819.9 373.7 L820.5 373.5 L821.1 373.4 L821.7 373.3 L822.3 373.3 L823.0 373.3 L823.6 373.3 L824.3 373.5 L825.0 373.7 L825.7 374.1 L826.4 374.1 L826.7 373.3 L827.2 372.7 L827.6 372.2 L828.1 371.7 L828.6 371.4 L829.2 371.0 L829.7 370.7 L830.3 370.4 L830.8 370.2 L831.4 370.0 L831.9 369.8 L832.5 369.6 L833.1 369.5 L833.7 369.4 L834.3 369.4 L834.9 369.3 L835.6 369.3 L836.2 369.4 L836.8 369.4 L837.5 369.6 L838.1 369.8 L838.8 370.1 L839.6 370.8 L840.0 370.1 L840.5 369.4 L841.0 368.9 L841.5 368.5 L842.0 368.1 L842.6 367.8 L843.1 367.5 L843.7 367.3 L844.3 367.0 L844.8 366.9 L845.4 366.7 L846.0 366.5 L846.6 366.4 L847.2 366.3 L847.8 366.3 L848.4 366.2 L849.0 366.2 L849.6 366.3 L850.2 366.3 L850.9 366.4 L851.5 366.5 L852.1 366.7 L852.8 367.0 L853.4 367.4 L854.1 368.2 L854.6 367.2 L855.1 366.6 L855.7 366.1 L856.2 365.7 L856.8 365.4 L857.3 365.1 L857.9 364.9 L858.5 364.7 L859.1 364.6 L859.7 364.5 L860.3 364.5 L860.9 364.5 L861.5 364.6 L862.1 364.7 L862.8 364.9 L863.4 365.1 L864.0 365.4 L864.6 365.9 L865.3 366.7 L865.9 366.2 L866.4 365.6 L867.0 365.1 L867.6 364.8 L868.1 364.5 L868.7 364.2 L869.3 364.1 L869.9 363.9 L870.5 363.8 L871.1 363.7 L871.7 363.7 L872.3 363.7 L872.9 363.8 L873.5 363.8 L874.1 364.0 L874.7 364.1 L875.3 364.3 L875.9 364.6 L876.5 365.0 L877.1 365.5 L877.8 366.5 L878.3 365.6 L878.9 365.0 L879.5 364.6 L880.1 364.3 L880.7 364.0 L881.3 363.8 L881.9 363.7 L882.5 363.6 L883.1 363.6 L883.7 363.6 L884.3 363.6 L884.9 363.7 L885.5 363.8 L886.1 364.0 L886.7 364.3 L887.3 364.6 L887.9 365.0 L888.5 365.5 L889.0 366.5 L889.6 366.0 L890.2 365.5 L890.9 365.2 L891.5 364.9 L892.1 364.7 L892.7 364.6 L893.3 364.4 L893.9 364.4 L894.5 364.3 L895.1 364.3 L895.7 364.3 L896.3 364.3 L896.9 364.4 L897.5 364.5 L898.1 364.6 L898.7 364.7 L899.3 364.9 L899.9 365.1 L900.5 365.3 L901.0 365.6 L901.6 365.9 L902.1 366.3 L902.7 366.7 L903.2 367.2 L903.7 368.1 L904.3 367.8 L905.0 367.3 L905.6 367.0 L906.3 366.8 L906.9 366.7 L907.6 366.6 L908.2 366.5 L908.8 366.5 L909.4 366.5 L910.0 366.6 L910.6 366.7 L911.2 366.8 L911.8 366.9 L912.4 367.1 L912.9 367.3 L913.5 367.5 L914.1 367.8 L914.6 368.0 L915.1 368.4 L915.7 368.7 L916.2 369.1 L916.7 369.6 L917.1 370.2 L917.5 371.0 L918.1 370.9 L918.9 370.4 L919.6 370.1 L920.3 370.0 L920.9 369.9 L921.6 369.9 L922.2 369.9 L922.8 370.0 L923.4 370.2 L923.9 370.4 L924.5 370.6 L925.1 370.9 L925.6 371.2 L926.1 371.6 L926.6 372.0 L927.0 372.5 L927.4 373.1 L927.8 373.8 L927.9 375.0 L928.7 374.5 L929.5 374.3 L930.2 374.2 L930.8 374.2 L931.5 374.2 L932.1 374.3 L932.7 374.4 L933.3 374.5 L933.9 374.7 L934.5 374.8 L935.1 375.0 L935.6 375.3 L936.2 375.5 L936.7 375.8 L937.2 376.1 L937.7 376.4 L938.2 376.8 L938.7 377.2 L939.2 377.6 L939.6 378.0 L940.1 378.4 L940.5 378.9 L940.9 379.4 L941.2 380.0 L941.5 380.7 L941.7 381.5 L942.1 381.9 L942.9 381.7 L943.7 381.7 L944.3 381.7 L945.0 381.8 L945.6 382.0 L946.2 382.2 L946.8 382.4 L947.3 382.7 L947.9 382.9 L948.4 383.2 L948.9 383.6 L949.4 383.9 L949.9 384.3 L950.3 384.7 L950.8 385.1 L951.2 385.5 L951.6 386.0 L952.0 386.4 L952.4 386.9 L952.7 387.5 L953.0 388.0 L953.3 388.6 L953.5 389.2 L953.7 389.9 L953.8 390.6 L953.5 391.8 L954.7 391.4 L955.5 391.4 L956.1 391.6 L956.8 391.9 L957.4 392.1 L957.9 392.4 L958.4 392.8 L958.9 393.1 L959.4 393.5 L959.8 393.9 L960.3 394.4 L960.7 394.8 L961.0 395.3 L961.4 395.8 L961.7 396.3 L962.0 396.8 L962.3 397.4 L962.5 398.0 L962.7 398.6 L962.9 399.2 L963.0 399.8 L963.1 400.6 L963.0 401.4 L962.9 402.1 L963.9 402.1 L964.6 402.3 L965.3 402.6 L965.8 403.0 L966.4 403.3 L966.9 403.7 L967.3 404.1 L967.8 404.5 L968.2 405.0 L968.5 405.5 L968.9 406.0 L969.2 406.5 L969.5 407.0 L969.8 407.5 L970.0 408.1 L970.3 408.7 L970.4 409.2 L970.6 409.9 L970.7 410.5 L970.8 411.1 L970.8 411.8 L970.6 412.6 L970.2 413.5 L971.1 413.7 L971.9 413.9 L972.5 414.3 L973.1 414.6 L973.6 415.0 L974.1 415.5 L974.5 416.0 L974.8 416.4 L975.1 416.9 L975.4 417.5 L975.7 418.0 L975.9 418.6 L976.1 419.2 L976.2 419.8 L976.2 420.4 L976.3 421.1 L976.2 421.7 L976.1 422.4 L975.8 423.2 L975.3 424.1 L976.5 424.2 L977.2 424.6 L977.8 425.0 L978.3 425.4 L978.7 425.9 L979.1 426.4 L979.4 426.9 L979.7 427.5 L979.9 428.0 L980.1 428.6 L980.2 429.2 L980.3 429.8 L980.3 430.4 L980.3 431.1 L980.2 431.7 L980.1 432.4 L979.8 433.1 L979.1 433.9 L979.5 434.4 L980.3 434.8 L980.8 435.3 L981.3 435.8 L981.7 436.3 L982.0 436.8 L982.3 437.3 L982.6 437.9 L982.9 438.5 L983.1 439.0 L983.2 439.6 L983.4 440.2 L983.5 440.8 L983.6 441.4 L983.6 442.0 L983.6 442.6 L983.6 443.2 L983.5 443.8 L983.4 444.5 L983.2 445.1 L983.0 445.8 L982.6 446.5 L981.6 447.2 L982.8 447.6 L983.5 448.1 L984.0 448.6 L984.4 449.2 L984.7 449.7 L985.0 450.3 L985.2 450.9 L985.4 451.4 L985.5 452.0 L985.6 452.6 L985.6 453.2 L985.6 453.8 L985.6 454.5 L985.4 455.1 L985.3 455.7 L985.0 456.3 L984.7 457.0 L984.2 457.6 L983.3 458.3 L984.4 458.8 L985.0 459.3 L985.4 459.9 L985.7 460.5 L986.0 461.1 L986.2 461.6 L986.4 462.2 L986.5 462.8 L986.6 463.4 L986.7 464.0 L986.7 464.6 L986.6 465.2 L986.5 465.8 L986.4 466.4 L986.2 467.0 L986.0 467.6 L985.7 468.2 L985.3 468.8 L984.7 469.4 L984.0 470.0 L984.9 470.6 L985.4 471.2 L985.7 471.8 L986.0 472.4 L986.2 473.0 L986.4 473.7 L986.5 474.3 L986.5 474.9 L986.5 475.5 L986.5 476.1 L986.4 476.7 L986.3 477.3 L986.1 477.9 L985.9 478.4 L985.7 479.0 L985.4 479.6 L985.0 480.1 L984.5 480.7 L984.0 481.2 L982.9 481.6 L983.6 482.3 L984.1 483.0 L984.4 483.7 L984.6 484.3 L984.7 484.9 L984.8 485.6 L984.8 486.2 L984.7 486.8 L984.6 487.4 L984.5 488.0 L984.3 488.6 L984.0 489.1 L983.7 489.6 L983.4 490.2 L982.9 490.7 L982.4 491.1 L981.9 491.5 L981.1 491.9 L980.3 492.2 L980.9 493.0 L981.1 493.7 L981.1 494.4 L981.1 495.1 L981.1 495.7 L980.9 496.3 L980.8 496.9 L980.5 497.5 L980.2 498.0 L979.9 498.5 L979.5 499.0 L979.0 499.5 L978.6 499.9 L978.1 500.2 L977.6 500.6 L977.0 500.8 L976.4 501.1 L975.8 501.3 L975.2 501.4 L974.5 501.5 L973.7 501.4 L972.6 500.9 L972.8 502.2 L972.6 502.9 L972.3 503.6 L972.0 504.1 L971.6 504.7 L971.2 505.2 L970.8 505.6 L970.4 506.1 L958.0 500.0 L935.0 486.0 L910.0 477.0 L886.0 472.0 L866.0 466.0 L848.0 461.0 L832.0 462.0 L812.0 466.0 L792.0 463.0 Z" fill="#717171"/>
<path d="M776.5 454.6 L776.4 453.9 L776.3 453.3 L776.3 452.7 L776.2 452.2 L776.1 451.6 L776.0 451.0 L775.9 450.4 L775.8 449.8 L775.8 449.2 L775.7 448.6 L775.6 448.0 L775.5 447.4 L775.4 446.8 L775.3 446.2 L775.3 445.6 L775.2 445.1 L775.1 444.5 L775.0 443.9 L775.0 443.3 L774.9 442.7 L774.8 442.1 L774.8 441.6 L774.7 441.0 L774.7 440.4 L774.6 439.8 L774.6 439.3 L774.5 438.7 L774.5 438.1 L774.5 437.6 L774.4 437.0 L774.4 436.4 L774.4 435.9 L774.4 435.3 L774.4 434.8 L774.4 434.2 L774.4 433.7 L774.4 433.1 L774.5 432.6 L774.5 432.0 L774.6 431.5 L774.6 430.9 L774.7 430.4 L774.8 429.8 L774.9 429.3 L774.9 428.7 L775.0 428.1 L775.1 427.6 L775.2 427.0 L775.3 426.5 L775.4 425.9 L775.6 425.4 L775.7 424.8 L775.8 424.3 L776.0 423.7 L776.1 423.2 L776.2 422.6 L776.4 422.1 L776.6 421.6 L776.7 421.0 L776.9 420.5 L777.1 420.0 L777.3 419.4 L777.4 418.9 L777.6 418.4 L777.8 417.8 L778.0 417.3 L778.2 416.8 L778.5 416.3 L778.7 415.7 L778.9 415.2 L779.1 414.7 L779.4 414.2 L779.6 413.7 L779.8 413.2 L780.1 412.6 L780.3 412.1 L780.6 411.6 L780.9 411.1 L781.1 410.6 L781.4 410.1 L781.7 409.7 L782.0 409.2 L782.3 408.7 L782.6 408.2 L782.9 407.7 L783.2 407.2 L783.5 406.7 L783.8 406.3 L784.1 405.8 L784.4 405.3 L784.7 404.8 L785.1 404.4 L785.4 403.9 L785.7 403.4 L786.1 403.0 L786.4 402.5 L786.8 402.1 L787.1 401.6 L787.5 401.2 L787.8 400.7 L788.2 400.3 L788.5 399.8 L788.9 399.4 L789.3 399.0 L789.6 398.5 L790.0 398.1 L790.4 397.7 L790.8 397.2 L791.2 396.8 L791.6 396.4 L792.0 396.0 L792.4 395.6 L792.8 395.2 L793.2 394.8 L793.6 394.4 L794.0 394.0 L794.4 393.6 L794.8 393.2 L795.2 392.8 L795.7 392.4 L796.1 392.1 L796.5 391.7 L797.0 391.3 L797.4 391.0 L797.8 390.6 L798.3 390.2 L798.7 389.9 L799.2 389.5 L799.6 389.2 L800.1 388.8 L800.6 388.5 L801.0 388.1 L801.5 387.8 L801.9 387.5 L802.4 387.1 L802.9 386.8 L803.4 386.5 L803.8 386.2 L804.3 385.9 L804.8 385.5 L805.3 385.2 L805.8 384.9 L806.3 384.6 L806.7 384.3 L807.2 384.0 L807.7 383.7 L808.2 383.5 L808.7 383.2 L809.2 382.9 L809.7 382.6 L810.2 382.3 L810.8 382.1 L811.3 381.8 L811.8 381.5 L812.3 381.3 L812.8 381.0 L813.3 380.8 L813.8 380.5 L814.4 380.3 L814.9 380.0 L815.4 379.8 L815.9 379.6 L816.5 379.3 L817.0 379.1 L817.5 378.9 L818.1 378.6 L818.6 378.4 L819.1 378.2 L819.7 378.0 L820.2 377.8 L820.8 377.6 L821.3 377.4 L821.8 377.2 L822.4 377.0 L822.9 376.8 L823.5 376.6 L824.0 376.4 L824.6 376.2 L825.2 376.0 L825.7 375.8 L826.3 375.7 L826.8 375.5 L827.4 375.3 L827.9 375.1 L828.5 375.0 L829.1 374.8 L829.6 374.6 L830.2 374.5 L830.7 374.3 L831.3 374.1 L831.9 374.0 L832.4 373.8 L833.0 373.7 L833.6 373.5 L834.1 373.3 L834.7 373.2 L835.3 373.0 L835.9 372.9 L836.4 372.8 L837.0 372.6 L837.6 372.5 L838.1 372.3 L838.7 372.2 L839.3 372.1 L839.9 371.9 L840.4 371.8 L841.0 371.7 L841.6 371.5 L842.1 371.4 L842.7 371.3 L843.3 371.2 L843.9 371.0 L844.4 370.9 L845.0 370.8 L845.6 370.7 L846.2 370.6 L846.8 370.5 L847.3 370.4 L847.9 370.3 L848.5 370.2 L849.1 370.0 L849.6 369.9 L850.2 369.9 L850.8 369.8 L851.4 369.7 L852.0 369.6 L852.5 369.5 L853.1 369.4 L853.7 369.3 L854.3 369.2 L854.9 369.1 L855.5 369.1 L856.0 369.0 L856.6 368.9 L857.2 368.8 L857.8 368.8 L858.4 368.7 L859.0 368.6 L859.5 368.6 L860.1 368.5 L860.7 368.5 L861.3 368.4 L861.9 368.3 L862.5 368.3 L863.0 368.2 L863.6 368.2 L864.2 368.1 L864.8 368.1 L865.4 368.1 L866.0 368.0 L866.6 368.0 L867.1 367.9 L867.7 367.9 L868.3 367.9 L868.9 367.8 L869.5 367.8 L870.1 367.8 L870.7 367.7 L871.3 367.7 L871.9 367.7 L872.5 367.7 L873.0 367.7 L873.6 367.6 L874.2 367.6 L874.8 367.6 L875.4 367.6 L876.0 367.6 L876.6 367.6 L877.2 367.5 L877.8 367.5 L878.4 367.5 L878.9 367.5 L879.5 367.5 L880.1 367.5 L880.7 367.5 L881.3 367.5 L881.9 367.5 L882.5 367.5 L883.1 367.5 L883.7 367.6 L884.2 367.6 L884.8 367.6 L885.4 367.6 L886.0 367.6 L886.6 367.6 L887.2 367.7 L887.8 367.7 L888.3 367.7 L888.9 367.7 L889.5 367.8 L890.1 367.8 L890.7 367.8 L891.3 367.9 L891.9 367.9 L892.4 368.0 L893.0 368.0 L893.6 368.1 L894.2 368.1 L894.8 368.2 L895.3 368.2 L895.9 368.3 L896.5 368.4 L897.1 368.4 L897.7 368.5 L898.2 368.6 L898.8 368.6 L899.4 368.7 L900.0 368.8 L900.6 368.9 L901.1 369.0 L901.7 369.1 L902.3 369.1 L902.9 369.2 L903.4 369.3 L904.0 369.4 L904.6 369.5 L905.2 369.6 L905.7 369.7 L906.3 369.9 L906.9 370.0 L907.5 370.1 L908.0 370.2 L908.6 370.3 L909.2 370.4 L909.8 370.6 L910.3 370.7 L910.9 370.8 L911.5 370.9 L912.0 371.1 L912.6 371.2 L913.2 371.4 L913.7 371.5 L914.3 371.6 L914.9 371.8 L915.4 371.9 L916.0 372.1 L916.5 372.2 L917.1 372.4 L917.7 372.6 L918.2 372.7 L918.8 372.9 L919.3 373.1 L919.9 373.2 L920.4 373.4 L921.0 373.6 L921.5 373.8 L922.1 374.0 L922.6 374.1 L923.2 374.3 L923.7 374.5 L924.3 374.7 L924.8 374.9 L925.4 375.1 L925.9 375.3 L926.4 375.5 L927.0 375.8 L927.5 376.0 L928.1 376.2 L928.6 376.4 L929.1 376.6 L929.6 376.9 L930.2 377.1 L930.7 377.3 L931.2 377.6 L931.8 377.8 L932.3 378.1 L932.8 378.3 L933.3 378.6 L933.8 378.8 L934.3 379.1 L934.9 379.4 L935.4 379.6 L935.9 379.9 L936.4 380.2 L936.9 380.4 L937.4 380.7 L937.9 381.0 L938.4 381.3 L938.9 381.6 L939.4 381.9 L939.9 382.2 L940.4 382.5 L940.8 382.8 L941.3 383.1 L941.8 383.4 L942.3 383.7 L942.8 384.0 L943.2 384.4 L943.7 384.7 L944.2 385.0 L944.7 385.3 L945.1 385.7 L945.6 386.0 L946.0 386.4 L946.5 386.7 L946.9 387.1 L947.4 387.4 L947.8 387.8 L948.3 388.1 L948.7 388.5 L949.2 388.9 L949.6 389.2 L950.0 389.6 L950.4 390.0 L950.9 390.4 L951.3 390.7 L951.7 391.1 L952.1 391.5 L952.5 391.9 L952.9 392.3 L953.3 392.7 L953.7 393.1 L954.1 393.6 L954.5 394.0 L954.9 394.4 L955.3 394.8 L955.7 395.2 L956.1 395.7 L956.5 396.1 L956.9 396.5 L957.2 397.0 L957.6 397.4 L958.0 397.8 L958.3 398.3 L958.7 398.7 L959.1 399.2 L959.4 399.6 L959.8 400.1 L960.1 400.6 L960.5 401.0 L960.9 401.5 L961.2 401.9 L961.6 402.4 L961.9 402.9 L962.2 403.3 L962.6 403.8 L962.9 404.3 L963.3 404.8 L963.6 405.2 L963.9 405.7 L964.3 406.2 L964.6 406.7 L964.9 407.2 L965.2 407.6 L965.6 408.1 L965.9 408.6 L966.2 409.1 L966.5 409.6 L966.8 410.1 L967.1 410.6 L967.4 411.1 L967.7 411.6 L968.0 412.1 L968.3 412.6 L968.6 413.1 L968.9 413.6 L969.1 414.1 L969.4 414.6 L969.7 415.1 L970.0 415.6 L970.3 416.1 L970.5 416.6 L970.8 417.2 L971.1 417.7 L971.3 418.2 L971.6 418.7 L971.8 419.2 L972.1 419.8 L972.3 420.3 L972.6 420.8 L972.8 421.3 L973.1 421.9 L973.3 422.4 L973.6 422.9 L973.8 423.5 L974.0 424.0 L974.2 424.5 L974.5 425.1 L974.7 425.6 L974.9 426.1 L975.1 426.7 L975.3 427.2 L975.5 427.7 L975.7 428.3 L975.9 428.8 L976.1 429.4 L976.3 429.9 L976.5 430.5 L976.7 431.0 L976.9 431.5 L977.1 432.1 L977.2 432.7 L977.4 433.2 L977.6 433.8 L977.7 434.3 L977.9 434.9 L978.0 435.4 L978.2 436.0 L978.4 436.5 L978.5 437.1 L978.7 437.7 L978.8 438.2 L978.9 438.8 L979.1 439.4 L979.2 439.9 L979.3 440.5 L979.5 441.1 L979.6 441.6 L979.7 442.2 L979.8 442.8 L980.0 443.4 L980.1 443.9 L980.2 444.5 L980.3 445.1 L980.4 445.6 L980.5 446.2 L980.6 446.8 L980.7 447.4 L980.8 448.0 L980.9 448.5 L981.0 449.1 L981.1 449.7 L981.2 450.3 L981.3 450.9 L981.4 451.4 L981.5 452.0 L981.5 452.6 L981.6 453.2 L981.7 453.8 L981.8 454.3 L981.9 454.9 L981.9 455.5 L982.0 456.1 L982.1 456.7 L982.1 457.2 L982.2 457.8 L982.2 458.4 L982.3 459.0 L982.4 459.6 L982.4 460.1 L982.5 460.7 L982.5 461.3 L982.5 461.9 L982.6 462.5 L982.6 463.1 L982.6 463.6 L982.7 464.2 L982.7 464.8 L982.7 465.4 L982.7 466.0 L982.8 466.5 L982.8 467.1 L982.8 467.7 L982.8 468.3 L982.8 468.8 L982.8 469.4 L982.8 470.0 L982.8 470.6 L982.8 471.1 L982.8 471.7 L982.7 472.3 L982.7 472.9 L982.7 473.4 L982.6 474.0 L982.6 474.6 L982.6 475.2 L982.5 475.7 L982.5 476.3 L982.4 476.9 L982.3 477.4 L982.3 478.0 L982.2 478.6 L982.1 479.1 L982.0 479.7 L982.0 480.3 L981.9 480.8 L981.8 481.4 L981.7 482.0 L981.6 482.5 L981.5 483.1 L981.4 483.7 L981.3 484.2 L981.1 484.8 L981.0 485.3 L980.9 485.9 L980.8 486.4 L980.6 487.0 L980.5 487.5 L980.3 488.0 L980.2 488.6 L980.0 489.1 L979.8 489.6 L979.7 490.2 L979.5 490.7 L979.3 491.2 L979.1 491.7 L978.9 492.2 L978.7 492.7 L978.5 493.1 L978.3 493.6 L978.1 494.0 L977.8 494.5 L977.6 494.9 L977.3 495.3 L977.0 495.7 L976.7 496.1 L976.4 496.4 L976.1 496.8 L975.8 497.1 L975.4 497.5 L975.0 497.9 L974.6 498.2 L974.2 498.5 L973.8 498.9 L973.4 499.2 L973.0 499.5 L972.5 499.9 L972.1 500.2 L971.6 500.5 L971.1 500.9 L970.6 501.2 L970.1 501.6 L969.6 501.9 L969.2 502.2 L968.7 502.6 L968.2 503.0 L958.0 500.0 L935.0 486.0 L910.0 477.0 L886.0 472.0 L866.0 466.0 L848.0 461.0 L832.0 462.0 L812.0 466.0 L792.0 463.0 Z" fill="#929292" filter="url(#bl3)"/>
<path d="M770.3 442.0 L773.2 442.9 L776.2 442.5 L779.2 442.4 L782.1 442.1" fill="none" stroke="#333333" stroke-width="4" stroke-linecap="round" stroke-linejoin="round"/>
<path d="M770.5 428.0 L773.3 429.1 L776.2 429.6 L779.1 428.6" fill="none" stroke="#333333" stroke-width="4" stroke-linecap="round" stroke-linejoin="round"/>
<path d="M775.0 412.8 L778.0 412.9 L780.6 414.4" fill="none" stroke="#333333" stroke-width="4" stroke-linecap="round" stroke-linejoin="round"/>
<path d="M781.7 401.3 L784.2 403.1 L786.1 405.3" fill="none" stroke="#333333" stroke-width="4" stroke-linecap="round" stroke-linejoin="round"/>
<path d="M790.9 390.7 L793.5 392.2 L796.5 392.4" fill="none" stroke="#333333" stroke-width="4" stroke-linecap="round" stroke-linejoin="round"/>
<path d="M801.9 382.1 L803.2 384.8 L803.1 387.8 L803.5 390.8" fill="none" stroke="#333333" stroke-width="4" stroke-linecap="round" stroke-linejoin="round"/>
<path d="M812.5 376.2 L812.4 379.2 L812.9 382.1 L812.1 385.0 L811.0 387.8" fill="none" stroke="#333333" stroke-width="4" stroke-linecap="round" stroke-linejoin="round"/>
<path d="M825.4 371.2 L825.7 374.2 L825.7 377.2 L825.9 380.2" fill="none" stroke="#333333" stroke-width="4" stroke-linecap="round" stroke-linejoin="round"/>
<path d="M838.8 367.5 L838.6 370.5 L838.3 373.5 L837.5 376.4" fill="none" stroke="#333333" stroke-width="4" stroke-linecap="round" stroke-linejoin="round"/>
<path d="M853.7 364.8 L855.2 367.4 L857.6 369.2 L860.5 369.7 L863.5 369.6 L866.5 369.7 L869.3 370.7" fill="none" stroke="#333333" stroke-width="4" stroke-linecap="round" stroke-linejoin="round"/>
<path d="M860.5 369.7 L862.4 375.4" stroke="#383838" stroke-width="2.6" stroke-linecap="round"/>
<path d="M865.1 363.6 L865.2 366.6 L864.1 369.4 L863.1 372.2 L863.0 375.2" fill="none" stroke="#333333" stroke-width="4" stroke-linecap="round" stroke-linejoin="round"/>
<path d="M864.1 369.4 L868.6 373.3" stroke="#383838" stroke-width="2.6" stroke-linecap="round"/>
<path d="M877.7 363.0 L876.9 365.9 L876.1 368.8 L875.7 371.8 L876.5 374.7 L876.5 377.7 L877.7 380.5 L879.2 383.0" fill="none" stroke="#333333" stroke-width="4" stroke-linecap="round" stroke-linejoin="round"/>
<path d="M889.2 363.3 L890.3 366.0 L891.7 368.7" fill="none" stroke="#333333" stroke-width="4" stroke-linecap="round" stroke-linejoin="round"/>
<path d="M904.2 364.9 L903.1 367.7 L900.9 369.7 L898.2 371.0" fill="none" stroke="#333333" stroke-width="4" stroke-linecap="round" stroke-linejoin="round"/>
<path d="M918.3 368.1 L916.4 370.3 L914.5 372.7 L913.7 375.6 L914.4 378.5 L914.2 381.5 L914.0 384.5" fill="none" stroke="#333333" stroke-width="4" stroke-linecap="round" stroke-linejoin="round"/>
<path d="M913.7 375.6 L908.8 379.0" stroke="#383838" stroke-width="2.6" stroke-linecap="round"/>
<path d="M929.2 371.8 L928.0 374.5 L926.0 376.8 L924.2 379.2 L922.9 381.9 L922.8 384.9" fill="none" stroke="#333333" stroke-width="4" stroke-linecap="round" stroke-linejoin="round"/>
<path d="M943.8 379.3 L943.0 382.2 L942.2 385.1 L940.5 387.6 L939.5 390.4 L938.7 393.3 L936.8 395.6 L935.1 398.1" fill="none" stroke="#333333" stroke-width="4" stroke-linecap="round" stroke-linejoin="round"/>
<path d="M939.5 390.4 L933.5 390.7" stroke="#383838" stroke-width="2.6" stroke-linecap="round"/>
<path d="M956.1 389.1 L953.3 390.3 L950.4 390.9 L947.5 391.8" fill="none" stroke="#333333" stroke-width="4" stroke-linecap="round" stroke-linejoin="round"/>
<path d="M965.5 400.2 L962.7 401.3 L959.9 402.4 L957.2 403.6 L954.7 405.3 L951.8 406.1 L948.9 406.5 L946.4 408.2" fill="none" stroke="#333333" stroke-width="4" stroke-linecap="round" stroke-linejoin="round"/>
<path d="M954.7 405.3 L954.3 411.3" stroke="#383838" stroke-width="2.6" stroke-linecap="round"/>
<path d="M973.1 411.9 L971.1 414.2 L968.4 415.4 L965.4 415.9 L962.5 416.6 L960.0 418.3 L957.3 419.5 L954.8 421.1" fill="none" stroke="#333333" stroke-width="4" stroke-linecap="round" stroke-linejoin="round"/>
<path d="M978.4 422.8 L976.0 424.6 L973.6 426.3" fill="none" stroke="#333333" stroke-width="4" stroke-linecap="round" stroke-linejoin="round"/>
<path d="M982.1 433.0 L979.1 432.4 L976.1 432.5 L973.2 433.1 L970.8 434.9 L967.9 435.5" fill="none" stroke="#333333" stroke-width="4" stroke-linecap="round" stroke-linejoin="round"/>
<path d="M985.2 446.6 L982.5 448.0 L979.6 448.8 L977.2 450.6 L974.8 452.4 L972.6 454.4" fill="none" stroke="#333333" stroke-width="4" stroke-linecap="round" stroke-linejoin="round"/>
<path d="M977.2 450.6 L971.2 449.6" stroke="#383838" stroke-width="2.6" stroke-linecap="round"/>
<path d="M986.7 458.0 L983.7 458.0 L981.1 456.5 L978.8 454.6 L976.0 453.4 L973.3 452.2" fill="none" stroke="#333333" stroke-width="4" stroke-linecap="round" stroke-linejoin="round"/>
<path d="M978.8 454.6 L973.5 457.3" stroke="#383838" stroke-width="2.6" stroke-linecap="round"/>
<path d="M987.3 470.1 L984.5 468.9 L982.3 466.9 L980.1 464.8" fill="none" stroke="#333333" stroke-width="4" stroke-linecap="round" stroke-linejoin="round"/>
<path d="M986.2 482.1 L983.2 481.8 L980.2 481.7 L977.3 481.0 L974.3 480.7 L971.6 479.4 L968.7 478.8 L966.2 477.1" fill="none" stroke="#333333" stroke-width="4" stroke-linecap="round" stroke-linejoin="round"/>
<path d="M974.3 480.7 L968.5 482.3" stroke="#383838" stroke-width="2.6" stroke-linecap="round"/>
<path d="M983.3 493.4 L981.1 491.3 L979.4 488.9 L978.2 486.1 L978.3 483.1 L978.4 480.1" fill="none" stroke="#333333" stroke-width="4" stroke-linecap="round" stroke-linejoin="round"/>
<path d="M974.7 503.8 L972.3 502.0 L969.6 500.8 L967.4 498.7 L965.3 496.6 L962.5 495.5" fill="none" stroke="#333333" stroke-width="4" stroke-linecap="round" stroke-linejoin="round"/>
<ellipse cx="822" cy="409" rx="9" ry="3" fill="#484848" transform="rotate(-25 822 409)"/>
<ellipse cx="790" cy="424" rx="3" ry="7" fill="#484848" transform="rotate(20 790 424)"/>
<ellipse cx="795" cy="443" rx="6" ry="3" fill="#484848" transform="rotate(10 795 443)"/>
<ellipse cx="850" cy="396" rx="8" ry="2.5" fill="#484848" transform="rotate(-10 850 396)"/>
<ellipse cx="900" cy="398" rx="6" ry="2.5" fill="#484848" transform="rotate(5 900 398)"/>
<ellipse cx="930" cy="404" rx="7" ry="3" fill="#484848" transform="rotate(20 930 404)"/>
<ellipse cx="946" cy="430" rx="9" ry="3" fill="#484848" transform="rotate(-15 946 430)"/>
<ellipse cx="930" cy="455" rx="8" ry="3" fill="#484848" transform="rotate(25 930 455)"/>
<ellipse cx="955" cy="462" rx="6" ry="3" fill="#484848" transform="rotate(-30 955 462)"/>
<ellipse cx="960" cy="478" rx="7" ry="2.5" fill="#484848" transform="rotate(10 960 478)"/>
<ellipse cx="905" cy="425" rx="5" ry="2" fill="#484848" transform="rotate(0 905 425)"/>
<ellipse cx="812" cy="436" rx="4" ry="2" fill="#484848" transform="rotate(0 812 436)"/>
<path d="M925 470 Q935 455 952 450 Q965 448 975 440" fill="none" stroke="#2e2e2e" stroke-width="3"/>
<path d="M940 420 Q952 432 968 428" fill="none" stroke="#2e2e2e" stroke-width="2.6"/>
<path d="M815 447 C812 424 838 410 868 410 C898 410 918 424 920 444 C918 452 912 455 906 451 C900 436 886 427 866 427 C846 427 830 434 826 449 C822 454 816 452 815 447 Z" fill="#181818"/>
<path d="M828 448 C834 436 848 429 866 429 C886 429 900 438 905 452 C898 466 884 472 866 470 C848 468 834 460 828 448 Z" fill="#848484"/>
<ellipse cx="877" cy="454" rx="21" ry="16" fill="#a6a6a6"/>
<ellipse cx="872" cy="468" rx="7" ry="6" fill="#a8a8a8"/>
<path d="M838 462 L860 458 L866 480 L884 512 L880 532 L866 530 L850 500 Z" fill="#141414"/>
<path d="M882 470 C890 472 900 475 905 480 L896 500 L884 500 Z" fill="#242424"/>
<path d="M866 478 C872 472 884 474 888 482 L902 516 C900 526 888 530 880 522 Z" fill="#a2a2a2"/>
<path d="M880 478 C904 476 932 484 952 498 C966 508 968 522 958 532 C944 541 920 542 900 535 C886 527 878 512 876 496 Z" fill="#999999"/>
<path d="M914.7 504.5 L923.6 480.1" stroke="#5c5c5c" stroke-width="1.1"/>
<path d="M916.1 505.1 L929.5 482.9" stroke="#5c5c5c" stroke-width="1.1"/>
<path d="M917.4 506.1 L934.8 486.7" stroke="#5c5c5c" stroke-width="1.1"/>
<path d="M918.4 507.2 L939.2 491.5" stroke="#5c5c5c" stroke-width="1.1"/>
<path d="M919.2 508.5 L942.6 497.1" stroke="#5c5c5c" stroke-width="1.1"/>
<path d="M919.7 509.9 L944.8 503.2" stroke="#5c5c5c" stroke-width="1.1"/>
<path d="M920.0 511.4 L945.9 509.6" stroke="#5c5c5c" stroke-width="1.1"/>
<path d="M919.9 513.0 L945.7 516.1" stroke="#5c5c5c" stroke-width="1.1"/>
<path d="M919.6 514.5 L944.3 522.5" stroke="#5c5c5c" stroke-width="1.1"/>
<path d="M919.0 515.9 L941.7 528.5" stroke="#5c5c5c" stroke-width="1.1"/>
<path d="M918.1 517.1 L938.0 533.9" stroke="#5c5c5c" stroke-width="1.1"/>
<path d="M917.0 518.2 L933.4 538.4" stroke="#5c5c5c" stroke-width="1.1"/>
<path d="M915.8 519.1 L928.0 542.0" stroke="#5c5c5c" stroke-width="1.1"/>
<path d="M914.3 519.7 L921.9 544.5" stroke="#5c5c5c" stroke-width="1.1"/>
<path d="M912.8 520.0 L915.6 545.8" stroke="#5c5c5c" stroke-width="1.1"/>
<path d="M911.3 520.0 L909.0 545.9" stroke="#5c5c5c" stroke-width="1.1"/>
<path d="M909.8 519.7 L902.6 544.7" stroke="#5c5c5c" stroke-width="1.1"/>
<path d="M896 490 Q918 496 930 520" fill="none" stroke="#a6a6a6" stroke-width="2.5"/>
<path d="M872 538 C900 547 942 546 970 532" fill="none" stroke="#1a1a1a" stroke-width="3"/>
<path d="M958 500 C935 486 910 476 884 472" fill="none" stroke="#262626" stroke-width="2.5"/>
</g></g></svg>
<!-- vertical toolbar icons (white) -->
<svg class="a" style="left:317px;top:128px" width="36" height="751" viewBox="317 128 36 751">
<g fill="none" stroke="#f2f2f2" stroke-width="1.5">
<!-- << -->
<path d="M335 139.5 L328.5 146.5 L335 153.5 M341.5 139.5 L335 146.5 L341.5 153.5" stroke-width="1.6"/>
<!-- ruler -->
<g transform="rotate(-44 335.2 218)"><rect x="323.8" y="214.8" width="22.8" height="6.4" rx=".8" stroke-width="1.3"/><path d="M327.5 214.8 V217 M330.5 214.8 V216.6 M333.5 214.8 V217.3 M336.5 214.8 V216.6 M339.5 214.8 V217 M342.5 214.8 V216.6" stroke-width="1"/></g>
<!-- angle -->
<path d="M340.2 246.4 L325.4 261 H346" stroke-width="1.6"/><path d="M332.8 254 Q335.6 256.5 335.6 261" stroke-width="1.3"/>
<!-- ellipse -->
<ellipse cx="335" cy="290" rx="10" ry="6.6" stroke-width="1.3"/>
<!-- eraser line -->
<path d="M325.5 336 H345" stroke-width="1.8"/>
<!-- move arrows -->
<path d="M335 386 V409 M323.5 397.5 H346.5" stroke-width="1.6"/>
<path d="M331 390 L335 386 L339 390 M331 405 L335 409 L339 405 M327.5 393.5 L323.5 397.5 L327.5 401.5 M342.5 393.5 L346.5 397.5 L342.5 401.5" stroke-width="1.6"/>
<!-- magnifier -->
<circle cx="332.5" cy="430.5" r="7.6" stroke-width="1.5"/><path d="M338.5 436.5 L344.5 442.5" stroke-width="3.2" stroke-linecap="round"/>
<!-- rotate -->
<path d="M343.5 467 A9 9 0 0 0 327.5 462.5" stroke-width="1.4"/><path d="M326.5 471.5 A9 9 0 0 0 342.5 476" stroke-width="1.4"/>
<path d="M326 458.5 L327 463 L331.5 462.5 M344 480 L343 475.5 L338.5 476" stroke-width="1.3"/>
<!-- resize vertical -->
<path d="M335 494.5 V517.5 M331.5 498 L335 494.5 L338.5 498 M331.5 514 L335 517.5 L338.5 514" stroke-width="1.5"/>
<!-- rotate gear -->
<path d="M335.8 570 A9.2 9.2 0 1 1 329.6 572.4" stroke-width="2.1"/>
<circle cx="335" cy="579.3" r="2.9" stroke-width="1.9"/>
<path d="M335 574 V575.5 M335 583.1 V584.6 M329.7 579.3 H331.2 M338.8 579.3 H340.3 M331.3 575.6 L332.3 576.6 M337.7 582 L338.7 583 M331.3 583 L332.3 582 M337.7 576.6 L338.7 575.6" stroke-width="1.7"/>
<!-- gear sun -->
<path d="M337.5 605.3 A7.7 7.7 0 1 1 332.2 607.4" stroke-width="1.7"/>
<circle cx="337.3" cy="613.3" r="2.4" stroke-width="1.6"/>
<path d="M337.3 609.2 V610.2 M337.3 616.4 V617.4 M333.2 613.3 H334.2 M340.4 613.3 H341.4 M334.4 610.4 L335.1 611.1 M339.5 615.5 L340.2 616.2 M334.4 616.2 L335.1 615.5 M339.5 611.1 L340.2 610.4" stroke-width="1.3"/>
<path d="M326.3 614.5 V615.8 M324 618.5 H325.5 M325.5 622.3 L326.5 621.3 M330.3 624.5 V623 M334 622.5 L333 621.5" stroke-width="1.2"/>
<!-- layouts -->
<rect x="325.5" y="748.5" width="19.5" height="9" stroke-width="1.4"/><rect x="325.5" y="760.5" width="8" height="7" stroke-width="1.4"/><rect x="337" y="760.5" width="8" height="7" stroke-width="1.4"/>
<rect x="325.5" y="784.5" width="9" height="19" stroke-width="1.4"/><rect x="337.5" y="784.5" width="7.5" height="7.5" stroke-width="1.4"/><rect x="337.5" y="795.5" width="7.5" height="8" stroke-width="1.4"/>
<rect x="325.5" y="820.5" width="5.5" height="19" stroke-width="1.4"/><rect x="332.5" y="820.5" width="5.5" height="19" stroke-width="1.4"/><rect x="339.5" y="820.5" width="5.5" height="19" stroke-width="1.4"/>
<rect x="325.5" y="856.5" width="19.5" height="6" stroke-width="1.4"/><rect x="325.5" y="864.5" width="19.5" height="6" stroke-width="1.4"/><path d="M325.5 873.5 H345" stroke-width="1.2"/>
</g>
<g fill="#f2f2f2">
<!-- document with eye -->
<path d="M324 171 H335.8 L341.2 176.8 V192.8 H324 Z"/>
<path d="M335.3 172.2 V176.6 H339.9 Z" fill="#000"/>
<path d="M327.8 176.5 H331.9 M327.8 179.5 H337.7 M327.8 182.5 H337.7 M327.8 185.5 H336 M327.8 188.5 H333" stroke="#000" stroke-width="1"/>
<ellipse cx="340" cy="189.2" rx="6.6" ry="4.2" fill="#000"/>
<path d="M334.6 189.2 Q340 184.4 345.4 189.2 Q340 194 334.6 189.2 Z" fill="none" stroke="#f2f2f2" stroke-width="1"/>
<circle cx="340" cy="189" r="1.9" fill="none" stroke="#f2f2f2" stroke-width="1"/>
<circle cx="340" cy="189" r=".9"/>
<!-- eraser -->
<g transform="translate(335.6 324) rotate(-45)"><rect x="-7.2" y="-4.7" width="14.4" height="9.4" rx="1.8" fill="none" stroke="#f2f2f2" stroke-width="1.6"/><path d="M-1.2 -5.5 H5.4 Q8 -5.5 8 -2.9 V2.9 Q8 5.5 5.4 5.5 H-1.2 Z"/></g>
<!-- resize square -->
<rect x="333" y="502.5" width="4" height="6.5"/>
<!-- triangles -->
<path d="M335 530 L343 538 H327 Z"/><path d="M335 553 L343 545 H327 Z"/>
<rect x="327" y="539" width="16" height="1.5"/><rect x="327" y="541.8" width="16" height="1.5"/>
<path d="M336.3 566.6 L331 570.2 L336.3 573.6 Z"/>
<path d="M337.8 602.8 L333.8 605.4 L337.8 608 Z"/>
<path d="M329.6 616.3 A2.9 2.9 0 0 0 329.6 622.1 L331.5 622 Q330.5 619.2 331.8 616.6 Z"/>
<!-- two bars -->
<rect x="324" y="675" width="9.5" height="22"/><rect x="336.2" y="675" width="9.5" height="22"/>
</g>
</svg>
<!-- active W/L -->
<div class="a" style="left:319px;top:346px;width:31px;height:31px;border-radius:5px;background:#63d0dc;box-shadow:inset 0 0 4px 1px #3aa9b6"></div>
<svg class="a" style="left:319px;top:346px" width="31" height="31" viewBox="0 0 31 31">
<circle cx="15.5" cy="15.5" r="6" fill="#fff"/>
<path d="M15.5 10.5 A5 5 0 0 1 15.5 20.5 Z" fill="#63d0dc"/>
<g stroke="#fff" stroke-width="1.5"><path d="M15.5 3.5 V6.5 M15.5 24.5 V27.5 M3.5 15.5 H6.5 M24.5 15.5 H27.5 M7 7 L9 9 M22 22 L24 24 M7 24 L9 22 M22 9 L24 7"/></g>
</svg>
<!-- active white square -->
<div class="a" style="left:319px;top:634px;width:31px;height:31px;border-radius:5px;background:#3fb6c4;box-shadow:inset 0 0 5px 2px #2a8b96"></div>
<div class="a" style="left:324px;top:639px;width:22px;height:22px;background:#fff"></div>
<!-- active cyan square -->
<div class="a" style="left:319px;top:706px;width:31px;height:31px;border-radius:5px;background:#46bcc8;box-shadow:inset 0 0 5px 2px #2a8b96"></div>
<div class="a" style="left:324px;top:711px;width:21px;height:21px;background:#70e2ee;border:1.2px solid #e8ffff"></div>

<!-- player buttons -->
<svg class="a" style="left:353px;top:839px" width="1024" height="40" viewBox="353 839 1024 40">
<g fill="none" stroke="#1a9bb5" stroke-width="1.8">
<rect x="405.9" y="847.2" width="24" height="24" rx="5"/>
<rect x="443.9" y="847.2" width="24" height="24" rx="5"/>
<rect x="481.9" y="847.2" width="24" height="24" rx="5"/>
<rect x="777.6" y="847" width="24" height="24" rx="5"/>
<rect x="815.6" y="847" width="24" height="24" rx="5"/>
<rect x="853.6" y="847" width="24" height="24" rx="5"/>
<rect x="891.6" y="847" width="24" height="24" rx="5"/>
<rect x="929.6" y="847" width="24" height="24" rx="5"/>
<rect x="1224.8" y="847.8" width="24" height="24" rx="5"/>
<rect x="1338.8" y="847.8" width="24" height="24" rx="5"/>
</g>
<g fill="none" stroke="#0e3d48" stroke-width="1.5">
<rect x="1110.8" y="847.8" width="24" height="24" rx="5"/>
<rect x="1148.8" y="847.8" width="24" height="24" rx="5"/>
<rect x="1186.8" y="847.8" width="24" height="24" rx="5"/>
<rect x="1262.8" y="847.8" width="24" height="24" rx="5"/>
<rect x="1300.8" y="847.8" width="24" height="24" rx="5"/>
</g>
<g fill="#fff">
<!-- download arrow -->
<rect x="414.5" y="850.5" width="6" height="1.3"/><rect x="414.5" y="853" width="6" height="1.3"/>
<path d="M414.5 855.5 H420.5 V860 H425 L417.5 868 L410 860 H414.5 Z"/>
<!-- speed minus -->
<path d="M447.6 860 A8.8 8.8 0 0 1 465 860" fill="none" stroke="#fff" stroke-width="1.7"/>
<path d="M447.8 860.3 L449.3 852.8 L456.5 858.6 L454.6 860.8 Z"/>
<rect x="451.8" y="864.5" width="8" height="2"/>
<!-- speed plus -->
<path d="M485.6 860 A8.8 8.8 0 0 1 503 860" fill="none" stroke="#fff" stroke-width="1.7"/>
<path d="M502.8 860.3 L501.3 852.8 L494.1 858.6 L496 860.8 Z"/>
<rect x="489.8" y="863.9" width="8" height="2"/><rect x="492.8" y="860.9" width="2" height="8"/>
<!-- first -->
<rect x="784" y="852.5" width="1.3" height="13"/><path d="M795 852.5 V865.5 L786.5 859 Z"/>
<!-- play -->
<path d="M861 852.5 V865.5 L871 859 Z"/>
<!-- last -->
<path d="M935 852.5 V865.5 L943.5 859 Z"/><rect x="944.8" y="852.5" width="1.3" height="13"/>
<!-- dots -->
<circle cx="1230.8" cy="859.8" r="2.3"/><circle cx="1236.8" cy="859.8" r="2.3"/><circle cx="1242.8" cy="859.8" r="2.3"/>
<!-- person arrow -->
<circle cx="1347.5" cy="856.2" r="2.7"/><path d="M1341.5 865.5 Q1342 859.5 1347.5 859.8 Q1353 859.5 1353.5 865.5 Z"/><path d="M1355 855.8 L1359 859.8 L1355 863.8 Z"/>
</g>
<g fill="none" stroke="#fff" stroke-width="1.2">
<path d="M831 853.5 L823 859 L831 864.5"/>
<path d="M899.5 853.5 L907.5 859 L899.5 864.5"/>
</g>
<g fill="#4a4a4a">
<path d="M1116 859.8 L1123 853.8 V865.8 Z"/><path d="M1121 859.8 L1128 853.8 V865.8 Z" fill="none" stroke="#4a4a4a" stroke-width="1.3"/>
<path d="M1166.5 859.8 L1159.5 853.8 V865.8 Z"/><path d="M1161.5 859.8 L1154.5 853.8 V865.8 Z" fill="none" stroke="#4a4a4a" stroke-width="1.3"/>
<path d="M1190 859.8 L1194 856.8 V862.8 Z"/>
<rect x="1196.5" y="854.5" width="11" height="11" rx="2" fill="none" stroke="#4a4a4a" stroke-width="1.4"/><path d="M1202 854.5 V865.5 M1196.5 860 H1207.5" stroke="#4a4a4a" stroke-width="1.4"/>
<rect x="1266.5" y="854.5" width="11" height="11" rx="2" fill="none" stroke="#4a4a4a" stroke-width="1.4"/><path d="M1272 854.5 V865.5 M1266.5 860 H1277.5" stroke="#4a4a4a" stroke-width="1.4"/>
<path d="M1283.5 859.8 L1279.5 856.8 V862.8 Z"/>
<path d="M1304 859.8 L1308 856.8 V862.8 Z"/>
<circle cx="1315.5" cy="856.2" r="2.7"/><path d="M1309.5 865.5 Q1310 859.5 1315.5 859.8 Q1321 859.5 1321.5 865.5 Z"/>
</g>
</svg>

</body></html>
